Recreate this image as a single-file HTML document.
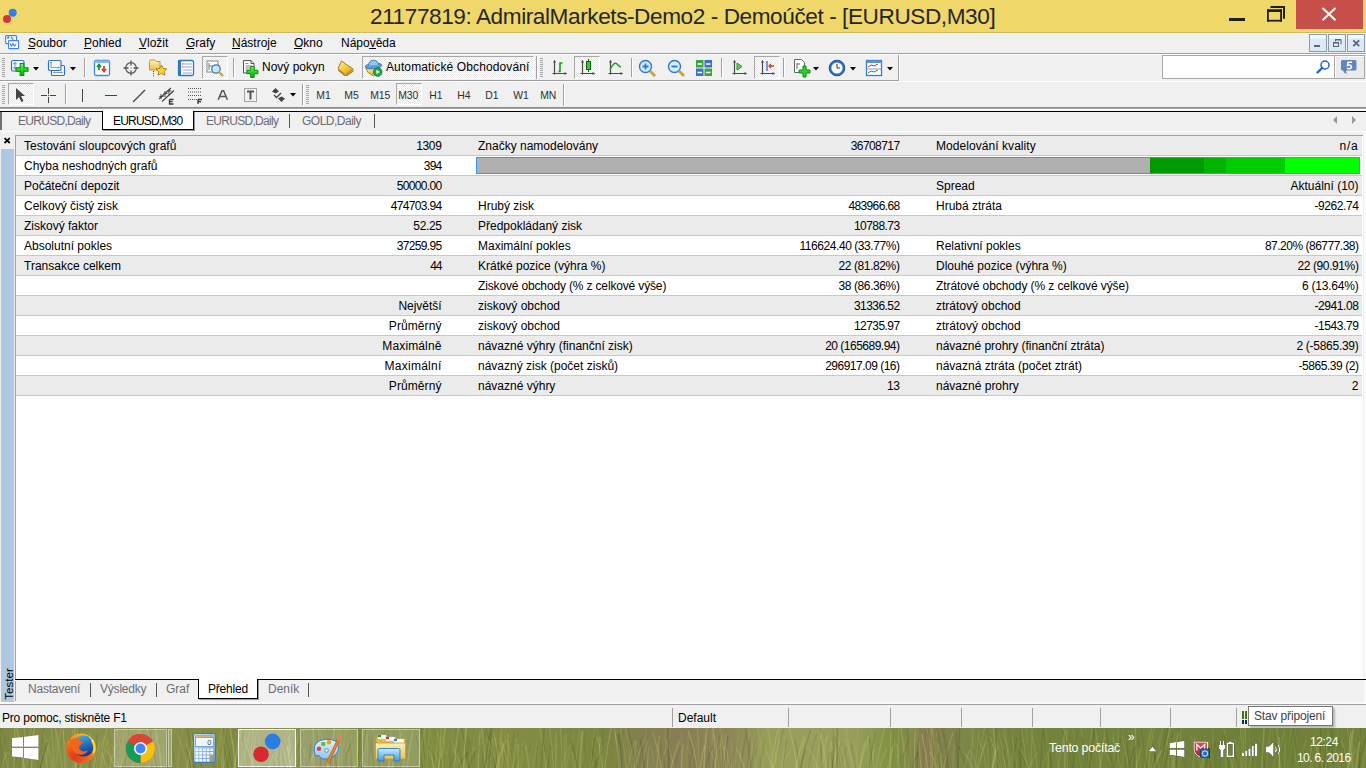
<!DOCTYPE html><html><head><meta charset="utf-8"><style>
html,body{margin:0;padding:0}body{width:1366px;height:768px;position:relative;overflow:hidden;background:#f0f0f0;font-family:"Liberation Sans", sans-serif;font-size:12px}
.a{position:absolute}.t{position:absolute;white-space:pre}
</style></head><body>
<div class="a" style="left:0px;top:0px;width:1366px;height:32px;background:#efd76a"></div>
<div class="a" style="left:0px;top:32px;width:1366px;height:1px;background:#cfb95c"></div>
<svg class="a" style="left:0px;top:0px;" width="24" height="32" viewBox="0 0 24 32"><circle cx="12.7" cy="12.7" r="4" fill="#2f80e8"/><circle cx="7" cy="19" r="4" fill="#d9333a"/></svg>
<div class="t" style="left:370px;top:6.17px;font-size:22.6px;line-height:22.6px;color:#262626;letter-spacing:-0.42px">21177819: AdmiralMarkets-Demo2 - Demoúčet - [EURUSD,M30]</div>
<div class="a" style="left:1229px;top:18px;width:16px;height:3px;background:#1e1e1e"></div>
<svg class="a" style="left:1266px;top:5px;" width="20" height="18" viewBox="0 0 20 18"><rect x="4.5" y="1" width="14.5" height="2" fill="#1e1e1e"/><rect x="17" y="1" width="2" height="12.7" fill="#1e1e1e"/><rect x="1" y="4.3" width="15" height="2.7" fill="#1e1e1e"/><rect x="1" y="4.3" width="1.8" height="12.3" fill="#1e1e1e"/><rect x="14.2" y="4.3" width="1.8" height="12.3" fill="#1e1e1e"/><rect x="1" y="14.8" width="15" height="1.8" fill="#1e1e1e"/></svg>
<div class="a" style="left:1296px;top:0px;width:67px;height:29px;background:#c74f4a"></div>
<svg class="a" style="left:1321px;top:7px;" width="16" height="14" viewBox="0 0 16 14"><path d="M1.5 1 L14.5 13.2 M14.5 1 L1.5 13.2" stroke="#fff" stroke-width="2"/></svg>
<div class="a" style="left:0px;top:33px;width:1366px;height:1px;background:#f6f6f6"></div>
<svg class="a" style="left:4px;top:34px;" width="17" height="17" viewBox="0 0 17 17"><rect x="1.6" y="1.6" width="11" height="8" rx="1" fill="#fff" stroke="#3d82ee" stroke-width="1.1"/><path d="M2.8 4.6 L4.4 3 L5.4 4.6 M7 3 L8.6 4.6 L9.2 6" stroke="#3d82ee" stroke-width="1.1" fill="none"/><rect x="4.6" y="6.6" width="10" height="8" rx="0.5" fill="#fff" stroke="#3d82ee" stroke-width="1.1"/><path d="M6.2 9.5 L7.5 12 L9 9.5 L10.5 12 L12 10.2" stroke="#3d82ee" stroke-width="1.1" fill="none"/></svg>
<div class="t" style="left:28px;top:37.34px;font-size:12px;line-height:12px;color:#000;">Soubor</div>
<div class="t" style="left:84px;top:37.34px;font-size:12px;line-height:12px;color:#000;">Pohled</div>
<div class="t" style="left:139px;top:37.34px;font-size:12px;line-height:12px;color:#000;">Vložit</div>
<div class="t" style="left:186px;top:37.34px;font-size:12px;line-height:12px;color:#000;">Grafy</div>
<div class="t" style="left:232px;top:37.34px;font-size:12px;line-height:12px;color:#000;">Nástroje</div>
<div class="t" style="left:294px;top:37.34px;font-size:12px;line-height:12px;color:#000;">Okno</div>
<div class="t" style="left:341px;top:37.34px;font-size:12px;line-height:12px;color:#000;">Nápověda</div>
<div class="a" style="left:28px;top:48px;width:7px;height:1px;background:#000"></div>
<div class="a" style="left:84px;top:48px;width:7px;height:1px;background:#000"></div>
<div class="a" style="left:139px;top:48px;width:7px;height:1px;background:#000"></div>
<div class="a" style="left:186px;top:48px;width:8px;height:1px;background:#000"></div>
<div class="a" style="left:232px;top:48px;width:8px;height:1px;background:#000"></div>
<div class="a" style="left:294px;top:48px;width:8px;height:1px;background:#000"></div>
<div class="a" style="left:369px;top:48px;width:7px;height:1px;background:#000"></div>
<div class="a" style="left:1309px;top:34px;width:18px;height:18px;background:linear-gradient(#f3f8fd 0,#f3f8fd 3px,#dde9f6 4px);border:1px solid #8a9aac;box-sizing:border-box"></div>
<div class="a" style="left:1328px;top:34px;width:18px;height:18px;background:linear-gradient(#f3f8fd 0,#f3f8fd 3px,#dde9f6 4px);border:1px solid #8a9aac;box-sizing:border-box"></div>
<div class="a" style="left:1347px;top:34px;width:18px;height:18px;background:linear-gradient(#f3f8fd 0,#f3f8fd 3px,#dde9f6 4px);border:1px solid #8a9aac;box-sizing:border-box"></div>
<svg class="a" style="left:1309px;top:34px;" width="18" height="18" viewBox="0 0 18 18"><rect x="5" y="11" width="6" height="2" fill="#56667a"/></svg>
<svg class="a" style="left:1328px;top:34px;" width="18" height="18" viewBox="0 0 18 18"><path d="M7.5 7.5 v-2 h5.5 v4.5 h-0.5" fill="none" stroke="#56667a" stroke-width="1"/><rect x="7" y="5" width="6" height="1.5" fill="#56667a"/><rect x="5.5" y="8.5" width="5" height="4" fill="none" stroke="#56667a" stroke-width="1"/><rect x="5" y="8" width="6" height="1.5" fill="#56667a"/></svg>
<svg class="a" style="left:1347px;top:34px;" width="18" height="18" viewBox="0 0 18 18"><path d="M6.3 6.3 L12.2 12.2 M12.2 6.3 L6.3 12.2" stroke="#56667a" stroke-width="1.8"/></svg>
<div class="a" style="left:0px;top:53px;width:1366px;height:1px;background:#a0a0a0"></div>
<div class="a" style="left:0px;top:54px;width:1366px;height:1px;background:#ffffff"></div>
<div class="a" style="left:2px;top:58px;width:3px;height:1px;background:#a6a6a6"></div>
<div class="a" style="left:2px;top:60px;width:3px;height:1px;background:#a6a6a6"></div>
<div class="a" style="left:2px;top:62px;width:3px;height:1px;background:#a6a6a6"></div>
<div class="a" style="left:2px;top:64px;width:3px;height:1px;background:#a6a6a6"></div>
<div class="a" style="left:2px;top:66px;width:3px;height:1px;background:#a6a6a6"></div>
<div class="a" style="left:2px;top:68px;width:3px;height:1px;background:#a6a6a6"></div>
<div class="a" style="left:2px;top:70px;width:3px;height:1px;background:#a6a6a6"></div>
<div class="a" style="left:2px;top:72px;width:3px;height:1px;background:#a6a6a6"></div>
<div class="a" style="left:2px;top:74px;width:3px;height:1px;background:#a6a6a6"></div>
<div class="a" style="left:2px;top:76px;width:3px;height:1px;background:#a6a6a6"></div>
<svg class="a" style="left:10px;top:59px;" width="20" height="18" viewBox="0 0 20 18"><defs><linearGradient id="gp" x1="0" y1="0" x2="0" y2="1"><stop offset="0" stop-color="#7dff7d"/><stop offset="0.5" stop-color="#22d822"/><stop offset="1" stop-color="#10a810"/></linearGradient></defs><rect x="1.5" y="1.5" width="12.5" height="10.5" rx="1.5" fill="#f4f8fc" stroke="#2f74c0" stroke-width="1.2"/><path d="M5 3.5 V10 M3.3 5.2 L5 3.5 L6.7 5.2 M3.3 8.3 L5 10 L6.7 8.3" stroke="#7f9fc0" fill="none" stroke-width="1.1"/><path d="M10.2 4.5 h3.6 v4.2 h4.2 v3.6 h-4.2 v4.2 h-3.6 v-4.2 h-4.2 v-3.6 h4.2 z" fill="url(#gp)" stroke="#0e8a0e" stroke-width="1.1"/></svg>
<svg class="a" style="left:33px;top:67px;" width="6" height="4" viewBox="0 0 6 4"><path d="M0 0 H6 L3 3.5 Z" fill="#000"/></svg>
<svg class="a" style="left:47px;top:59px;" width="20" height="18" viewBox="0 0 20 18"><rect x="4.5" y="6.5" width="13" height="10" rx="1.2" fill="#fff" stroke="#2f74c0" stroke-width="1.2"/><path d="M6.5 13.5 H15.5 M7.7 12.5 L6.5 13.5 L7.7 14.5 M14.3 12.5 L15.5 13.5 L14.3 14.5" stroke="#7f9fc0" fill="none" stroke-width="1"/><rect x="1.5" y="1.5" width="12.5" height="10" rx="1.2" fill="#f6f9fd" stroke="#2f74c0" stroke-width="1.2"/><path d="M4 3 V8.5 M3 4.2 L4 3 L5 4.2 M4 8.5 H12.5 M11.3 7.5 L12.5 8.5 L11.3 9.5" stroke="#7f9fc0" fill="none" stroke-width="1"/></svg>
<svg class="a" style="left:70px;top:67px;" width="6" height="4" viewBox="0 0 6 4"><path d="M0 0 H6 L3 3.5 Z" fill="#000"/></svg>
<div class="a" style="left:84px;top:58px;width:1px;height:19px;background:#a0a0a0"></div>
<div class="a" style="left:85px;top:58px;width:1px;height:19px;background:#fff"></div>
<svg class="a" style="left:93px;top:59px;" width="18" height="18" viewBox="0 0 18 18"><rect x="1.5" y="1.5" width="15" height="15" rx="1.5" fill="#fff" stroke="#3f86d8" stroke-width="1.3"/><rect x="1.5" y="1.5" width="15" height="2.5" fill="#8bb8ea"/><path d="M6 11 V6 M4 8 L6 5.5 L8 8" stroke="#1a9a1a" stroke-width="1.8" fill="none"/><path d="M11 7 V12 M9 10 L11 12.5 L13 10" stroke="#e0401a" stroke-width="1.8" fill="none"/></svg>
<svg class="a" style="left:122px;top:59px;" width="18" height="18" viewBox="0 0 18 18"><circle cx="9" cy="9" r="5.3" fill="none" stroke="#555" stroke-width="1.2"/><path d="M9 1.5 V6.5 M9 11.5 V16.5 M1.5 9 H6.5 M11.5 9 H16.5" stroke="#555" stroke-width="1.3"/><rect x="8.5" y="8.5" width="1" height="1" fill="#666"/></svg>
<svg class="a" style="left:147px;top:58px;" width="22" height="20" viewBox="0 0 22 20"><defs><linearGradient id="fd" x1="0" y1="0" x2="0" y2="1"><stop offset="0" stop-color="#fff2b0"/><stop offset="1" stop-color="#e8c050"/></linearGradient></defs><path d="M2.5 3.5 q0 -1.5 1.5 -1.5 h4 l1.5 1.5 h3.5 v8.5 h-10.5 z" fill="url(#fd)" stroke="#c49a30"/><path d="M14.5 7 l1.7 3.4 l3.7 .5 l-2.7 2.6 l.7 3.7 l-3.4 -1.8 l-3.4 1.8 l.7 -3.7 l-2.7 -2.6 l3.7 -.5 z" fill="#f7d040" stroke="#a87c10" stroke-width=".9"/><path d="M6.5 13 v6" stroke="#444" stroke-dasharray="1 1.2"/></svg>
<svg class="a" style="left:177px;top:59px;" width="18" height="18" viewBox="0 0 18 18"><rect x="1.5" y="1.5" width="15" height="15" rx="1.5" fill="#fff" stroke="#2f78c4" stroke-width="1.3"/><rect x="1" y="1" width="3" height="16" fill="#2f78c4"/><path d="M6 5 h9 M6 8 h9 M6 11 h9 M6 14 h9" stroke="#8aaee0"/><path d="M5 5 h1 M5 8 h1" stroke="#d33"/></svg>
<div class="a" style="left:202px;top:56px;width:26px;height:23px;background:repeating-conic-gradient(#fdfdfd 0 25%,#e9e9e9 0 50%) 0 0/2px 2px;border-top:1px solid #a8a8a8;border-left:1px solid #a8a8a8;border-right:1px solid #fff;border-bottom:1px solid #fff;box-sizing:border-box"></div>
<svg class="a" style="left:205px;top:59px;" width="20" height="18" viewBox="0 0 20 18"><rect x="2" y="2" width="11" height="11" fill="#fff" stroke="#888"/><path d="M4 4 v7 M4 7 h6" stroke="#777"/><circle cx="11" cy="10" r="4.2" fill="#cfe4f7" stroke="#3a7ac0" stroke-width="1.3"/><path d="M14 13 L18 17" stroke="#c8a23a" stroke-width="2.4"/></svg>
<div class="a" style="left:233px;top:58px;width:1px;height:19px;background:#a0a0a0"></div>
<div class="a" style="left:234px;top:58px;width:1px;height:19px;background:#fff"></div>
<svg class="a" style="left:242px;top:59px;" width="19" height="19" viewBox="0 0 19 19"><defs><linearGradient id="gp2" x1="0" y1="0" x2="0" y2="1"><stop offset="0" stop-color="#7dff7d"/><stop offset="0.5" stop-color="#22d822"/><stop offset="1" stop-color="#10a810"/></linearGradient></defs><path d="M1.5 1.5 h7.5 l3 3 v9.5 h-10.5 z" fill="#fbfbfb" stroke="#555" stroke-width="1"/><path d="M9 1.5 v3 h3" fill="#ddd" stroke="#555" stroke-width="1"/><path d="M3.5 4.5 h3 M3.5 7 h6.5 M3.5 9 h6.5 M3.5 11 h4" stroke="#8a8a8a" stroke-width="1"/><path d="M8.7 7.5 h3.4 v3.8 h3.8 v3.4 h-3.8 v3.8 h-3.4 v-3.8 h-3.8 v-3.4 h3.8 z" fill="url(#gp2)" stroke="#0e8a0e" stroke-width="1"/></svg>
<div class="t" style="left:262px;top:61.44px;font-size:12px;line-height:12px;color:#000;">Nový pokyn</div>
<svg class="a" style="left:337px;top:59px;" width="18" height="17" viewBox="0 0 18 17"><defs><linearGradient id="bk" x1="0" y1="0" x2="1" y2="1"><stop offset="0" stop-color="#fff0a0"/><stop offset=".6" stop-color="#f0c030"/><stop offset="1" stop-color="#c89010"/></linearGradient></defs><path d="M1 10 L8.5 16.5 L16.5 11 L16.5 12.5 L8.5 18 L1 11.5 Z" fill="#a87018"/><path d="M4.4 2 L16.3 10.2 L8.5 15.8 L1 9.6 Z" fill="url(#bk)" stroke="#a87a18" stroke-width="1"/></svg>
<div class="a" style="left:362px;top:56px;width:172px;height:23px;background:repeating-conic-gradient(#fdfdfd 0 25%,#e9e9e9 0 50%) 0 0/2px 2px;border-top:1px solid #a8a8a8;border-left:1px solid #a8a8a8;border-right:1px solid #fff;border-bottom:1px solid #fff;box-sizing:border-box"></div>
<svg class="a" style="left:364px;top:59px;" width="20" height="19" viewBox="0 0 20 19"><defs><linearGradient id="atb" x1="0" y1="0" x2="0" y2="1"><stop offset="0" stop-color="#fff0a0"/><stop offset="1" stop-color="#e0b030"/></linearGradient></defs><path d="M2 9 L16 8.5 L15.5 12 L9.5 17 L3.5 13 Z" fill="url(#atb)" stroke="#b08a20" stroke-width="1"/><ellipse cx="9.5" cy="7" rx="8.3" ry="2.8" transform="rotate(-6 9.5 7)" fill="#5aa0d8" stroke="#3a78b0" stroke-width="0.9"/><path d="M4.5 6.5 Q5 1.2 9.5 1.2 Q14 1.2 14.5 6" fill="#8cc8f0" stroke="#3a78b0" stroke-width="0.9"/><circle cx="13.7" cy="13" r="4.3" fill="#1fa84a" stroke="#0d7a30" stroke-width=".8"/><path d="M12.4 10.8 v4.4 l3.4 -2.2 z" fill="#fff"/></svg>
<div class="t" style="left:386px;top:60.84px;font-size:12px;line-height:12px;color:#000;letter-spacing:0.12px">Automatické Obchodování</div>
<div class="a" style="left:536px;top:56px;width:1px;height:23px;background:#a0a0a0"></div>
<div class="a" style="left:537px;top:56px;width:1px;height:23px;background:#fff"></div>
<div class="a" style="left:540px;top:58px;width:3px;height:1px;background:#a6a6a6"></div>
<div class="a" style="left:540px;top:60px;width:3px;height:1px;background:#a6a6a6"></div>
<div class="a" style="left:540px;top:62px;width:3px;height:1px;background:#a6a6a6"></div>
<div class="a" style="left:540px;top:64px;width:3px;height:1px;background:#a6a6a6"></div>
<div class="a" style="left:540px;top:66px;width:3px;height:1px;background:#a6a6a6"></div>
<div class="a" style="left:540px;top:68px;width:3px;height:1px;background:#a6a6a6"></div>
<div class="a" style="left:540px;top:70px;width:3px;height:1px;background:#a6a6a6"></div>
<div class="a" style="left:540px;top:72px;width:3px;height:1px;background:#a6a6a6"></div>
<div class="a" style="left:540px;top:74px;width:3px;height:1px;background:#a6a6a6"></div>
<div class="a" style="left:540px;top:76px;width:3px;height:1px;background:#a6a6a6"></div>
<svg class="a" style="left:550px;top:58px;" width="18" height="18" viewBox="0 0 18 18"><path d="M4.5 2.5 V16.5 M2.5 15.5 H16.5" stroke="#4a4a4a" stroke-width="1.2" fill="none"/><path d="M3 4.5 L4.5 2 L6 4.5 Z M14.5 14 L17 15.5 L14.5 17 Z" fill="#4a4a4a"/><path d="M8.5 13.5 H10 V5 H12.5" stroke="#1d9a1d" stroke-width="1.6" fill="none"/></svg>
<div class="a" style="left:574px;top:56px;width:26px;height:23px;background:repeating-conic-gradient(#fdfdfd 0 25%,#e9e9e9 0 50%) 0 0/2px 2px;border-top:1px solid #a8a8a8;border-left:1px solid #a8a8a8;border-right:1px solid #fff;border-bottom:1px solid #fff;box-sizing:border-box"></div>
<svg class="a" style="left:578px;top:58px;" width="18" height="18" viewBox="0 0 18 18"><path d="M4.5 2.5 V16.5 M2.5 15.5 H16.5" stroke="#4a4a4a" stroke-width="1.2" fill="none"/><path d="M3 4.5 L4.5 2 L6 4.5 Z M14.5 14 L17 15.5 L14.5 17 Z" fill="#4a4a4a"/><path d="M10.5 1 v13" stroke="#0a6a0a" stroke-width="1"/><rect x="8.5" y="3.5" width="4" height="8" fill="#3cc33c" stroke="#0a6a0a" stroke-width="1"/></svg>
<svg class="a" style="left:606px;top:58px;" width="18" height="18" viewBox="0 0 18 18"><path d="M4.5 2.5 V16.5 M2.5 15.5 H16.5" stroke="#4a4a4a" stroke-width="1.2" fill="none"/><path d="M3 4.5 L4.5 2 L6 4.5 Z M14.5 14 L17 15.5 L14.5 17 Z" fill="#4a4a4a"/><path d="M4 12 Q8 3 11 6 T15 9" stroke="#1d9a1d" stroke-width="1.4" fill="none"/></svg>
<div class="a" style="left:631px;top:58px;width:1px;height:19px;background:#a0a0a0"></div>
<div class="a" style="left:632px;top:58px;width:1px;height:19px;background:#fff"></div>
<svg class="a" style="left:638px;top:59px;" width="20" height="18" viewBox="0 0 20 18"><circle cx="7.5" cy="7.5" r="6" fill="#d6ebfb" stroke="#2b7ad0" stroke-width="1.4"/><path d="M4.5 7.5 h6 M7.5 4.5 v6" stroke="#2b7ad0" stroke-width="1.8"/><path d="M12 12 L17 17" stroke="#c9a23a" stroke-width="2.8"/></svg>
<svg class="a" style="left:667px;top:59px;" width="20" height="18" viewBox="0 0 20 18"><circle cx="7.5" cy="7.5" r="6" fill="#d6ebfb" stroke="#2b7ad0" stroke-width="1.4"/><path d="M4.5 7.5 h6" stroke="#2b7ad0" stroke-width="1.8"/><path d="M12 12 L17 17" stroke="#c9a23a" stroke-width="2.8"/></svg>
<svg class="a" style="left:695px;top:59px;" width="18" height="18" viewBox="0 0 18 18"><rect x="1" y="1" width="7.5" height="7.5" fill="#3aa53a"/><rect x="9.5" y="1" width="7.5" height="7.5" fill="#3a6fd0"/><rect x="1" y="9.5" width="7.5" height="7.5" fill="#3a6fd0"/><rect x="9.5" y="9.5" width="7.5" height="7.5" fill="#3aa53a"/><path d="M2.5 5 h4.5 M11 5 h4.5 M2.5 13.5 h4.5 M11 13.5 h4.5" stroke="#fff" stroke-width="1.5"/></svg>
<div class="a" style="left:721px;top:58px;width:1px;height:19px;background:#a0a0a0"></div>
<div class="a" style="left:722px;top:58px;width:1px;height:19px;background:#fff"></div>
<svg class="a" style="left:730px;top:58px;" width="18" height="18" viewBox="0 0 18 18"><path d="M4.5 2.5 V16.5 M2.5 15.5 H16.5" stroke="#4a4a4a" stroke-width="1.2" fill="none"/><path d="M3 4.5 L4.5 2 L6 4.5 Z M14.5 14 L17 15.5 L14.5 17 Z" fill="#4a4a4a"/><path d="M7 5 v7 l5 -3.5 z" fill="#5cd35c" stroke="#1d9a1d"/></svg>
<div class="a" style="left:754px;top:56px;width:26px;height:23px;background:repeating-conic-gradient(#fdfdfd 0 25%,#e9e9e9 0 50%) 0 0/2px 2px;border-top:1px solid #a8a8a8;border-left:1px solid #a8a8a8;border-right:1px solid #fff;border-bottom:1px solid #fff;box-sizing:border-box"></div>
<svg class="a" style="left:758px;top:58px;" width="18" height="18" viewBox="0 0 18 18"><path d="M4.5 2.5 V16.5 M2.5 15.5 H16.5" stroke="#4a4a4a" stroke-width="1.2" fill="none"/><path d="M3 4.5 L4.5 2 L6 4.5 Z M14.5 14 L17 15.5 L14.5 17 Z" fill="#4a4a4a"/><path d="M9 3 v10" stroke="#2b6ad0" stroke-width="1.3"/><path d="M16 8 h-4 M13 6 l-2 2 l2 2" stroke="#d0402a" stroke-width="1.3" fill="none"/></svg>
<div class="a" style="left:783px;top:58px;width:1px;height:19px;background:#a0a0a0"></div>
<div class="a" style="left:784px;top:58px;width:1px;height:19px;background:#fff"></div>
<svg class="a" style="left:792px;top:58px;" width="20" height="20" viewBox="0 0 20 20"><path d="M2.5 1.5 h7 l3 3 v10 h-10 z" fill="#fff" stroke="#666"/><path d="M5 5 v6 M5 6 h3" stroke="#666"/><path d="M11 8 h3 v4 h4 v3 h-4 v4 h-3 v-4 h-4 v-3 h4 z" fill="#2ed12e" stroke="#118a11"/></svg>
<svg class="a" style="left:813px;top:67px;" width="6" height="4" viewBox="0 0 6 4"><path d="M0 0 H6 L3 3.5 Z" fill="#000"/></svg>
<svg class="a" style="left:828px;top:59px;" width="18" height="18" viewBox="0 0 18 18"><circle cx="9" cy="9" r="7.8" fill="#2a72c8" stroke="#1a4f96"/><circle cx="9" cy="9" r="5.6" fill="#f4f8fc"/><path d="M9 5 v4 h3" stroke="#333" fill="none"/></svg>
<svg class="a" style="left:850px;top:67px;" width="6" height="4" viewBox="0 0 6 4"><path d="M0 0 H6 L3 3.5 Z" fill="#000"/></svg>
<svg class="a" style="left:865px;top:59px;" width="18" height="18" viewBox="0 0 18 18"><rect x="1.5" y="1.5" width="15" height="15" fill="#fff" stroke="#3f7ac8" stroke-width="1.3"/><rect x="1.5" y="1.5" width="15" height="2.5" fill="#5a92d6"/><path d="M1.5 10 h15" stroke="#7aa0d0"/><path d="M3 8 l3 -2 l3 1 l4 -2" stroke="#c03030" fill="none"/><path d="M3 14 l3 -2 l3 1 l4 -2" stroke="#20a020" fill="none"/></svg>
<svg class="a" style="left:887px;top:67px;" width="6" height="4" viewBox="0 0 6 4"><path d="M0 0 H6 L3 3.5 Z" fill="#000"/></svg>
<div class="a" style="left:1162px;top:55px;width:173px;height:24px;background:#fff;border:1px solid #a8a8a8;box-sizing:border-box"></div>
<svg class="a" style="left:1315px;top:59px;" width="16" height="16" viewBox="0 0 16 16"><circle cx="10" cy="6" r="4" fill="none" stroke="#2a62d0" stroke-width="1.5"/><path d="M7.2 8.8 L2.5 13.5" stroke="#2a62d0" stroke-width="2.4" stroke-linecap="round"/></svg>
<div class="a" style="left:1334px;top:55px;width:31px;height:24px;background:#ebebeb;border:1px solid #a8a8a8;box-shadow:inset 1px 1px 0 #fff;box-sizing:border-box"></div>
<svg class="a" style="left:1340px;top:59px;" width="18" height="17" viewBox="0 0 18 17"><path d="M2.5 1 h12.5 q1.5 0 1.5 1.5 v7.5 q0 1.5 -1.5 1.5 h-9 q0 2.5 1.5 3.5 q-3.5 -0.5 -4.5 -3.5 h-0.5 q-1.5 0 -1.5 -1.5 v-7.5 q0 -1.5 1.5 -1.5 z" fill="#6585b8"/><path d="M12 3.2 h-4 l-.4 3.2 q1 -.6 2 -.5 q1.8 .2 1.8 1.8 q0 2 -2.2 2 q-1.2 0 -2 -.6" fill="none" stroke="#fff" stroke-width="1.5"/></svg>
<div class="a" style="left:0px;top:80px;width:899px;height:1px;background:#a0a0a0"></div>
<div class="a" style="left:0px;top:81px;width:1366px;height:1px;background:#ffffff"></div>
<div class="a" style="left:898px;top:55px;width:1px;height:26px;background:#a0a0a0"></div>
<div class="a" style="left:899px;top:55px;width:1px;height:26px;background:#ffffff"></div>
<div class="a" style="left:2px;top:85px;width:3px;height:1px;background:#a6a6a6"></div>
<div class="a" style="left:2px;top:87px;width:3px;height:1px;background:#a6a6a6"></div>
<div class="a" style="left:2px;top:89px;width:3px;height:1px;background:#a6a6a6"></div>
<div class="a" style="left:2px;top:91px;width:3px;height:1px;background:#a6a6a6"></div>
<div class="a" style="left:2px;top:93px;width:3px;height:1px;background:#a6a6a6"></div>
<div class="a" style="left:2px;top:95px;width:3px;height:1px;background:#a6a6a6"></div>
<div class="a" style="left:2px;top:97px;width:3px;height:1px;background:#a6a6a6"></div>
<div class="a" style="left:2px;top:99px;width:3px;height:1px;background:#a6a6a6"></div>
<div class="a" style="left:2px;top:101px;width:3px;height:1px;background:#a6a6a6"></div>
<div class="a" style="left:2px;top:103px;width:3px;height:1px;background:#a6a6a6"></div>
<div class="a" style="left:8px;top:83px;width:26px;height:22px;background:repeating-conic-gradient(#fdfdfd 0 25%,#e9e9e9 0 50%) 0 0/2px 2px;border-top:1px solid #a8a8a8;border-left:1px solid #a8a8a8;border-right:1px solid #fff;border-bottom:1px solid #fff;box-sizing:border-box"></div>
<svg class="a" style="left:12px;top:86px;" width="16" height="18" viewBox="0 0 16 18"><path d="M4 2 V14 L7 11 L9.5 16 L11.5 15 L9 10 L13 10 Z" fill="#444"/></svg>
<svg class="a" style="left:40px;top:87px;" width="18" height="18" viewBox="0 0 18 18"><path d="M8.5 1 V7 M8.5 10 V16 M1 8.5 H7 M10 8.5 H16" stroke="#444" stroke-width="1"/><rect x="8" y="8" width="1" height="1" fill="#444"/></svg>
<div class="a" style="left:65px;top:84px;width:1px;height:20px;background:#a0a0a0"></div>
<div class="a" style="left:66px;top:84px;width:1px;height:20px;background:#fff"></div>
<div class="a" style="left:82px;top:89px;width:1px;height:13px;background:#444"></div>
<div class="a" style="left:105px;top:95px;width:12px;height:1px;background:#444"></div>
<svg class="a" style="left:132px;top:89px;" width="14" height="14" viewBox="0 0 14 14"><path d="M1 13 L13 1" stroke="#444" stroke-width="1.2"/></svg>
<svg class="a" style="left:157px;top:86px;" width="20" height="20" viewBox="0 0 20 20"><path d="M2 13 L14 2 M5 15.5 L17 4.5" stroke="#444" stroke-width="1.2" fill="none"/><path d="M4 8 v5 M8 5 v6 M12 3 v6 M2.5 10.5 h4 M6.5 7.5 h4 M10.5 5 h4" stroke="#444" stroke-width="1" fill="none"/><path d="M12.5 13.5 h4 M12.5 13.5 v4.5 h4 M12.5 15.7 h3" stroke="#333" stroke-width="1.3" fill="none"/></svg>
<svg class="a" style="left:187px;top:86px;" width="18" height="20" viewBox="0 0 18 20"><path d="M1 2.5 h13 M1 6 h13 M1 9.5 h13 M1 13.5 h13" stroke="#555" stroke-width="1" stroke-dasharray="1 1" fill="none"/><path d="M11 13.5 v4.5 M11 13.5 h4 M11 15.7 h3" stroke="#333" stroke-width="1.3" fill="none"/></svg>
<svg class="a" style="left:217px;top:90px;" width="12" height="11" viewBox="0 0 12 11"><path d="M1.2 9.8 L5 0.8 H6.6 L10.4 9.8 M2.8 6.5 H8.8" stroke="#555" stroke-width="1.5" fill="none"/></svg>
<svg class="a" style="left:243px;top:87px;" width="15" height="16" viewBox="0 0 15 16"><rect x="1.5" y="1.5" width="12" height="13" fill="none" stroke="#555" stroke-width="1" stroke-dasharray="1 1"/><path d="M4 4.5 h7 M7.5 4.5 v8" stroke="#555" stroke-width="2" fill="none"/></svg>
<svg class="a" style="left:271px;top:87px;" width="16" height="16" viewBox="0 0 16 16"><path d="M1 4.5 L4.5 1 L8 4.5 L4.5 6.5 Z" fill="#444"/><path d="M7 11.5 L10.5 9.5 L14 11.5 L10.5 15 Z" fill="#444"/><path d="M3 8 L5.5 10.5 L10 6" stroke="#444" stroke-width="1.3" fill="none"/></svg>
<svg class="a" style="left:290px;top:93px;" width="6" height="4" viewBox="0 0 6 4"><path d="M0 0 H6 L3 3.5 Z" fill="#000"/></svg>
<div class="a" style="left:302px;top:84px;width:1px;height:21px;background:#a0a0a0"></div>
<div class="a" style="left:303px;top:84px;width:1px;height:21px;background:#fff"></div>
<div class="a" style="left:306px;top:85px;width:3px;height:1px;background:#a6a6a6"></div>
<div class="a" style="left:306px;top:87px;width:3px;height:1px;background:#a6a6a6"></div>
<div class="a" style="left:306px;top:89px;width:3px;height:1px;background:#a6a6a6"></div>
<div class="a" style="left:306px;top:91px;width:3px;height:1px;background:#a6a6a6"></div>
<div class="a" style="left:306px;top:93px;width:3px;height:1px;background:#a6a6a6"></div>
<div class="a" style="left:306px;top:95px;width:3px;height:1px;background:#a6a6a6"></div>
<div class="a" style="left:306px;top:97px;width:3px;height:1px;background:#a6a6a6"></div>
<div class="a" style="left:306px;top:99px;width:3px;height:1px;background:#a6a6a6"></div>
<div class="a" style="left:306px;top:101px;width:3px;height:1px;background:#a6a6a6"></div>
<div class="a" style="left:306px;top:103px;width:3px;height:1px;background:#a6a6a6"></div>
<div class="a" style="left:396px;top:83px;width:26px;height:22px;background:repeating-conic-gradient(#fdfdfd 0 25%,#e9e9e9 0 50%) 0 0/2px 2px;border-top:1px solid #a8a8a8;border-left:1px solid #a8a8a8;border-right:1px solid #fff;border-bottom:1px solid #fff;box-sizing:border-box"></div>
<div class="t" style="left:303.5px;width:40px;top:90.60px;font-size:10.4px;line-height:10.4px;color:#2e2e2e;text-align:center;">M1</div>
<div class="t" style="left:331.5px;width:40px;top:90.60px;font-size:10.4px;line-height:10.4px;color:#2e2e2e;text-align:center;">M5</div>
<div class="t" style="left:360.25px;width:40px;top:90.60px;font-size:10.4px;line-height:10.4px;color:#2e2e2e;text-align:center;">M15</div>
<div class="t" style="left:388.3px;width:40px;top:90.60px;font-size:10.4px;line-height:10.4px;color:#2e2e2e;text-align:center;">M30</div>
<div class="t" style="left:416.0px;width:40px;top:90.60px;font-size:10.4px;line-height:10.4px;color:#2e2e2e;text-align:center;">H1</div>
<div class="t" style="left:443.8px;width:40px;top:90.60px;font-size:10.4px;line-height:10.4px;color:#2e2e2e;text-align:center;">H4</div>
<div class="t" style="left:472.0px;width:40px;top:90.60px;font-size:10.4px;line-height:10.4px;color:#2e2e2e;text-align:center;">D1</div>
<div class="t" style="left:501.04999999999995px;width:40px;top:90.60px;font-size:10.4px;line-height:10.4px;color:#2e2e2e;text-align:center;">W1</div>
<div class="t" style="left:528.25px;width:40px;top:90.60px;font-size:10.4px;line-height:10.4px;color:#2e2e2e;text-align:center;">MN</div>
<div class="a" style="left:563px;top:84px;width:1px;height:22px;background:#a0a0a0"></div>
<div class="a" style="left:564px;top:84px;width:1px;height:22px;background:#fff"></div>
<div class="a" style="left:0px;top:107px;width:1366px;height:1px;background:#8a8a8a"></div>
<div class="a" style="left:0px;top:108px;width:1366px;height:1px;background:#a8a8a8"></div>
<div class="a" style="left:0px;top:109px;width:1366px;height:2px;background:#fafafa"></div>
<div class="a" style="left:0px;top:111px;width:1366px;height:1px;background:#000"></div>
<div class="a" style="left:0px;top:112px;width:2px;height:18px;background:#707070"></div>
<div class="t" style="left:18px;top:114.84px;font-size:12px;line-height:12px;color:#6c6c74;letter-spacing:-0.7px">EURUSD,Daily</div>
<div class="a" style="left:102px;top:111px;width:92px;height:19px;background:#fff;border:1px solid #000;border-top:none;box-sizing:border-box"></div>
<div class="a" style="left:194px;top:112px;width:1px;height:19px;background:#9a9a9a"></div>
<div class="a" style="left:103px;top:130px;width:92px;height:1px;background:#9a9a9a"></div>
<div class="t" style="left:113px;top:114.84px;font-size:12px;line-height:12px;color:#000;letter-spacing:-0.8px">EURUSD,M30</div>
<div class="t" style="left:206px;top:114.84px;font-size:12px;line-height:12px;color:#6c6c74;letter-spacing:-0.7px">EURUSD,Daily</div>
<div class="a" style="left:289px;top:114px;width:1px;height:14px;background:#555"></div>
<div class="t" style="left:302px;top:114.84px;font-size:12px;line-height:12px;color:#6c6c74;letter-spacing:-0.5px">GOLD,Daily</div>
<div class="a" style="left:374px;top:114px;width:1px;height:14px;background:#555"></div>
<svg class="a" style="left:1331px;top:115px;" width="8" height="10" viewBox="0 0 8 10"><path d="M6 1 L2 5 L6 9 Z" fill="#999"/></svg>
<svg class="a" style="left:1350px;top:115px;" width="8" height="10" viewBox="0 0 8 10"><path d="M2 1 L6 5 L2 9 Z" fill="#999"/></svg>
<div class="a" style="left:0px;top:131px;width:1366px;height:1px;background:#ffffff"></div>
<div class="a" style="left:0px;top:132px;width:1366px;height:570px;background:#f0f0f0"></div>
<div class="a" style="left:1px;top:149px;width:13px;height:553px;background:#aec8e2"></div>
<svg class="a" style="left:3px;top:137px;" width="8" height="7" viewBox="0 0 8 7"><path d="M1.5 1.2 L6.8 6 M6.8 1.2 L1.5 6" stroke="#000" stroke-width="1.7"/></svg>
<div class="t" style="left:-11.5px;top:677px;width:40px;height:14px;font-size:11.6px;line-height:14px;color:#000;transform:rotate(-90deg);text-align:center">Tester</div>
<div class="a" style="left:15px;top:135px;width:1348px;height:545px;background:#fff"></div>
<div class="a" style="left:1363px;top:132px;width:1px;height:570px;background:#f0f0f0"></div>
<div class="a" style="left:1364px;top:132px;width:2px;height:570px;background:#fafafa"></div>
<div class="a" style="left:15px;top:135px;width:1348px;height:1px;background:#a0a0a0"></div>
<div class="a" style="left:15px;top:135px;width:1px;height:545px;background:#a0a0a0"></div>
<div class="a" style="left:16px;top:136px;width:1346px;height:19px;background:#ebebeb"></div>
<div class="a" style="left:16px;top:155px;width:1346px;height:1px;background:#c8c8c8"></div>
<div class="t" style="left:24px;top:139.84px;font-size:12px;line-height:12px;color:#000;letter-spacing:0.038px">Testování sloupcových grafů</div>
<div class="t" style="right:924.5px;top:139.84px;font-size:12px;line-height:12px;color:#000;text-align:right;letter-spacing:-0.333px">1309</div>
<div class="t" style="left:478px;top:139.84px;font-size:12px;line-height:12px;color:#000;letter-spacing:0.000px">Značky namodelovány</div>
<div class="t" style="right:466.5px;top:139.84px;font-size:12px;line-height:12px;color:#000;text-align:right;letter-spacing:-0.571px">36708717</div>
<div class="t" style="left:936px;top:139.84px;font-size:12px;line-height:12px;color:#000;letter-spacing:0.059px">Modelování kvality</div>
<div class="t" style="right:7.5px;top:139.84px;font-size:12px;line-height:12px;color:#000;text-align:right;letter-spacing:0.800px">n/a</div>
<div class="a" style="left:16px;top:156px;width:1346px;height:19px;background:#ffffff"></div>
<div class="a" style="left:16px;top:175px;width:1346px;height:1px;background:#c8c8c8"></div>
<div class="t" style="left:24px;top:159.84px;font-size:12px;line-height:12px;color:#000;">Chyba neshodných grafů</div>
<div class="t" style="right:924.5px;top:159.84px;font-size:12px;line-height:12px;color:#000;text-align:right;letter-spacing:-0.750px">394</div>
<div class="a" style="left:476px;top:157px;width:884px;height:17px;background:#b0b0b0;border:1px solid #3296f8;box-sizing:border-box"></div>
<div class="a" style="left:1150px;top:158px;width:54px;height:15px;background:#009900"></div>
<div class="a" style="left:1204px;top:158px;width:22px;height:15px;background:#00b400"></div>
<div class="a" style="left:1226px;top:158px;width:59px;height:15px;background:#00cc00"></div>
<div class="a" style="left:1285px;top:158px;width:74px;height:15px;background:#00ff00"></div>
<div class="a" style="left:16px;top:176px;width:1346px;height:19px;background:#ebebeb"></div>
<div class="a" style="left:16px;top:195px;width:1346px;height:1px;background:#c8c8c8"></div>
<div class="t" style="left:24px;top:179.84px;font-size:12px;line-height:12px;color:#000;">Počáteční depozit</div>
<div class="t" style="right:924.5px;top:179.84px;font-size:12px;line-height:12px;color:#000;text-align:right;letter-spacing:-0.657px">50000.00</div>
<div class="t" style="left:936px;top:179.84px;font-size:12px;line-height:12px;color:#000;">Spread</div>
<div class="t" style="right:7.5px;top:179.84px;font-size:12px;line-height:12px;color:#000;text-align:right;letter-spacing:0.000px">Aktuální (10)</div>
<div class="a" style="left:16px;top:196px;width:1346px;height:19px;background:#ffffff"></div>
<div class="a" style="left:16px;top:215px;width:1346px;height:1px;background:#c8c8c8"></div>
<div class="t" style="left:24px;top:199.84px;font-size:12px;line-height:12px;color:#000;">Celkový čistý zisk</div>
<div class="t" style="right:924.5px;top:199.84px;font-size:12px;line-height:12px;color:#000;text-align:right;letter-spacing:-0.675px">474703.94</div>
<div class="t" style="left:478px;top:199.84px;font-size:12px;line-height:12px;color:#000;">Hrubý zisk</div>
<div class="t" style="right:466.5px;top:199.84px;font-size:12px;line-height:12px;color:#000;text-align:right;letter-spacing:-0.625px">483966.68</div>
<div class="t" style="left:936px;top:199.84px;font-size:12px;line-height:12px;color:#000;">Hrubá ztráta</div>
<div class="t" style="right:7.5px;top:199.84px;font-size:12px;line-height:12px;color:#000;text-align:right;letter-spacing:-0.429px">-9262.74</div>
<div class="a" style="left:16px;top:216px;width:1346px;height:19px;background:#ebebeb"></div>
<div class="a" style="left:16px;top:235px;width:1346px;height:1px;background:#c8c8c8"></div>
<div class="t" style="left:24px;top:219.84px;font-size:12px;line-height:12px;color:#000;">Ziskový faktor</div>
<div class="t" style="right:924.5px;top:219.84px;font-size:12px;line-height:12px;color:#000;text-align:right;letter-spacing:-0.375px">52.25</div>
<div class="t" style="left:478px;top:219.84px;font-size:12px;line-height:12px;color:#000;">Předpokládaný zisk</div>
<div class="t" style="right:466.5px;top:219.84px;font-size:12px;line-height:12px;color:#000;text-align:right;letter-spacing:-0.571px">10788.73</div>
<div class="a" style="left:16px;top:236px;width:1346px;height:19px;background:#ffffff"></div>
<div class="a" style="left:16px;top:255px;width:1346px;height:1px;background:#c8c8c8"></div>
<div class="t" style="left:24px;top:239.84px;font-size:12px;line-height:12px;color:#000;">Absolutní pokles</div>
<div class="t" style="right:924.5px;top:239.84px;font-size:12px;line-height:12px;color:#000;text-align:right;letter-spacing:-0.657px">37259.95</div>
<div class="t" style="left:478px;top:239.84px;font-size:12px;line-height:12px;color:#000;">Maximální pokles</div>
<div class="t" style="right:466.5px;top:239.84px;font-size:12px;line-height:12px;color:#000;text-align:right;letter-spacing:-0.435px">116624.40 (33.77%)</div>
<div class="t" style="left:936px;top:239.84px;font-size:12px;line-height:12px;color:#000;">Relativní pokles</div>
<div class="t" style="right:7.5px;top:239.84px;font-size:12px;line-height:12px;color:#000;text-align:right;letter-spacing:-0.500px">87.20% (86777.38)</div>
<div class="a" style="left:16px;top:256px;width:1346px;height:19px;background:#ebebeb"></div>
<div class="a" style="left:16px;top:275px;width:1346px;height:1px;background:#c8c8c8"></div>
<div class="t" style="left:24px;top:259.84px;font-size:12px;line-height:12px;color:#000;">Transakce celkem</div>
<div class="t" style="right:924.5px;top:259.84px;font-size:12px;line-height:12px;color:#000;text-align:right;letter-spacing:-1.000px">44</div>
<div class="t" style="left:478px;top:259.84px;font-size:12px;line-height:12px;color:#000;">Krátké pozice (výhra %)</div>
<div class="t" style="right:466.5px;top:259.84px;font-size:12px;line-height:12px;color:#000;text-align:right;letter-spacing:-0.400px">22 (81.82%)</div>
<div class="t" style="left:936px;top:259.84px;font-size:12px;line-height:12px;color:#000;">Dlouhé pozice (výhra %)</div>
<div class="t" style="right:7.5px;top:259.84px;font-size:12px;line-height:12px;color:#000;text-align:right;letter-spacing:-0.400px">22 (90.91%)</div>
<div class="a" style="left:16px;top:276px;width:1346px;height:19px;background:#ffffff"></div>
<div class="a" style="left:16px;top:295px;width:1346px;height:1px;background:#c8c8c8"></div>
<div class="t" style="left:478px;top:279.84px;font-size:12px;line-height:12px;color:#000;letter-spacing:-0.152px">Ziskové obchody (% z celkové výše)</div>
<div class="t" style="right:466.5px;top:279.84px;font-size:12px;line-height:12px;color:#000;text-align:right;letter-spacing:-0.400px">38 (86.36%)</div>
<div class="t" style="left:936px;top:279.84px;font-size:12px;line-height:12px;color:#000;letter-spacing:-0.088px">Ztrátové obchody (% z celkové výše)</div>
<div class="t" style="right:7.5px;top:279.84px;font-size:12px;line-height:12px;color:#000;text-align:right;letter-spacing:-0.222px">6 (13.64%)</div>
<div class="a" style="left:16px;top:296px;width:1346px;height:19px;background:#ebebeb"></div>
<div class="a" style="left:16px;top:315px;width:1346px;height:1px;background:#c8c8c8"></div>
<div class="t" style="right:924.5px;top:299.84px;font-size:12px;line-height:12px;color:#000;text-align:right;letter-spacing:-0.029px">Největší</div>
<div class="t" style="left:478px;top:299.84px;font-size:12px;line-height:12px;color:#000;">ziskový obchod</div>
<div class="t" style="right:466.5px;top:299.84px;font-size:12px;line-height:12px;color:#000;text-align:right;letter-spacing:-0.571px">31336.52</div>
<div class="t" style="left:936px;top:299.84px;font-size:12px;line-height:12px;color:#000;">ztrátový obchod</div>
<div class="t" style="right:7.5px;top:299.84px;font-size:12px;line-height:12px;color:#000;text-align:right;letter-spacing:-0.429px">-2941.08</div>
<div class="a" style="left:16px;top:316px;width:1346px;height:19px;background:#ffffff"></div>
<div class="a" style="left:16px;top:335px;width:1346px;height:1px;background:#c8c8c8"></div>
<div class="t" style="right:924.5px;top:319.84px;font-size:12px;line-height:12px;color:#000;text-align:right;letter-spacing:0.086px">Průměrný</div>
<div class="t" style="left:478px;top:319.84px;font-size:12px;line-height:12px;color:#000;">ziskový obchod</div>
<div class="t" style="right:466.5px;top:319.84px;font-size:12px;line-height:12px;color:#000;text-align:right;letter-spacing:-0.571px">12735.97</div>
<div class="t" style="left:936px;top:319.84px;font-size:12px;line-height:12px;color:#000;">ztrátový obchod</div>
<div class="t" style="right:7.5px;top:319.84px;font-size:12px;line-height:12px;color:#000;text-align:right;letter-spacing:-0.429px">-1543.79</div>
<div class="a" style="left:16px;top:336px;width:1346px;height:19px;background:#ebebeb"></div>
<div class="a" style="left:16px;top:355px;width:1346px;height:1px;background:#c8c8c8"></div>
<div class="t" style="right:924.5px;top:339.84px;font-size:12px;line-height:12px;color:#000;text-align:right;letter-spacing:0.125px">Maximálně</div>
<div class="t" style="left:478px;top:339.84px;font-size:12px;line-height:12px;color:#000;">návazné výhry (finanční zisk)</div>
<div class="t" style="right:466.5px;top:339.84px;font-size:12px;line-height:12px;color:#000;text-align:right;letter-spacing:-0.508px">20 (165689.94)</div>
<div class="t" style="left:936px;top:339.84px;font-size:12px;line-height:12px;color:#000;letter-spacing:-0.032px">návazné prohry (finanční ztráta)</div>
<div class="t" style="right:7.5px;top:339.84px;font-size:12px;line-height:12px;color:#000;text-align:right;letter-spacing:-0.273px">2 (-5865.39)</div>
<div class="a" style="left:16px;top:356px;width:1346px;height:19px;background:#ffffff"></div>
<div class="a" style="left:16px;top:375px;width:1346px;height:1px;background:#c8c8c8"></div>
<div class="t" style="right:924.5px;top:359.84px;font-size:12px;line-height:12px;color:#000;text-align:right;letter-spacing:0.250px">Maximální</div>
<div class="t" style="left:478px;top:359.84px;font-size:12px;line-height:12px;color:#000;">návazný zisk (počet zisků)</div>
<div class="t" style="right:466.5px;top:359.84px;font-size:12px;line-height:12px;color:#000;text-align:right;letter-spacing:-0.508px">296917.09 (16)</div>
<div class="t" style="left:936px;top:359.84px;font-size:12px;line-height:12px;color:#000;">návazná ztráta (počet ztrát)</div>
<div class="t" style="right:7.5px;top:359.84px;font-size:12px;line-height:12px;color:#000;text-align:right;letter-spacing:-0.455px">-5865.39 (2)</div>
<div class="a" style="left:16px;top:376px;width:1346px;height:19px;background:#ebebeb"></div>
<div class="a" style="left:16px;top:395px;width:1346px;height:1px;background:#c8c8c8"></div>
<div class="t" style="right:924.5px;top:379.84px;font-size:12px;line-height:12px;color:#000;text-align:right;letter-spacing:0.086px">Průměrný</div>
<div class="t" style="left:478px;top:379.84px;font-size:12px;line-height:12px;color:#000;">návazné výhry</div>
<div class="t" style="right:466.5px;top:379.84px;font-size:12px;line-height:12px;color:#000;text-align:right;letter-spacing:-0.400px">13</div>
<div class="t" style="left:936px;top:379.84px;font-size:12px;line-height:12px;color:#000;">návazné prohry</div>
<div class="t" style="right:7.5px;top:379.84px;font-size:12px;line-height:12px;color:#000;text-align:right;">2</div>
<div class="a" style="left:15px;top:679px;width:1351px;height:1px;background:#000"></div>
<div class="a" style="left:16px;top:681px;width:1347px;height:20px;background:#f0f0f0"></div>
<div class="a" style="left:15px;top:681px;width:1px;height:20px;background:#a0a0a0"></div>
<div class="t" style="left:28px;top:682.84px;font-size:12px;line-height:12px;color:#6c6c74;letter-spacing:-0.2px">Nastavení</div>
<div class="a" style="left:90px;top:683px;width:1px;height:14px;background:#555"></div>
<div class="t" style="left:100px;top:682.84px;font-size:12px;line-height:12px;color:#6c6c74;letter-spacing:-0.2px">Výsledky</div>
<div class="a" style="left:156px;top:683px;width:1px;height:14px;background:#555"></div>
<div class="t" style="left:166px;top:682.84px;font-size:12px;line-height:12px;color:#6c6c74;">Graf</div>
<div class="a" style="left:198px;top:679px;width:60px;height:20px;background:#fff;border:1px solid #000;border-top:none;box-sizing:border-box"></div>
<div class="a" style="left:258px;top:680px;width:1px;height:20px;background:#9a9a9a"></div>
<div class="a" style="left:199px;top:699px;width:60px;height:1px;background:#9a9a9a"></div>
<div class="t" style="left:208px;top:682.84px;font-size:12px;line-height:12px;color:#000;letter-spacing:-0.2px">Přehled</div>
<div class="t" style="left:268px;top:682.84px;font-size:12px;line-height:12px;color:#6c6c74;">Deník</div>
<div class="a" style="left:308px;top:683px;width:1px;height:14px;background:#555"></div>
<div class="a" style="left:0px;top:702px;width:1366px;height:2px;background:#fafafa"></div>
<div class="a" style="left:0px;top:704px;width:1366px;height:1px;background:#a0a0a0"></div>
<div class="t" style="left:2px;top:712.34px;font-size:12px;line-height:12px;color:#000;letter-spacing:-0.2px">Pro pomoc, stiskněte F1</div>
<div class="a" style="left:672px;top:708px;width:1px;height:19px;background:#a0a0a0"></div>
<div class="a" style="left:788px;top:708px;width:1px;height:19px;background:#a0a0a0"></div>
<div class="a" style="left:890px;top:708px;width:1px;height:19px;background:#a0a0a0"></div>
<div class="a" style="left:961px;top:708px;width:1px;height:19px;background:#a0a0a0"></div>
<div class="a" style="left:1032px;top:708px;width:1px;height:19px;background:#a0a0a0"></div>
<div class="a" style="left:1100px;top:708px;width:1px;height:19px;background:#a0a0a0"></div>
<div class="a" style="left:1170px;top:708px;width:1px;height:19px;background:#a0a0a0"></div>
<div class="a" style="left:1236px;top:708px;width:1px;height:19px;background:#a0a0a0"></div>
<div class="t" style="left:678px;top:712.34px;font-size:12px;line-height:12px;color:#000;">Default</div>
<div class="a" style="left:1242px;top:711px;width:2px;height:8px;background:#4d6b0e"></div>
<div class="a" style="left:1245px;top:711px;width:2px;height:8px;background:#4d6b0e"></div>
<div class="a" style="left:1242px;top:720px;width:2px;height:4px;background:#0e2d4a"></div>
<div class="a" style="left:1245px;top:720px;width:2px;height:4px;background:#0e2d4a"></div>
<div class="a" style="left:1248px;top:706px;width:85px;height:20px;background:#fff;border:1px solid #767676;box-sizing:border-box;box-shadow:2px 2px 2px rgba(0,0,0,0.25)"></div>
<div class="t" style="left:1254px;top:710.34px;font-size:12px;line-height:12px;color:#404048;letter-spacing:-0.15px">Stav připojení</div>
<div class="a" style="left:0;top:728px;width:1366px;height:40px;background:linear-gradient(90deg,#7e8743 0.00%,#838b47 2.93%,#8a904c 7.32%,#888e4a 13.18%,#818943 16.84%,#878e52 21.96%,#818a45 26.35%,#7f8a42 30.75%,#848c44 38.07%,#7b8540 43.92%,#838050 46.85%,#8a7e56 50.51%,#8d8658 53.44%,#979d5c 56.37%,#9a9f5e 62.23%,#7f9044 65.52%,#867e52 67.72%,#7c8648 70.64%,#74843d 76.13%,#73833d 84.19%,#6e7f39 91.51%,#73823d 100.00%)"></div>
<svg class="a" style="left:0px;top:728px;" width="1366" height="40" viewBox="0 0 1366 40"><path d="M618.0 41 Q618.0 23.6 618.1 6.3" stroke="rgba(55,65,20,0.21)" stroke-width="1.2" fill="none"/><path d="M252.2 41 Q249.8 29.4 244.1 17.8" stroke="rgba(55,65,20,0.17)" stroke-width="0.9" fill="none"/><path d="M123.9 41 Q126.7 16.2 133.5 -8.5" stroke="rgba(150,175,60,0.25)" stroke-width="1.6" fill="none"/><path d="M893.3 41 Q893.4 15.8 893.8 -9.5" stroke="rgba(55,65,20,0.10)" stroke-width="0.7" fill="none"/><path d="M259.8 41 Q259.5 23.6 258.6 6.2" stroke="rgba(215,215,130,0.11)" stroke-width="1.4" fill="none"/><path d="M709.1 41 Q708.9 27.1 708.3 13.2" stroke="rgba(55,65,20,0.15)" stroke-width="0.9" fill="none"/><path d="M1362.8 41 Q1361.7 27.9 1359.1 14.8" stroke="rgba(150,175,60,0.28)" stroke-width="0.8" fill="none"/><path d="M394.8 41 Q396.9 22.5 401.8 4.0" stroke="rgba(215,215,130,0.24)" stroke-width="1.0" fill="none"/><path d="M1308.7 41 Q1311.1 19.2 1316.9 -2.7" stroke="rgba(150,175,60,0.15)" stroke-width="1.1" fill="none"/><path d="M1339.2 41 Q1340.8 26.5 1344.7 12.0" stroke="rgba(215,215,130,0.11)" stroke-width="0.9" fill="none"/><path d="M119.0 41 Q116.7 28.8 111.4 16.5" stroke="rgba(215,215,130,0.27)" stroke-width="0.8" fill="none"/><path d="M138.0 41 Q138.4 18.6 139.2 -3.8" stroke="rgba(215,215,130,0.24)" stroke-width="1.0" fill="none"/><path d="M260.5 41 Q258.2 26.8 252.8 12.5" stroke="rgba(55,65,20,0.10)" stroke-width="1.0" fill="none"/><path d="M290.8 41 Q289.6 29.6 286.9 18.1" stroke="rgba(215,215,130,0.27)" stroke-width="1.5" fill="none"/><path d="M287.8 41 Q285.4 26.7 279.8 12.5" stroke="rgba(215,215,130,0.25)" stroke-width="1.6" fill="none"/><path d="M291.3 41 Q290.1 21.3 287.2 1.5" stroke="rgba(215,215,130,0.24)" stroke-width="0.7" fill="none"/><path d="M123.1 41 Q122.3 26.0 120.5 11.0" stroke="rgba(55,65,20,0.11)" stroke-width="1.1" fill="none"/><path d="M1310.2 41 Q1308.3 30.7 1303.8 20.3" stroke="rgba(55,65,20,0.16)" stroke-width="0.8" fill="none"/><path d="M1240.9 41 Q1242.3 18.8 1245.7 -3.4" stroke="rgba(150,175,60,0.19)" stroke-width="1.5" fill="none"/><path d="M268.5 41 Q268.1 26.1 267.0 11.1" stroke="rgba(150,175,60,0.28)" stroke-width="0.7" fill="none"/><path d="M52.9 41 Q51.4 27.8 48.0 14.7" stroke="rgba(150,175,60,0.19)" stroke-width="1.4" fill="none"/><path d="M814.8 41 Q812.2 28.1 806.1 15.2" stroke="rgba(215,215,130,0.13)" stroke-width="0.8" fill="none"/><path d="M764.1 41 Q766.6 20.4 772.4 -0.2" stroke="rgba(150,175,60,0.24)" stroke-width="0.8" fill="none"/><path d="M22.6 41 Q20.7 16.6 16.2 -7.9" stroke="rgba(215,215,130,0.18)" stroke-width="1.0" fill="none"/><path d="M781.6 41 Q784.5 31.1 791.2 21.2" stroke="rgba(215,215,130,0.17)" stroke-width="1.3" fill="none"/><path d="M944.2 41 Q941.3 16.1 934.6 -8.8" stroke="rgba(55,65,20,0.10)" stroke-width="1.5" fill="none"/><path d="M957.5 41 Q957.4 26.6 957.2 12.3" stroke="rgba(150,175,60,0.15)" stroke-width="1.3" fill="none"/><path d="M435.6 41 Q437.0 25.1 440.4 9.1" stroke="rgba(150,175,60,0.16)" stroke-width="1.5" fill="none"/><path d="M1006.9 41 Q1006.0 31.5 1003.9 22.0" stroke="rgba(55,65,20,0.19)" stroke-width="1.3" fill="none"/><path d="M1230.5 41 Q1232.7 29.3 1237.8 17.7" stroke="rgba(150,175,60,0.21)" stroke-width="1.2" fill="none"/><path d="M853.7 41 Q851.2 26.2 845.3 11.3" stroke="rgba(215,215,130,0.20)" stroke-width="1.2" fill="none"/><path d="M1356.9 41 Q1358.3 22.3 1361.6 3.6" stroke="rgba(150,175,60,0.26)" stroke-width="1.2" fill="none"/><path d="M601.8 41 Q598.9 28.6 592.3 16.3" stroke="rgba(150,175,60,0.16)" stroke-width="1.2" fill="none"/><path d="M657.0 41 Q657.7 24.2 659.3 7.4" stroke="rgba(215,215,130,0.23)" stroke-width="1.5" fill="none"/><path d="M349.5 41 Q347.7 27.4 343.5 13.7" stroke="rgba(215,215,130,0.15)" stroke-width="0.8" fill="none"/><path d="M1237.2 41 Q1236.2 31.1 1233.8 21.2" stroke="rgba(55,65,20,0.14)" stroke-width="1.3" fill="none"/><path d="M271.2 41 Q273.4 31.5 278.8 22.0" stroke="rgba(215,215,130,0.25)" stroke-width="1.0" fill="none"/><path d="M796.5 41 Q798.5 24.2 803.3 7.4" stroke="rgba(215,215,130,0.12)" stroke-width="1.4" fill="none"/><path d="M971.5 41 Q971.2 18.5 970.5 -4.1" stroke="rgba(150,175,60,0.19)" stroke-width="0.9" fill="none"/><path d="M292.4 41 Q291.3 24.1 288.7 7.3" stroke="rgba(215,215,130,0.21)" stroke-width="1.4" fill="none"/><path d="M1341.5 41 Q1343.7 16.1 1348.9 -8.9" stroke="rgba(55,65,20,0.09)" stroke-width="0.6" fill="none"/><path d="M968.0 41 Q965.1 29.4 958.4 17.7" stroke="rgba(55,65,20,0.12)" stroke-width="0.7" fill="none"/><path d="M621.3 41 Q619.1 19.7 614.1 -1.7" stroke="rgba(215,215,130,0.25)" stroke-width="0.6" fill="none"/><path d="M859.5 41 Q861.3 27.0 865.6 12.9" stroke="rgba(215,215,130,0.21)" stroke-width="1.6" fill="none"/><path d="M935.0 41 Q932.1 18.6 925.2 -3.7" stroke="rgba(215,215,130,0.19)" stroke-width="1.1" fill="none"/><path d="M975.6 41 Q976.7 21.6 979.5 2.1" stroke="rgba(215,215,130,0.15)" stroke-width="1.1" fill="none"/><path d="M839.3 41 Q841.8 29.4 847.5 17.7" stroke="rgba(55,65,20,0.14)" stroke-width="0.7" fill="none"/><path d="M1273.9 41 Q1274.7 23.4 1276.4 5.9" stroke="rgba(55,65,20,0.10)" stroke-width="1.5" fill="none"/><path d="M514.7 41 Q517.4 29.4 523.6 17.9" stroke="rgba(55,65,20,0.20)" stroke-width="1.1" fill="none"/><path d="M889.7 41 Q890.6 29.8 892.5 18.6" stroke="rgba(215,215,130,0.23)" stroke-width="1.3" fill="none"/><path d="M291.4 41 Q291.6 32.6 292.1 24.2" stroke="rgba(150,175,60,0.30)" stroke-width="1.4" fill="none"/><path d="M437.7 41 Q435.2 21.6 429.3 2.2" stroke="rgba(150,175,60,0.28)" stroke-width="1.0" fill="none"/><path d="M751.7 41 Q753.6 16.0 757.9 -9.0" stroke="rgba(55,65,20,0.15)" stroke-width="0.7" fill="none"/><path d="M1092.6 41 Q1090.5 29.3 1085.4 17.6" stroke="rgba(215,215,130,0.16)" stroke-width="0.7" fill="none"/><path d="M705.6 41 Q708.2 27.6 714.5 14.1" stroke="rgba(55,65,20,0.20)" stroke-width="1.1" fill="none"/><path d="M1296.5 41 Q1295.3 24.7 1292.3 8.4" stroke="rgba(215,215,130,0.14)" stroke-width="1.3" fill="none"/><path d="M872.7 41 Q871.6 25.3 868.9 9.6" stroke="rgba(55,65,20,0.20)" stroke-width="1.0" fill="none"/><path d="M1154.6 41 Q1157.4 30.4 1164.0 19.8" stroke="rgba(150,175,60,0.18)" stroke-width="1.1" fill="none"/><path d="M782.7 41 Q783.3 24.3 784.8 7.6" stroke="rgba(215,215,130,0.20)" stroke-width="0.6" fill="none"/><path d="M1324.2 41 Q1324.6 29.5 1325.5 18.0" stroke="rgba(55,65,20,0.14)" stroke-width="1.1" fill="none"/><path d="M943.9 41 Q946.6 22.7 953.0 4.5" stroke="rgba(215,215,130,0.20)" stroke-width="1.5" fill="none"/><path d="M367.7 41 Q369.6 23.1 374.1 5.2" stroke="rgba(55,65,20,0.10)" stroke-width="1.5" fill="none"/><path d="M650.9 41 Q653.5 26.3 659.4 11.6" stroke="rgba(215,215,130,0.13)" stroke-width="0.7" fill="none"/><path d="M1064.5 41 Q1065.6 19.5 1068.2 -2.0" stroke="rgba(215,215,130,0.13)" stroke-width="0.9" fill="none"/><path d="M485.4 41 Q483.1 28.3 477.9 15.6" stroke="rgba(55,65,20,0.09)" stroke-width="1.1" fill="none"/><path d="M342.3 41 Q341.5 23.1 339.8 5.3" stroke="rgba(215,215,130,0.20)" stroke-width="1.0" fill="none"/><path d="M723.1 41 Q723.9 26.5 725.9 12.1" stroke="rgba(215,215,130,0.14)" stroke-width="1.1" fill="none"/><path d="M1162.8 41 Q1164.3 19.6 1167.6 -1.9" stroke="rgba(55,65,20,0.20)" stroke-width="1.4" fill="none"/><path d="M1233.1 41 Q1231.4 31.6 1227.4 22.3" stroke="rgba(215,215,130,0.16)" stroke-width="1.6" fill="none"/><path d="M1212.4 41 Q1210.9 28.2 1207.6 15.4" stroke="rgba(215,215,130,0.14)" stroke-width="0.7" fill="none"/><path d="M1136.7 41 Q1136.2 17.7 1134.8 -5.6" stroke="rgba(215,215,130,0.24)" stroke-width="1.3" fill="none"/><path d="M24.3 41 Q27.1 31.4 33.6 21.9" stroke="rgba(215,215,130,0.22)" stroke-width="0.7" fill="none"/><path d="M690.8 41 Q688.9 27.5 684.5 14.0" stroke="rgba(55,65,20,0.15)" stroke-width="0.7" fill="none"/><path d="M145.0 41 Q145.4 24.5 146.4 8.0" stroke="rgba(215,215,130,0.20)" stroke-width="0.7" fill="none"/><path d="M252.1 41 Q254.6 32.8 260.6 24.7" stroke="rgba(215,215,130,0.25)" stroke-width="0.7" fill="none"/><path d="M84.6 41 Q83.6 28.9 81.2 16.8" stroke="rgba(150,175,60,0.22)" stroke-width="1.1" fill="none"/><path d="M703.9 41 Q705.1 15.7 707.9 -9.5" stroke="rgba(215,215,130,0.21)" stroke-width="1.4" fill="none"/><path d="M247.6 41 Q245.8 22.6 241.5 4.2" stroke="rgba(55,65,20,0.18)" stroke-width="0.8" fill="none"/><path d="M700.2 41 Q701.4 29.5 704.3 18.1" stroke="rgba(215,215,130,0.26)" stroke-width="1.5" fill="none"/><path d="M859.7 41 Q862.6 24.3 869.4 7.7" stroke="rgba(215,215,130,0.21)" stroke-width="1.4" fill="none"/><path d="M352.8 41 Q354.7 29.1 359.1 17.2" stroke="rgba(150,175,60,0.26)" stroke-width="1.0" fill="none"/><path d="M1224.7 41 Q1226.3 28.9 1230.0 16.9" stroke="rgba(150,175,60,0.25)" stroke-width="1.0" fill="none"/><path d="M987.1 41 Q984.2 23.7 977.3 6.4" stroke="rgba(215,215,130,0.16)" stroke-width="1.0" fill="none"/><path d="M872.5 41 Q873.5 32.0 875.8 23.1" stroke="rgba(55,65,20,0.11)" stroke-width="0.9" fill="none"/><path d="M901.2 41 Q904.2 22.3 911.2 3.6" stroke="rgba(55,65,20,0.15)" stroke-width="1.2" fill="none"/><path d="M957.9 41 Q958.6 15.9 960.2 -9.2" stroke="rgba(55,65,20,0.22)" stroke-width="1.3" fill="none"/><path d="M350.6 41 Q349.8 18.9 348.1 -3.2" stroke="rgba(215,215,130,0.11)" stroke-width="0.7" fill="none"/><path d="M342.7 41 Q345.5 24.4 352.1 7.8" stroke="rgba(150,175,60,0.23)" stroke-width="1.2" fill="none"/><path d="M1359.3 41 Q1359.9 16.8 1361.3 -7.3" stroke="rgba(55,65,20,0.19)" stroke-width="1.4" fill="none"/><path d="M61.6 41 Q59.6 23.8 55.0 6.5" stroke="rgba(150,175,60,0.17)" stroke-width="1.1" fill="none"/><path d="M834.9 41 Q835.0 22.9 835.4 4.7" stroke="rgba(215,215,130,0.27)" stroke-width="1.2" fill="none"/><path d="M499.4 41 Q498.1 25.3 495.0 9.6" stroke="rgba(215,215,130,0.22)" stroke-width="1.3" fill="none"/><path d="M404.4 41 Q402.3 16.2 397.5 -8.5" stroke="rgba(215,215,130,0.14)" stroke-width="1.4" fill="none"/><path d="M532.7 41 Q535.6 16.4 542.5 -8.2" stroke="rgba(150,175,60,0.26)" stroke-width="1.5" fill="none"/><path d="M100.4 41 Q103.2 23.9 109.9 6.7" stroke="rgba(150,175,60,0.21)" stroke-width="0.8" fill="none"/><path d="M714.9 41 Q717.8 23.7 724.5 6.4" stroke="rgba(150,175,60,0.26)" stroke-width="1.4" fill="none"/><path d="M824.5 41 Q822.8 23.5 818.6 5.9" stroke="rgba(215,215,130,0.21)" stroke-width="0.7" fill="none"/><path d="M721.4 41 Q721.1 27.2 720.5 13.4" stroke="rgba(215,215,130,0.18)" stroke-width="0.9" fill="none"/><path d="M795.3 41 Q798.3 24.8 805.3 8.6" stroke="rgba(215,215,130,0.24)" stroke-width="1.6" fill="none"/><path d="M1003.0 41 Q1004.7 31.1 1008.7 21.2" stroke="rgba(215,215,130,0.12)" stroke-width="1.2" fill="none"/><path d="M490.6 41 Q491.2 25.4 492.5 9.8" stroke="rgba(215,215,130,0.22)" stroke-width="1.2" fill="none"/><path d="M1029.1 41 Q1031.6 32.6 1037.4 24.3" stroke="rgba(215,215,130,0.14)" stroke-width="1.5" fill="none"/><path d="M54.0 41 Q54.7 22.9 56.4 4.9" stroke="rgba(215,215,130,0.15)" stroke-width="0.7" fill="none"/><path d="M739.9 41 Q740.2 27.3 740.9 13.7" stroke="rgba(215,215,130,0.12)" stroke-width="1.2" fill="none"/><path d="M509.8 41 Q511.2 21.5 514.7 2.0" stroke="rgba(55,65,20,0.11)" stroke-width="1.4" fill="none"/><path d="M101.6 41 Q103.2 26.4 106.9 11.8" stroke="rgba(215,215,130,0.25)" stroke-width="0.8" fill="none"/><path d="M579.7 41 Q580.6 22.0 582.7 2.9" stroke="rgba(215,215,130,0.25)" stroke-width="1.6" fill="none"/><path d="M444.5 41 Q444.0 31.6 443.0 22.2" stroke="rgba(55,65,20,0.18)" stroke-width="1.0" fill="none"/><path d="M132.5 41 Q132.9 17.0 133.8 -7.1" stroke="rgba(150,175,60,0.16)" stroke-width="1.1" fill="none"/><path d="M936.2 41 Q934.4 16.8 930.4 -7.3" stroke="rgba(215,215,130,0.24)" stroke-width="1.3" fill="none"/><path d="M111.6 41 Q110.3 27.6 107.3 14.3" stroke="rgba(215,215,130,0.23)" stroke-width="0.7" fill="none"/><path d="M488.8 41 Q490.0 17.6 492.9 -5.9" stroke="rgba(55,65,20,0.13)" stroke-width="1.2" fill="none"/><path d="M1254.7 41 Q1256.6 23.2 1260.8 5.3" stroke="rgba(150,175,60,0.29)" stroke-width="0.9" fill="none"/><path d="M433.9 41 Q432.4 31.2 428.8 21.3" stroke="rgba(215,215,130,0.27)" stroke-width="1.0" fill="none"/><path d="M499.4 41 Q497.5 22.3 493.3 3.6" stroke="rgba(215,215,130,0.17)" stroke-width="1.2" fill="none"/><path d="M1088.8 41 Q1086.9 25.3 1082.3 9.7" stroke="rgba(55,65,20,0.20)" stroke-width="1.4" fill="none"/><path d="M1203.3 41 Q1203.6 24.5 1204.2 8.0" stroke="rgba(215,215,130,0.10)" stroke-width="1.2" fill="none"/><path d="M1320.1 41 Q1320.4 16.6 1321.1 -7.8" stroke="rgba(55,65,20,0.19)" stroke-width="1.4" fill="none"/><path d="M114.8 41 Q112.3 31.2 106.5 21.5" stroke="rgba(215,215,130,0.23)" stroke-width="1.2" fill="none"/><path d="M196.5 41 Q194.9 19.8 190.9 -1.4" stroke="rgba(55,65,20,0.17)" stroke-width="1.4" fill="none"/><path d="M712.4 41 Q715.3 21.4 721.8 1.8" stroke="rgba(55,65,20,0.14)" stroke-width="1.3" fill="none"/><path d="M674.3 41 Q676.8 27.9 682.6 14.8" stroke="rgba(55,65,20,0.18)" stroke-width="1.0" fill="none"/><path d="M1128.6 41 Q1130.6 29.6 1135.3 18.2" stroke="rgba(55,65,20,0.20)" stroke-width="1.5" fill="none"/><path d="M1308.3 41 Q1310.2 27.9 1314.4 14.9" stroke="rgba(55,65,20,0.15)" stroke-width="1.0" fill="none"/><path d="M574.3 41 Q573.6 32.8 571.9 24.7" stroke="rgba(215,215,130,0.23)" stroke-width="0.8" fill="none"/><path d="M279.2 41 Q276.5 32.5 270.3 23.9" stroke="rgba(215,215,130,0.15)" stroke-width="0.9" fill="none"/><path d="M156.8 41 Q154.2 18.6 148.1 -3.7" stroke="rgba(55,65,20,0.19)" stroke-width="1.1" fill="none"/><path d="M797.8 41 Q795.9 17.4 791.5 -6.2" stroke="rgba(150,175,60,0.16)" stroke-width="0.8" fill="none"/><path d="M321.6 41 Q319.7 19.4 315.3 -2.2" stroke="rgba(55,65,20,0.16)" stroke-width="0.9" fill="none"/><path d="M235.7 41 Q237.6 25.1 242.0 9.2" stroke="rgba(55,65,20,0.12)" stroke-width="1.1" fill="none"/><path d="M355.8 41 Q356.1 21.5 356.7 2.0" stroke="rgba(150,175,60,0.29)" stroke-width="1.6" fill="none"/><path d="M659.3 41 Q661.1 32.1 665.3 23.2" stroke="rgba(215,215,130,0.11)" stroke-width="1.0" fill="none"/><path d="M720.7 41 Q721.6 32.8 723.8 24.7" stroke="rgba(55,65,20,0.12)" stroke-width="0.8" fill="none"/><path d="M14.9 41 Q16.1 29.4 19.1 17.9" stroke="rgba(55,65,20,0.13)" stroke-width="1.2" fill="none"/><path d="M214.9 41 Q217.1 20.0 222.2 -0.9" stroke="rgba(215,215,130,0.16)" stroke-width="1.1" fill="none"/><path d="M870.1 41 Q868.0 24.9 863.1 8.7" stroke="rgba(150,175,60,0.19)" stroke-width="1.4" fill="none"/><path d="M1.9 41 Q-0.6 29.9 -6.5 18.8" stroke="rgba(150,175,60,0.28)" stroke-width="0.9" fill="none"/><path d="M978.8 41 Q981.5 23.7 987.9 6.4" stroke="rgba(215,215,130,0.19)" stroke-width="1.2" fill="none"/><path d="M1171.1 41 Q1173.6 22.8 1179.5 4.6" stroke="rgba(215,215,130,0.24)" stroke-width="0.7" fill="none"/><path d="M1128.8 41 Q1126.7 24.7 1121.9 8.4" stroke="rgba(215,215,130,0.20)" stroke-width="1.4" fill="none"/><path d="M425.4 41 Q425.2 20.8 424.7 0.7" stroke="rgba(215,215,130,0.11)" stroke-width="1.3" fill="none"/><path d="M491.4 41 Q491.1 22.4 490.6 3.8" stroke="rgba(55,65,20,0.09)" stroke-width="1.6" fill="none"/><path d="M1133.4 41 Q1134.7 22.1 1137.6 3.2" stroke="rgba(55,65,20,0.08)" stroke-width="0.8" fill="none"/><path d="M770.6 41 Q772.4 32.9 776.6 24.7" stroke="rgba(55,65,20,0.08)" stroke-width="0.8" fill="none"/><path d="M841.5 41 Q840.3 24.9 837.5 8.9" stroke="rgba(215,215,130,0.17)" stroke-width="0.9" fill="none"/><path d="M535.7 41 Q537.1 19.0 540.4 -3.0" stroke="rgba(55,65,20,0.12)" stroke-width="0.9" fill="none"/><path d="M1290.9 41 Q1292.9 21.3 1297.5 1.6" stroke="rgba(55,65,20,0.18)" stroke-width="0.7" fill="none"/><path d="M192.4 41 Q190.4 27.9 186.0 14.8" stroke="rgba(215,215,130,0.22)" stroke-width="1.0" fill="none"/><path d="M1143.2 41 Q1141.2 19.5 1136.4 -2.1" stroke="rgba(55,65,20,0.09)" stroke-width="0.7" fill="none"/><path d="M555.7 41 Q555.8 23.0 556.0 4.9" stroke="rgba(215,215,130,0.27)" stroke-width="1.2" fill="none"/><path d="M1047.5 41 Q1047.0 21.3 1045.8 1.6" stroke="rgba(150,175,60,0.21)" stroke-width="0.6" fill="none"/><path d="M547.4 41 Q548.3 29.3 550.6 17.6" stroke="rgba(55,65,20,0.22)" stroke-width="1.2" fill="none"/><path d="M25.3 41 Q23.0 26.9 17.5 12.8" stroke="rgba(215,215,130,0.16)" stroke-width="1.0" fill="none"/><path d="M695.8 41 Q693.7 26.2 689.0 11.4" stroke="rgba(55,65,20,0.20)" stroke-width="1.4" fill="none"/><path d="M1233.5 41 Q1231.3 24.3 1226.3 7.5" stroke="rgba(55,65,20,0.13)" stroke-width="1.3" fill="none"/><path d="M1347.9 41 Q1346.1 30.1 1341.9 19.2" stroke="rgba(55,65,20,0.18)" stroke-width="1.5" fill="none"/><path d="M856.6 41 Q857.1 19.8 858.2 -1.4" stroke="rgba(215,215,130,0.11)" stroke-width="1.3" fill="none"/><path d="M449.7 41 Q447.4 23.6 442.1 6.2" stroke="rgba(150,175,60,0.20)" stroke-width="1.6" fill="none"/><path d="M185.2 41 Q185.6 25.3 186.4 9.6" stroke="rgba(150,175,60,0.23)" stroke-width="0.9" fill="none"/><path d="M1242.1 41 Q1239.9 26.0 1234.6 11.1" stroke="rgba(150,175,60,0.27)" stroke-width="1.4" fill="none"/><path d="M394.2 41 Q396.2 25.5 400.8 10.1" stroke="rgba(150,175,60,0.19)" stroke-width="0.8" fill="none"/><path d="M748.4 41 Q751.3 18.7 758.1 -3.7" stroke="rgba(215,215,130,0.11)" stroke-width="1.5" fill="none"/><path d="M899.3 41 Q898.6 28.4 897.0 15.8" stroke="rgba(215,215,130,0.22)" stroke-width="1.2" fill="none"/><path d="M1098.0 41 Q1095.9 23.7 1090.9 6.4" stroke="rgba(215,215,130,0.14)" stroke-width="1.0" fill="none"/><path d="M778.0 41 Q778.4 20.1 779.3 -0.8" stroke="rgba(215,215,130,0.19)" stroke-width="0.9" fill="none"/><path d="M876.6 41 Q879.3 18.0 885.8 -4.9" stroke="rgba(215,215,130,0.22)" stroke-width="1.2" fill="none"/><path d="M641.9 41 Q643.4 27.6 647.1 14.1" stroke="rgba(215,215,130,0.21)" stroke-width="1.4" fill="none"/><path d="M663.6 41 Q663.0 30.5 661.8 19.9" stroke="rgba(150,175,60,0.28)" stroke-width="1.0" fill="none"/><path d="M773.1 41 Q772.7 24.7 771.8 8.4" stroke="rgba(150,175,60,0.23)" stroke-width="1.5" fill="none"/><path d="M438.1 41 Q439.5 31.3 442.7 21.5" stroke="rgba(215,215,130,0.23)" stroke-width="1.2" fill="none"/><path d="M1027.1 41 Q1024.8 16.7 1019.6 -7.6" stroke="rgba(215,215,130,0.21)" stroke-width="1.0" fill="none"/><path d="M686.6 41 Q686.8 27.7 687.1 14.3" stroke="rgba(215,215,130,0.11)" stroke-width="0.8" fill="none"/><path d="M418.4 41 Q420.9 16.7 426.6 -7.6" stroke="rgba(215,215,130,0.14)" stroke-width="1.6" fill="none"/><path d="M909.4 41 Q907.7 29.6 903.8 18.2" stroke="rgba(150,175,60,0.21)" stroke-width="1.3" fill="none"/><path d="M774.3 41 Q772.0 29.4 766.7 17.7" stroke="rgba(150,175,60,0.16)" stroke-width="1.1" fill="none"/><path d="M1299.0 41 Q1298.0 20.7 1295.5 0.5" stroke="rgba(215,215,130,0.14)" stroke-width="0.7" fill="none"/><path d="M1222.7 41 Q1223.3 21.7 1224.5 2.5" stroke="rgba(150,175,60,0.21)" stroke-width="0.6" fill="none"/><path d="M42.5 41 Q45.1 24.2 51.2 7.4" stroke="rgba(150,175,60,0.20)" stroke-width="1.6" fill="none"/><path d="M645.6 41 Q648.0 31.6 653.6 22.3" stroke="rgba(215,215,130,0.15)" stroke-width="0.8" fill="none"/><path d="M1144.6 41 Q1146.9 18.5 1152.2 -4.0" stroke="rgba(215,215,130,0.19)" stroke-width="1.6" fill="none"/><path d="M275.9 41 Q273.2 30.9 266.9 20.8" stroke="rgba(55,65,20,0.11)" stroke-width="0.7" fill="none"/><path d="M991.4 41 Q992.7 30.7 995.7 20.4" stroke="rgba(215,215,130,0.26)" stroke-width="0.7" fill="none"/><path d="M950.7 41 Q949.0 16.9 945.1 -7.2" stroke="rgba(150,175,60,0.22)" stroke-width="0.9" fill="none"/><path d="M970.6 41 Q971.6 19.6 973.9 -1.8" stroke="rgba(215,215,130,0.13)" stroke-width="1.4" fill="none"/><path d="M508.9 41 Q507.2 25.8 503.4 10.6" stroke="rgba(55,65,20,0.20)" stroke-width="0.9" fill="none"/><path d="M1265.9 41 Q1263.5 26.7 1257.7 12.4" stroke="rgba(55,65,20,0.12)" stroke-width="1.6" fill="none"/><path d="M601.5 41 Q602.1 16.3 603.5 -8.4" stroke="rgba(55,65,20,0.15)" stroke-width="0.9" fill="none"/><path d="M342.7 41 Q344.3 20.5 347.8 -0.0" stroke="rgba(150,175,60,0.16)" stroke-width="0.8" fill="none"/><path d="M381.3 41 Q384.2 31.2 391.0 21.4" stroke="rgba(55,65,20,0.11)" stroke-width="0.6" fill="none"/><path d="M630.6 41 Q630.6 31.8 630.6 22.5" stroke="rgba(55,65,20,0.13)" stroke-width="0.8" fill="none"/><path d="M759.5 41 Q761.2 27.0 765.2 13.0" stroke="rgba(55,65,20,0.13)" stroke-width="1.1" fill="none"/><path d="M690.7 41 Q693.4 24.6 699.7 8.2" stroke="rgba(150,175,60,0.25)" stroke-width="0.8" fill="none"/><path d="M1065.0 41 Q1064.7 19.6 1063.8 -1.8" stroke="rgba(215,215,130,0.21)" stroke-width="1.4" fill="none"/><path d="M1074.4 41 Q1072.8 24.1 1068.9 7.1" stroke="rgba(55,65,20,0.11)" stroke-width="1.2" fill="none"/><path d="M681.6 41 Q682.0 28.0 683.0 15.0" stroke="rgba(215,215,130,0.21)" stroke-width="1.5" fill="none"/><path d="M245.9 41 Q245.5 24.2 244.6 7.4" stroke="rgba(215,215,130,0.10)" stroke-width="1.0" fill="none"/><path d="M359.2 41 Q359.6 31.4 360.6 21.8" stroke="rgba(55,65,20,0.09)" stroke-width="1.1" fill="none"/><path d="M1081.3 41 Q1078.6 20.9 1072.2 0.9" stroke="rgba(215,215,130,0.13)" stroke-width="0.9" fill="none"/><path d="M848.6 41 Q846.1 25.8 840.3 10.6" stroke="rgba(55,65,20,0.12)" stroke-width="1.4" fill="none"/><path d="M234.4 41 Q236.4 27.6 241.0 14.2" stroke="rgba(215,215,130,0.13)" stroke-width="1.4" fill="none"/><path d="M83.5 41 Q86.3 19.3 92.9 -2.4" stroke="rgba(215,215,130,0.17)" stroke-width="0.6" fill="none"/><path d="M668.7 41 Q668.4 18.0 667.8 -4.9" stroke="rgba(55,65,20,0.22)" stroke-width="1.3" fill="none"/><path d="M53.6 41 Q52.9 18.0 51.4 -5.0" stroke="rgba(215,215,130,0.26)" stroke-width="0.9" fill="none"/><path d="M579.8 41 Q581.4 32.9 585.0 24.9" stroke="rgba(215,215,130,0.11)" stroke-width="1.3" fill="none"/><path d="M314.0 41 Q313.8 19.7 313.2 -1.5" stroke="rgba(215,215,130,0.20)" stroke-width="1.5" fill="none"/><path d="M497.2 41 Q494.5 26.2 488.0 11.4" stroke="rgba(215,215,130,0.28)" stroke-width="1.0" fill="none"/><path d="M887.6 41 Q889.8 27.7 894.9 14.3" stroke="rgba(215,215,130,0.16)" stroke-width="1.2" fill="none"/><path d="M1210.8 41 Q1210.1 30.3 1208.4 19.5" stroke="rgba(55,65,20,0.14)" stroke-width="1.4" fill="none"/><path d="M294.2 41 Q292.2 25.1 287.5 9.2" stroke="rgba(215,215,130,0.13)" stroke-width="0.8" fill="none"/><path d="M292.9 41 Q295.9 23.3 302.8 5.6" stroke="rgba(55,65,20,0.12)" stroke-width="1.3" fill="none"/><path d="M1178.5 41 Q1179.6 16.8 1182.3 -7.5" stroke="rgba(215,215,130,0.17)" stroke-width="1.0" fill="none"/><path d="M375.0 41 Q374.4 20.1 372.9 -0.8" stroke="rgba(215,215,130,0.13)" stroke-width="1.5" fill="none"/><path d="M977.0 41 Q979.6 18.2 985.7 -4.6" stroke="rgba(215,215,130,0.16)" stroke-width="1.0" fill="none"/><path d="M1045.9 41 Q1044.9 15.9 1042.4 -9.3" stroke="rgba(55,65,20,0.21)" stroke-width="1.0" fill="none"/><path d="M113.6 41 Q113.7 29.0 114.0 17.0" stroke="rgba(150,175,60,0.20)" stroke-width="0.7" fill="none"/><path d="M538.2 41 Q538.7 18.1 540.1 -4.7" stroke="rgba(215,215,130,0.11)" stroke-width="0.6" fill="none"/><path d="M426.6 41 Q427.8 17.9 430.7 -5.2" stroke="rgba(215,215,130,0.20)" stroke-width="0.9" fill="none"/><path d="M991.0 41 Q989.7 19.1 986.6 -2.8" stroke="rgba(55,65,20,0.10)" stroke-width="1.3" fill="none"/><path d="M553.7 41 Q552.4 19.5 549.5 -2.1" stroke="rgba(215,215,130,0.26)" stroke-width="0.9" fill="none"/><path d="M294.7 41 Q295.1 26.5 296.0 12.1" stroke="rgba(215,215,130,0.10)" stroke-width="1.4" fill="none"/><path d="M1332.7 41 Q1331.0 31.6 1327.0 22.2" stroke="rgba(215,215,130,0.22)" stroke-width="1.3" fill="none"/><path d="M910.6 41 Q911.4 19.6 913.2 -1.8" stroke="rgba(150,175,60,0.28)" stroke-width="0.7" fill="none"/><path d="M584.2 41 Q583.2 22.2 580.8 3.4" stroke="rgba(215,215,130,0.11)" stroke-width="1.1" fill="none"/><path d="M382.2 41 Q380.2 23.8 375.6 6.6" stroke="rgba(215,215,130,0.17)" stroke-width="1.3" fill="none"/><path d="M327.6 41 Q325.5 22.9 320.6 4.8" stroke="rgba(215,215,130,0.16)" stroke-width="1.2" fill="none"/><path d="M958.1 41 Q957.4 15.9 955.9 -9.2" stroke="rgba(55,65,20,0.18)" stroke-width="1.0" fill="none"/><path d="M86.0 41 Q86.5 24.2 87.7 7.3" stroke="rgba(215,215,130,0.11)" stroke-width="1.1" fill="none"/><path d="M444.7 41 Q447.0 21.6 452.5 2.1" stroke="rgba(215,215,130,0.10)" stroke-width="1.2" fill="none"/><path d="M357.8 41 Q358.4 23.7 360.1 6.4" stroke="rgba(55,65,20,0.11)" stroke-width="1.6" fill="none"/><path d="M495.3 41 Q496.1 29.0 497.9 17.0" stroke="rgba(55,65,20,0.21)" stroke-width="1.2" fill="none"/><path d="M561.4 41 Q563.6 30.0 569.0 19.0" stroke="rgba(215,215,130,0.15)" stroke-width="1.0" fill="none"/><path d="M1242.5 41 Q1241.4 24.4 1238.7 7.7" stroke="rgba(215,215,130,0.12)" stroke-width="1.0" fill="none"/><path d="M1334.6 41 Q1335.6 19.5 1338.2 -2.0" stroke="rgba(215,215,130,0.13)" stroke-width="0.8" fill="none"/><path d="M1.3 41 Q1.2 19.7 1.1 -1.6" stroke="rgba(55,65,20,0.14)" stroke-width="1.3" fill="none"/><path d="M748.7 41 Q751.6 30.0 758.1 19.1" stroke="rgba(55,65,20,0.16)" stroke-width="0.9" fill="none"/><path d="M473.6 41 Q474.7 28.0 477.5 15.1" stroke="rgba(150,175,60,0.20)" stroke-width="1.3" fill="none"/><path d="M1316.7 41 Q1316.6 26.4 1316.5 11.8" stroke="rgba(150,175,60,0.17)" stroke-width="1.2" fill="none"/><path d="M504.8 41 Q503.2 24.8 499.5 8.7" stroke="rgba(215,215,130,0.23)" stroke-width="0.8" fill="none"/><path d="M443.9 41 Q441.3 17.7 435.2 -5.6" stroke="rgba(215,215,130,0.19)" stroke-width="0.7" fill="none"/><path d="M139.6 41 Q141.3 23.4 145.1 5.8" stroke="rgba(55,65,20,0.10)" stroke-width="1.1" fill="none"/><path d="M222.1 41 Q220.6 16.4 217.1 -8.1" stroke="rgba(150,175,60,0.28)" stroke-width="1.1" fill="none"/><path d="M1088.0 41 Q1089.3 19.9 1092.3 -1.2" stroke="rgba(215,215,130,0.23)" stroke-width="0.9" fill="none"/><path d="M456.0 41 Q456.4 30.0 457.4 19.0" stroke="rgba(55,65,20,0.20)" stroke-width="1.0" fill="none"/><path d="M965.7 41 Q963.4 29.5 958.2 18.0" stroke="rgba(55,65,20,0.20)" stroke-width="1.0" fill="none"/><path d="M914.3 41 Q914.9 15.7 916.1 -9.5" stroke="rgba(215,215,130,0.13)" stroke-width="1.5" fill="none"/><path d="M1325.6 41 Q1326.4 22.8 1328.2 4.7" stroke="rgba(215,215,130,0.22)" stroke-width="1.0" fill="none"/><path d="M1275.0 41 Q1272.7 28.0 1267.4 15.0" stroke="rgba(150,175,60,0.16)" stroke-width="0.6" fill="none"/><path d="M390.7 41 Q389.7 17.6 387.3 -5.8" stroke="rgba(55,65,20,0.22)" stroke-width="0.6" fill="none"/><path d="M741.1 41 Q742.9 20.9 747.2 0.8" stroke="rgba(55,65,20,0.13)" stroke-width="1.4" fill="none"/><path d="M387.6 41 Q390.5 28.9 397.2 16.8" stroke="rgba(215,215,130,0.21)" stroke-width="1.0" fill="none"/><path d="M948.1 41 Q946.1 18.1 941.6 -4.9" stroke="rgba(55,65,20,0.19)" stroke-width="0.7" fill="none"/><path d="M1275.2 41 Q1274.2 17.6 1271.7 -5.8" stroke="rgba(215,215,130,0.19)" stroke-width="0.6" fill="none"/><path d="M773.0 41 Q771.4 20.3 767.6 -0.4" stroke="rgba(215,215,130,0.21)" stroke-width="1.1" fill="none"/><path d="M499.7 41 Q502.1 16.6 507.6 -7.7" stroke="rgba(215,215,130,0.11)" stroke-width="0.9" fill="none"/><path d="M107.1 41 Q105.3 33.0 101.2 24.9" stroke="rgba(215,215,130,0.19)" stroke-width="1.5" fill="none"/><path d="M661.5 41 Q658.8 22.4 652.6 3.9" stroke="rgba(215,215,130,0.25)" stroke-width="1.2" fill="none"/><path d="M897.3 41 Q899.5 31.9 904.6 22.9" stroke="rgba(55,65,20,0.12)" stroke-width="1.6" fill="none"/><path d="M605.4 41 Q602.6 18.6 595.9 -3.8" stroke="rgba(150,175,60,0.26)" stroke-width="0.8" fill="none"/><path d="M162.2 41 Q161.1 28.7 158.4 16.4" stroke="rgba(215,215,130,0.16)" stroke-width="1.1" fill="none"/><path d="M14.3 41 Q14.5 15.7 14.9 -9.6" stroke="rgba(215,215,130,0.27)" stroke-width="1.4" fill="none"/><path d="M1082.3 41 Q1084.2 29.6 1088.8 18.1" stroke="rgba(55,65,20,0.14)" stroke-width="1.4" fill="none"/><path d="M1346.8 41 Q1348.0 22.5 1350.9 4.1" stroke="rgba(215,215,130,0.27)" stroke-width="0.9" fill="none"/><path d="M1242.6 41 Q1241.9 19.5 1240.3 -2.0" stroke="rgba(215,215,130,0.20)" stroke-width="1.0" fill="none"/><path d="M897.4 41 Q896.5 26.7 894.5 12.3" stroke="rgba(150,175,60,0.20)" stroke-width="0.9" fill="none"/><path d="M1236.4 41 Q1237.9 21.4 1241.3 1.7" stroke="rgba(215,215,130,0.12)" stroke-width="0.8" fill="none"/><path d="M1015.2 41 Q1012.8 18.6 1007.3 -3.8" stroke="rgba(55,65,20,0.18)" stroke-width="0.7" fill="none"/><path d="M478.6 41 Q478.0 24.3 476.6 7.6" stroke="rgba(215,215,130,0.10)" stroke-width="0.9" fill="none"/><path d="M733.7 41 Q732.7 30.9 730.2 20.8" stroke="rgba(150,175,60,0.18)" stroke-width="1.4" fill="none"/><path d="M148.0 41 Q146.3 32.3 142.4 23.7" stroke="rgba(150,175,60,0.21)" stroke-width="1.0" fill="none"/><path d="M964.5 41 Q967.1 27.4 973.4 13.7" stroke="rgba(215,215,130,0.15)" stroke-width="0.9" fill="none"/><path d="M250.6 41 Q251.4 18.1 253.3 -4.8" stroke="rgba(215,215,130,0.28)" stroke-width="1.0" fill="none"/><path d="M879.5 41 Q881.7 31.0 886.7 21.1" stroke="rgba(215,215,130,0.21)" stroke-width="1.2" fill="none"/><path d="M689.6 41 Q690.8 30.2 693.4 19.3" stroke="rgba(55,65,20,0.10)" stroke-width="1.1" fill="none"/><path d="M909.0 41 Q909.6 19.5 911.0 -1.9" stroke="rgba(215,215,130,0.17)" stroke-width="1.2" fill="none"/><path d="M703.8 41 Q704.4 23.3 705.7 5.6" stroke="rgba(215,215,130,0.21)" stroke-width="1.2" fill="none"/><path d="M1272.6 41 Q1274.0 32.9 1277.3 24.8" stroke="rgba(215,215,130,0.18)" stroke-width="0.9" fill="none"/><path d="M1006.4 41 Q1004.2 30.7 998.9 20.4" stroke="rgba(150,175,60,0.21)" stroke-width="1.6" fill="none"/><path d="M670.8 41 Q673.4 26.9 679.6 12.7" stroke="rgba(215,215,130,0.25)" stroke-width="1.4" fill="none"/><path d="M1089.6 41 Q1091.8 16.6 1097.0 -7.7" stroke="rgba(55,65,20,0.22)" stroke-width="1.3" fill="none"/><path d="M342.5 41 Q344.7 24.9 349.8 8.8" stroke="rgba(150,175,60,0.22)" stroke-width="0.8" fill="none"/><path d="M382.0 41 Q383.7 25.2 387.7 9.4" stroke="rgba(55,65,20,0.09)" stroke-width="1.1" fill="none"/><path d="M330.3 41 Q330.6 29.0 331.3 17.0" stroke="rgba(55,65,20,0.20)" stroke-width="1.5" fill="none"/><path d="M1088.4 41 Q1085.6 17.3 1079.1 -6.5" stroke="rgba(215,215,130,0.17)" stroke-width="0.9" fill="none"/><path d="M1181.4 41 Q1180.7 18.7 1179.2 -3.6" stroke="rgba(150,175,60,0.17)" stroke-width="1.4" fill="none"/><path d="M842.9 41 Q841.1 32.8 837.0 24.6" stroke="rgba(150,175,60,0.16)" stroke-width="1.2" fill="none"/><path d="M1197.4 41 Q1197.0 27.2 1196.0 13.4" stroke="rgba(55,65,20,0.11)" stroke-width="0.6" fill="none"/><path d="M463.9 41 Q464.5 20.4 465.9 -0.3" stroke="rgba(215,215,130,0.21)" stroke-width="1.3" fill="none"/><path d="M246.8 41 Q244.6 23.7 239.4 6.3" stroke="rgba(215,215,130,0.22)" stroke-width="0.7" fill="none"/><path d="M1285.4 41 Q1288.4 18.9 1295.3 -3.1" stroke="rgba(55,65,20,0.13)" stroke-width="1.3" fill="none"/><path d="M1005.7 41 Q1003.6 22.6 998.7 4.3" stroke="rgba(215,215,130,0.16)" stroke-width="1.2" fill="none"/><path d="M580.2 41 Q580.2 23.5 580.3 6.0" stroke="rgba(150,175,60,0.21)" stroke-width="1.5" fill="none"/><path d="M473.1 41 Q471.8 25.6 468.8 10.3" stroke="rgba(55,65,20,0.11)" stroke-width="1.5" fill="none"/><path d="M391.3 41 Q393.9 23.5 400.0 5.9" stroke="rgba(150,175,60,0.25)" stroke-width="1.0" fill="none"/><path d="M1015.3 41 Q1014.8 16.6 1013.7 -7.8" stroke="rgba(55,65,20,0.14)" stroke-width="0.9" fill="none"/><path d="M602.3 41 Q603.3 27.7 605.7 14.3" stroke="rgba(150,175,60,0.19)" stroke-width="0.8" fill="none"/><path d="M562.1 41 Q561.7 19.9 560.6 -1.2" stroke="rgba(215,215,130,0.26)" stroke-width="0.9" fill="none"/><path d="M1120.8 41 Q1118.4 25.1 1112.8 9.1" stroke="rgba(150,175,60,0.24)" stroke-width="1.5" fill="none"/><path d="M120.7 41 Q121.7 28.2 124.1 15.3" stroke="rgba(215,215,130,0.17)" stroke-width="0.9" fill="none"/><path d="M1226.5 41 Q1226.4 26.6 1225.9 12.2" stroke="rgba(150,175,60,0.15)" stroke-width="1.0" fill="none"/><path d="M635.0 41 Q637.8 26.1 644.4 11.2" stroke="rgba(215,215,130,0.22)" stroke-width="1.6" fill="none"/><path d="M1355.9 41 Q1357.1 26.9 1359.9 12.7" stroke="rgba(215,215,130,0.25)" stroke-width="1.6" fill="none"/><path d="M90.9 41 Q89.2 27.0 85.3 13.0" stroke="rgba(55,65,20,0.14)" stroke-width="1.6" fill="none"/><path d="M286.1 41 Q287.5 22.4 290.9 3.8" stroke="rgba(215,215,130,0.13)" stroke-width="0.7" fill="none"/><path d="M227.9 41 Q226.4 28.5 223.0 16.0" stroke="rgba(55,65,20,0.17)" stroke-width="1.4" fill="none"/><path d="M998.4 41 Q995.5 23.7 988.7 6.4" stroke="rgba(55,65,20,0.10)" stroke-width="1.5" fill="none"/><path d="M1290.2 41 Q1290.5 21.6 1291.0 2.3" stroke="rgba(150,175,60,0.15)" stroke-width="1.1" fill="none"/><path d="M151.9 41 Q149.7 24.4 144.4 7.8" stroke="rgba(55,65,20,0.12)" stroke-width="1.2" fill="none"/><path d="M177.2 41 Q178.9 20.6 182.7 0.3" stroke="rgba(215,215,130,0.19)" stroke-width="0.8" fill="none"/><path d="M565.4 41 Q565.8 23.4 566.6 5.8" stroke="rgba(215,215,130,0.14)" stroke-width="1.1" fill="none"/><path d="M1162.1 41 Q1164.9 18.2 1171.5 -4.6" stroke="rgba(215,215,130,0.25)" stroke-width="1.1" fill="none"/><path d="M555.2 41 Q554.7 32.4 553.5 23.7" stroke="rgba(55,65,20,0.20)" stroke-width="0.6" fill="none"/><path d="M210.0 41 Q208.0 28.0 203.1 14.9" stroke="rgba(150,175,60,0.26)" stroke-width="1.1" fill="none"/><path d="M39.0 41 Q39.8 32.4 41.8 23.8" stroke="rgba(215,215,130,0.15)" stroke-width="1.4" fill="none"/><path d="M62.9 41 Q60.6 20.1 55.2 -0.9" stroke="rgba(215,215,130,0.11)" stroke-width="1.5" fill="none"/><path d="M449.1 41 Q451.8 31.0 458.1 21.0" stroke="rgba(55,65,20,0.17)" stroke-width="1.2" fill="none"/><path d="M684.3 41 Q685.7 20.7 689.1 0.5" stroke="rgba(150,175,60,0.21)" stroke-width="0.9" fill="none"/><path d="M502.5 41 Q502.1 21.8 501.1 2.5" stroke="rgba(215,215,130,0.19)" stroke-width="1.1" fill="none"/><path d="M67.7 41 Q68.0 24.7 68.7 8.5" stroke="rgba(150,175,60,0.16)" stroke-width="1.0" fill="none"/><path d="M304.2 41 Q304.1 21.0 303.8 1.0" stroke="rgba(215,215,130,0.17)" stroke-width="0.8" fill="none"/><path d="M1023.8 41 Q1026.6 22.6 1033.1 4.2" stroke="rgba(55,65,20,0.08)" stroke-width="0.6" fill="none"/><path d="M810.5 41 Q809.7 26.0 807.9 10.9" stroke="rgba(150,175,60,0.20)" stroke-width="0.9" fill="none"/><path d="M832.2 41 Q832.3 24.2 832.5 7.4" stroke="rgba(55,65,20,0.12)" stroke-width="1.4" fill="none"/><path d="M72.5 41 Q74.2 20.2 78.4 -0.5" stroke="rgba(215,215,130,0.15)" stroke-width="1.0" fill="none"/><path d="M1174.8 41 Q1172.3 27.4 1166.5 13.8" stroke="rgba(215,215,130,0.15)" stroke-width="1.6" fill="none"/><path d="M1135.9 41 Q1137.6 29.8 1141.6 18.7" stroke="rgba(215,215,130,0.16)" stroke-width="1.2" fill="none"/><path d="M77.5 41 Q77.8 26.4 78.5 11.9" stroke="rgba(55,65,20,0.09)" stroke-width="1.5" fill="none"/><path d="M872.4 41 Q872.9 28.7 874.0 16.3" stroke="rgba(215,215,130,0.27)" stroke-width="0.6" fill="none"/><path d="M1006.6 41 Q1009.1 32.7 1015.0 24.4" stroke="rgba(215,215,130,0.22)" stroke-width="0.7" fill="none"/><path d="M1067.4 41 Q1067.1 22.1 1066.3 3.2" stroke="rgba(215,215,130,0.24)" stroke-width="1.0" fill="none"/><path d="M161.2 41 Q158.9 16.8 153.5 -7.5" stroke="rgba(215,215,130,0.23)" stroke-width="1.4" fill="none"/><path d="M910.1 41 Q909.0 17.6 906.3 -5.9" stroke="rgba(55,65,20,0.10)" stroke-width="1.6" fill="none"/><path d="M765.2 41 Q765.5 22.8 766.0 4.5" stroke="rgba(150,175,60,0.18)" stroke-width="1.4" fill="none"/><path d="M168.5 41 Q168.1 16.0 167.1 -8.9" stroke="rgba(150,175,60,0.22)" stroke-width="1.0" fill="none"/><path d="M921.2 41 Q920.5 27.6 918.9 14.1" stroke="rgba(150,175,60,0.22)" stroke-width="1.4" fill="none"/><path d="M143.7 41 Q141.9 25.8 137.8 10.5" stroke="rgba(55,65,20,0.10)" stroke-width="0.9" fill="none"/><path d="M223.8 41 Q223.2 24.6 221.6 8.2" stroke="rgba(215,215,130,0.21)" stroke-width="1.2" fill="none"/><path d="M1150.6 41 Q1153.5 23.9 1160.2 6.8" stroke="rgba(215,215,130,0.21)" stroke-width="0.9" fill="none"/><path d="M952.7 41 Q953.1 28.3 954.2 15.6" stroke="rgba(215,215,130,0.15)" stroke-width="0.9" fill="none"/><path d="M87.7 41 Q87.3 28.0 86.3 15.1" stroke="rgba(150,175,60,0.21)" stroke-width="1.2" fill="none"/><path d="M764.3 41 Q764.2 23.5 764.1 6.0" stroke="rgba(150,175,60,0.29)" stroke-width="0.8" fill="none"/><path d="M1028.8 41 Q1026.0 30.3 1019.5 19.7" stroke="rgba(215,215,130,0.16)" stroke-width="1.3" fill="none"/><path d="M776.0 41 Q778.7 18.2 785.0 -4.7" stroke="rgba(55,65,20,0.13)" stroke-width="1.4" fill="none"/><path d="M1100.7 41 Q1098.9 19.3 1094.6 -2.4" stroke="rgba(215,215,130,0.24)" stroke-width="1.1" fill="none"/><path d="M833.0 41 Q835.4 25.7 841.0 10.4" stroke="rgba(215,215,130,0.24)" stroke-width="1.5" fill="none"/><path d="M941.6 41 Q940.3 28.1 937.4 15.1" stroke="rgba(215,215,130,0.27)" stroke-width="1.5" fill="none"/><path d="M992.9 41 Q993.1 15.9 993.7 -9.3" stroke="rgba(215,215,130,0.14)" stroke-width="0.9" fill="none"/><path d="M400.3 41 Q398.9 24.0 395.7 7.0" stroke="rgba(215,215,130,0.12)" stroke-width="0.9" fill="none"/><path d="M379.2 41 Q381.3 18.3 386.4 -4.4" stroke="rgba(55,65,20,0.20)" stroke-width="1.5" fill="none"/><path d="M832.4 41 Q833.4 24.9 835.6 8.7" stroke="rgba(55,65,20,0.18)" stroke-width="1.5" fill="none"/><path d="M1058.9 41 Q1058.1 31.9 1056.2 22.8" stroke="rgba(215,215,130,0.11)" stroke-width="1.4" fill="none"/><path d="M318.9 41 Q321.5 28.3 327.7 15.5" stroke="rgba(55,65,20,0.13)" stroke-width="1.1" fill="none"/><path d="M773.2 41 Q770.8 32.1 765.4 23.2" stroke="rgba(215,215,130,0.14)" stroke-width="1.5" fill="none"/><path d="M897.7 41 Q898.1 17.3 899.0 -6.4" stroke="rgba(215,215,130,0.26)" stroke-width="0.7" fill="none"/><path d="M1350.7 41 Q1351.7 16.6 1354.1 -7.8" stroke="rgba(215,215,130,0.26)" stroke-width="0.7" fill="none"/><path d="M40.5 41 Q42.7 27.5 47.6 14.0" stroke="rgba(55,65,20,0.22)" stroke-width="1.4" fill="none"/><path d="M711.9 41 Q712.1 18.7 712.5 -3.5" stroke="rgba(215,215,130,0.19)" stroke-width="1.0" fill="none"/><path d="M681.6 41 Q681.5 22.8 681.3 4.6" stroke="rgba(215,215,130,0.23)" stroke-width="0.7" fill="none"/><path d="M665.2 41 Q663.0 25.3 657.9 9.7" stroke="rgba(55,65,20,0.22)" stroke-width="0.9" fill="none"/><path d="M458.5 41 Q461.2 32.6 467.5 24.2" stroke="rgba(55,65,20,0.21)" stroke-width="1.5" fill="none"/><path d="M1172.9 41 Q1173.4 24.1 1174.7 7.1" stroke="rgba(150,175,60,0.15)" stroke-width="1.3" fill="none"/><path d="M837.0 41 Q837.1 17.0 837.4 -7.0" stroke="rgba(55,65,20,0.21)" stroke-width="1.6" fill="none"/><path d="M43.5 41 Q40.6 32.3 34.0 23.5" stroke="rgba(215,215,130,0.26)" stroke-width="0.6" fill="none"/><path d="M1133.4 41 Q1135.0 25.7 1138.6 10.3" stroke="rgba(55,65,20,0.15)" stroke-width="1.4" fill="none"/><path d="M0.9 41 Q2.9 32.6 7.6 24.1" stroke="rgba(215,215,130,0.24)" stroke-width="1.0" fill="none"/><path d="M458.4 41 Q456.9 29.0 453.6 17.0" stroke="rgba(215,215,130,0.10)" stroke-width="1.2" fill="none"/><path d="M718.7 41 Q717.1 23.5 713.4 5.9" stroke="rgba(215,215,130,0.22)" stroke-width="1.5" fill="none"/><path d="M240.0 41 Q241.7 23.9 245.7 6.8" stroke="rgba(215,215,130,0.15)" stroke-width="0.9" fill="none"/><path d="M325.5 41 Q324.0 24.6 320.5 8.3" stroke="rgba(55,65,20,0.12)" stroke-width="1.5" fill="none"/><path d="M252.1 41 Q253.4 21.3 256.6 1.5" stroke="rgba(215,215,130,0.15)" stroke-width="1.3" fill="none"/><path d="M1079.6 41 Q1078.0 28.9 1074.5 16.7" stroke="rgba(55,65,20,0.09)" stroke-width="0.8" fill="none"/><path d="M566.0 41 Q568.5 21.7 574.2 2.5" stroke="rgba(150,175,60,0.21)" stroke-width="1.6" fill="none"/><path d="M528.9 41 Q527.9 29.2 525.6 17.4" stroke="rgba(215,215,130,0.24)" stroke-width="1.4" fill="none"/><path d="M518.4 41 Q518.2 28.5 517.9 16.0" stroke="rgba(215,215,130,0.21)" stroke-width="1.4" fill="none"/><path d="M18.9 41 Q21.4 16.6 27.2 -7.7" stroke="rgba(55,65,20,0.13)" stroke-width="0.7" fill="none"/><path d="M280.8 41 Q279.9 31.8 277.7 22.6" stroke="rgba(150,175,60,0.29)" stroke-width="1.5" fill="none"/><path d="M193.6 41 Q191.5 18.9 186.4 -3.3" stroke="rgba(55,65,20,0.21)" stroke-width="1.3" fill="none"/><path d="M1205.5 41 Q1204.8 23.4 1203.0 5.9" stroke="rgba(55,65,20,0.21)" stroke-width="0.7" fill="none"/><path d="M372.9 41 Q372.0 18.7 369.9 -3.5" stroke="rgba(150,175,60,0.16)" stroke-width="0.6" fill="none"/><path d="M419.3 41 Q419.5 24.7 420.1 8.4" stroke="rgba(215,215,130,0.12)" stroke-width="1.2" fill="none"/><path d="M1041.3 41 Q1039.6 16.9 1035.7 -7.1" stroke="rgba(55,65,20,0.21)" stroke-width="0.7" fill="none"/><path d="M422.7 41 Q420.6 24.3 415.9 7.6" stroke="rgba(55,65,20,0.21)" stroke-width="0.9" fill="none"/><path d="M776.5 41 Q776.2 32.5 775.7 24.0" stroke="rgba(215,215,130,0.24)" stroke-width="1.2" fill="none"/><path d="M1155.6 41 Q1158.5 32.0 1165.2 23.0" stroke="rgba(55,65,20,0.11)" stroke-width="0.6" fill="none"/><path d="M1041.9 41 Q1039.9 18.3 1035.3 -4.3" stroke="rgba(215,215,130,0.11)" stroke-width="1.3" fill="none"/><path d="M289.0 41 Q289.0 29.5 289.0 18.0" stroke="rgba(215,215,130,0.14)" stroke-width="1.3" fill="none"/><path d="M635.3 41 Q632.6 20.8 626.1 0.7" stroke="rgba(215,215,130,0.10)" stroke-width="0.9" fill="none"/><path d="M845.2 41 Q844.1 26.4 841.6 11.8" stroke="rgba(215,215,130,0.19)" stroke-width="1.0" fill="none"/><path d="M1207.4 41 Q1207.2 25.0 1206.6 8.9" stroke="rgba(55,65,20,0.14)" stroke-width="0.9" fill="none"/><path d="M1248.1 41 Q1250.4 30.4 1255.8 19.9" stroke="rgba(215,215,130,0.27)" stroke-width="0.8" fill="none"/><path d="M695.1 41 Q696.4 18.5 699.6 -4.0" stroke="rgba(150,175,60,0.19)" stroke-width="0.8" fill="none"/><path d="M797.2 41 Q794.8 20.5 789.2 -0.1" stroke="rgba(215,215,130,0.27)" stroke-width="1.3" fill="none"/><path d="M474.1 41 Q474.2 31.6 474.4 22.3" stroke="rgba(55,65,20,0.15)" stroke-width="1.0" fill="none"/><path d="M2.2 41 Q3.0 25.5 4.9 10.1" stroke="rgba(55,65,20,0.12)" stroke-width="1.1" fill="none"/><path d="M122.9 41 Q125.7 26.7 132.3 12.4" stroke="rgba(55,65,20,0.15)" stroke-width="0.9" fill="none"/><path d="M604.8 41 Q606.8 19.6 611.4 -1.8" stroke="rgba(215,215,130,0.24)" stroke-width="1.4" fill="none"/><path d="M347.8 41 Q348.2 23.0 349.0 4.9" stroke="rgba(150,175,60,0.23)" stroke-width="1.5" fill="none"/><path d="M669.2 41 Q669.2 30.2 669.2 19.4" stroke="rgba(55,65,20,0.12)" stroke-width="0.9" fill="none"/><path d="M268.4 41 Q271.3 29.6 278.0 18.1" stroke="rgba(215,215,130,0.25)" stroke-width="1.5" fill="none"/><path d="M935.9 41 Q937.7 29.7 941.9 18.3" stroke="rgba(55,65,20,0.18)" stroke-width="0.8" fill="none"/><path d="M1112.9 41 Q1110.1 31.6 1103.4 22.2" stroke="rgba(215,215,130,0.14)" stroke-width="1.1" fill="none"/><path d="M468.7 41 Q471.3 31.4 477.4 21.9" stroke="rgba(55,65,20,0.17)" stroke-width="1.2" fill="none"/><path d="M88.1 41 Q90.3 32.7 95.5 24.4" stroke="rgba(55,65,20,0.10)" stroke-width="0.9" fill="none"/><path d="M254.0 41 Q254.7 32.7 256.4 24.5" stroke="rgba(55,65,20,0.19)" stroke-width="0.7" fill="none"/><path d="M992.7 41 Q994.4 29.0 998.4 16.9" stroke="rgba(215,215,130,0.26)" stroke-width="1.5" fill="none"/><path d="M777.5 41 Q776.8 24.1 775.1 7.2" stroke="rgba(150,175,60,0.25)" stroke-width="1.0" fill="none"/><path d="M31.3 41 Q32.2 19.5 34.3 -2.0" stroke="rgba(215,215,130,0.24)" stroke-width="1.4" fill="none"/><path d="M948.6 41 Q946.7 20.3 942.4 -0.4" stroke="rgba(55,65,20,0.12)" stroke-width="1.2" fill="none"/><path d="M937.5 41 Q939.9 31.7 945.7 22.4" stroke="rgba(150,175,60,0.20)" stroke-width="0.9" fill="none"/><path d="M1300.5 41 Q1299.5 29.0 1297.2 17.1" stroke="rgba(55,65,20,0.21)" stroke-width="0.9" fill="none"/><path d="M713.8 41 Q714.0 30.6 714.5 20.2" stroke="rgba(55,65,20,0.08)" stroke-width="1.1" fill="none"/><path d="M1017.1 41 Q1015.6 25.7 1011.9 10.3" stroke="rgba(215,215,130,0.14)" stroke-width="0.9" fill="none"/><path d="M95.6 41 Q98.3 24.7 104.6 8.4" stroke="rgba(215,215,130,0.16)" stroke-width="1.2" fill="none"/><path d="M566.1 41 Q568.8 23.8 575.3 6.6" stroke="rgba(215,215,130,0.14)" stroke-width="0.7" fill="none"/><path d="M591.5 41 Q592.3 25.2 594.3 9.4" stroke="rgba(55,65,20,0.19)" stroke-width="1.5" fill="none"/><path d="M1232.9 41 Q1233.1 33.0 1233.4 24.9" stroke="rgba(215,215,130,0.20)" stroke-width="0.8" fill="none"/><path d="M1046.5 41 Q1045.1 25.1 1041.9 9.3" stroke="rgba(215,215,130,0.13)" stroke-width="1.3" fill="none"/><path d="M992.8 41 Q994.0 26.8 996.9 12.7" stroke="rgba(215,215,130,0.24)" stroke-width="1.1" fill="none"/><path d="M590.8 41 Q593.1 32.2 598.5 23.4" stroke="rgba(215,215,130,0.19)" stroke-width="0.7" fill="none"/><path d="M97.0 41 Q94.8 23.2 89.6 5.3" stroke="rgba(215,215,130,0.23)" stroke-width="1.0" fill="none"/><path d="M783.0 41 Q784.0 26.9 786.6 12.7" stroke="rgba(55,65,20,0.14)" stroke-width="1.2" fill="none"/><path d="M63.4 41 Q63.2 16.5 62.9 -8.1" stroke="rgba(55,65,20,0.10)" stroke-width="0.6" fill="none"/><path d="M99.5 41 Q102.3 17.3 108.6 -6.3" stroke="rgba(215,215,130,0.18)" stroke-width="1.5" fill="none"/><path d="M664.8 41 Q662.5 32.7 657.2 24.4" stroke="rgba(55,65,20,0.12)" stroke-width="0.9" fill="none"/><path d="M301.8 41 Q301.2 22.7 299.8 4.4" stroke="rgba(150,175,60,0.23)" stroke-width="1.5" fill="none"/><path d="M351.6 41 Q350.8 23.3 349.0 5.7" stroke="rgba(55,65,20,0.18)" stroke-width="1.0" fill="none"/><path d="M618.8 41 Q617.7 22.7 614.9 4.4" stroke="rgba(215,215,130,0.21)" stroke-width="1.4" fill="none"/><path d="M621.7 41 Q621.0 23.5 619.2 5.9" stroke="rgba(55,65,20,0.20)" stroke-width="1.5" fill="none"/><path d="M1333.7 41 Q1335.2 27.2 1338.6 13.5" stroke="rgba(55,65,20,0.14)" stroke-width="0.9" fill="none"/><path d="M989.0 41 Q988.6 27.2 987.7 13.4" stroke="rgba(150,175,60,0.25)" stroke-width="1.3" fill="none"/><path d="M308.7 41 Q307.8 32.6 305.5 24.3" stroke="rgba(55,65,20,0.16)" stroke-width="1.3" fill="none"/><path d="M22.9 41 Q23.5 20.0 25.1 -0.9" stroke="rgba(215,215,130,0.24)" stroke-width="0.8" fill="none"/><path d="M544.1 41 Q541.5 31.5 535.3 21.9" stroke="rgba(150,175,60,0.18)" stroke-width="1.2" fill="none"/><path d="M1121.9 41 Q1123.1 25.8 1126.1 10.7" stroke="rgba(150,175,60,0.21)" stroke-width="1.4" fill="none"/><path d="M1019.9 41 Q1020.3 27.8 1021.1 14.7" stroke="rgba(55,65,20,0.12)" stroke-width="1.1" fill="none"/><path d="M1348.3 41 Q1349.7 21.2 1352.9 1.4" stroke="rgba(215,215,130,0.24)" stroke-width="1.6" fill="none"/><path d="M374.9 41 Q372.9 24.2 368.2 7.3" stroke="rgba(55,65,20,0.15)" stroke-width="1.2" fill="none"/><path d="M1220.5 41 Q1220.0 29.6 1218.9 18.2" stroke="rgba(55,65,20,0.12)" stroke-width="0.7" fill="none"/><path d="M827.6 41 Q828.0 32.8 829.0 24.7" stroke="rgba(55,65,20,0.15)" stroke-width="1.6" fill="none"/><path d="M481.7 41 Q482.8 20.8 485.5 0.5" stroke="rgba(55,65,20,0.09)" stroke-width="1.3" fill="none"/><path d="M1131.6 41 Q1131.9 21.8 1132.4 2.5" stroke="rgba(215,215,130,0.15)" stroke-width="0.6" fill="none"/><path d="M511.6 41 Q513.8 20.9 519.1 0.9" stroke="rgba(55,65,20,0.10)" stroke-width="1.5" fill="none"/><path d="M341.1 41 Q342.9 17.0 347.0 -7.0" stroke="rgba(215,215,130,0.12)" stroke-width="1.3" fill="none"/><path d="M361.2 41 Q363.1 16.0 367.5 -9.0" stroke="rgba(55,65,20,0.18)" stroke-width="1.5" fill="none"/><path d="M288.6 41 Q290.9 21.4 296.2 1.8" stroke="rgba(55,65,20,0.18)" stroke-width="0.8" fill="none"/><path d="M647.4 41 Q647.8 29.7 648.8 18.4" stroke="rgba(215,215,130,0.18)" stroke-width="1.2" fill="none"/><path d="M1348.3 41 Q1346.2 26.3 1341.3 11.7" stroke="rgba(215,215,130,0.14)" stroke-width="1.6" fill="none"/><path d="M466.1 41 Q468.6 30.0 474.4 19.0" stroke="rgba(215,215,130,0.18)" stroke-width="1.3" fill="none"/><path d="M234.1 41 Q236.4 19.3 241.8 -2.4" stroke="rgba(215,215,130,0.23)" stroke-width="1.5" fill="none"/><path d="M309.4 41 Q306.7 28.1 300.3 15.1" stroke="rgba(215,215,130,0.14)" stroke-width="1.3" fill="none"/><path d="M85.6 41 Q83.1 25.7 77.5 10.4" stroke="rgba(150,175,60,0.23)" stroke-width="0.6" fill="none"/><path d="M482.3 41 Q479.7 30.6 473.6 20.2" stroke="rgba(150,175,60,0.24)" stroke-width="0.7" fill="none"/><path d="M28.6 41 Q29.6 20.3 31.9 -0.5" stroke="rgba(55,65,20,0.10)" stroke-width="1.3" fill="none"/><path d="M440.4 41 Q439.5 25.3 437.5 9.6" stroke="rgba(55,65,20,0.12)" stroke-width="1.0" fill="none"/><path d="M340.0 41 Q338.8 15.8 336.2 -9.4" stroke="rgba(215,215,130,0.15)" stroke-width="1.2" fill="none"/><path d="M367.0 41 Q367.1 23.7 367.2 6.4" stroke="rgba(215,215,130,0.25)" stroke-width="0.9" fill="none"/><path d="M1211.8 41 Q1212.9 27.0 1215.6 13.1" stroke="rgba(55,65,20,0.17)" stroke-width="1.1" fill="none"/><path d="M564.4 41 Q564.6 23.7 565.0 6.4" stroke="rgba(215,215,130,0.19)" stroke-width="1.1" fill="none"/><path d="M1077.2 41 Q1076.0 15.9 1073.2 -9.2" stroke="rgba(150,175,60,0.18)" stroke-width="0.6" fill="none"/><path d="M1087.8 41 Q1090.1 18.8 1095.2 -3.3" stroke="rgba(55,65,20,0.12)" stroke-width="1.4" fill="none"/><path d="M933.9 41 Q933.3 23.5 931.8 5.9" stroke="rgba(55,65,20,0.18)" stroke-width="1.2" fill="none"/><path d="M1202.7 41 Q1200.1 30.1 1194.2 19.2" stroke="rgba(150,175,60,0.29)" stroke-width="0.8" fill="none"/><path d="M1326.4 41 Q1328.6 20.9 1333.6 0.8" stroke="rgba(55,65,20,0.15)" stroke-width="1.1" fill="none"/><path d="M1352.8 41 Q1350.7 15.7 1345.8 -9.5" stroke="rgba(215,215,130,0.28)" stroke-width="1.0" fill="none"/><path d="M873.6 41 Q873.2 31.9 872.3 22.9" stroke="rgba(215,215,130,0.20)" stroke-width="1.4" fill="none"/><path d="M808.5 41 Q810.9 23.6 816.5 6.2" stroke="rgba(55,65,20,0.10)" stroke-width="1.3" fill="none"/><path d="M296.1 41 Q296.6 21.4 297.7 1.8" stroke="rgba(215,215,130,0.20)" stroke-width="1.2" fill="none"/><path d="M24.4 41 Q21.8 19.3 15.8 -2.5" stroke="rgba(215,215,130,0.22)" stroke-width="1.4" fill="none"/><path d="M456.1 41 Q456.9 17.3 458.8 -6.5" stroke="rgba(150,175,60,0.23)" stroke-width="0.9" fill="none"/><path d="M1112.5 41 Q1109.7 16.5 1103.2 -8.0" stroke="rgba(55,65,20,0.19)" stroke-width="1.4" fill="none"/><path d="M191.9 41 Q191.8 18.4 191.4 -4.3" stroke="rgba(215,215,130,0.11)" stroke-width="1.6" fill="none"/><path d="M438.9 41 Q439.7 18.7 441.6 -3.5" stroke="rgba(215,215,130,0.25)" stroke-width="1.2" fill="none"/><path d="M1277.7 41 Q1279.6 22.2 1284.1 3.4" stroke="rgba(215,215,130,0.20)" stroke-width="0.9" fill="none"/><path d="M976.7 41 Q975.1 32.4 971.5 23.9" stroke="rgba(215,215,130,0.19)" stroke-width="0.9" fill="none"/><path d="M1253.3 41 Q1251.7 18.8 1248.1 -3.5" stroke="rgba(55,65,20,0.09)" stroke-width="0.9" fill="none"/><path d="M1153.7 41 Q1154.5 27.2 1156.3 13.4" stroke="rgba(55,65,20,0.22)" stroke-width="1.0" fill="none"/><path d="M980.0 41 Q979.3 24.1 977.6 7.2" stroke="rgba(55,65,20,0.09)" stroke-width="1.1" fill="none"/><path d="M66.6 41 Q65.6 22.0 63.2 3.0" stroke="rgba(215,215,130,0.28)" stroke-width="0.7" fill="none"/><path d="M809.4 41 Q809.3 24.3 809.3 7.5" stroke="rgba(150,175,60,0.18)" stroke-width="1.4" fill="none"/><path d="M771.9 41 Q769.4 28.2 763.5 15.4" stroke="rgba(215,215,130,0.13)" stroke-width="1.5" fill="none"/><path d="M45.7 41 Q46.4 30.3 48.1 19.5" stroke="rgba(215,215,130,0.18)" stroke-width="1.3" fill="none"/><path d="M1039.6 41 Q1037.4 29.9 1032.5 18.9" stroke="rgba(55,65,20,0.09)" stroke-width="0.8" fill="none"/><path d="M51.3 41 Q48.8 22.2 43.0 3.3" stroke="rgba(215,215,130,0.26)" stroke-width="0.6" fill="none"/><path d="M1156.2 41 Q1153.8 16.2 1148.4 -8.7" stroke="rgba(55,65,20,0.21)" stroke-width="0.9" fill="none"/><path d="M260.9 41 Q258.9 26.7 254.3 12.4" stroke="rgba(215,215,130,0.14)" stroke-width="0.8" fill="none"/><path d="M731.5 41 Q731.6 25.4 731.7 9.9" stroke="rgba(215,215,130,0.13)" stroke-width="1.0" fill="none"/><path d="M647.9 41 Q646.9 18.9 644.6 -3.2" stroke="rgba(215,215,130,0.21)" stroke-width="0.6" fill="none"/><path d="M1212.6 41 Q1215.3 25.0 1221.4 9.0" stroke="rgba(55,65,20,0.13)" stroke-width="0.7" fill="none"/><path d="M523.8 41 Q526.2 27.9 531.9 14.7" stroke="rgba(55,65,20,0.13)" stroke-width="0.6" fill="none"/><path d="M388.6 41 Q389.8 29.2 392.6 17.5" stroke="rgba(215,215,130,0.24)" stroke-width="1.5" fill="none"/><path d="M253.7 41 Q251.4 28.9 245.9 16.8" stroke="rgba(215,215,130,0.25)" stroke-width="1.6" fill="none"/><path d="M1011.5 41 Q1014.3 26.1 1020.7 11.2" stroke="rgba(150,175,60,0.20)" stroke-width="1.5" fill="none"/><path d="M788.3 41 Q789.2 30.2 791.4 19.4" stroke="rgba(150,175,60,0.30)" stroke-width="1.6" fill="none"/><path d="M196.3 41 Q198.0 17.8 202.0 -5.4" stroke="rgba(215,215,130,0.20)" stroke-width="0.7" fill="none"/><path d="M858.9 41 Q857.0 26.1 852.7 11.2" stroke="rgba(215,215,130,0.16)" stroke-width="1.0" fill="none"/><path d="M1171.0 41 Q1172.1 21.9 1174.8 2.8" stroke="rgba(150,175,60,0.19)" stroke-width="0.8" fill="none"/><path d="M1159.9 41 Q1156.9 21.4 1149.9 1.9" stroke="rgba(215,215,130,0.20)" stroke-width="0.6" fill="none"/><path d="M2.7 41 Q3.5 32.8 5.4 24.7" stroke="rgba(215,215,130,0.15)" stroke-width="0.7" fill="none"/><path d="M978.1 41 Q980.2 28.1 985.2 15.3" stroke="rgba(215,215,130,0.19)" stroke-width="1.5" fill="none"/><path d="M575.0 41 Q576.5 21.0 579.8 0.9" stroke="rgba(215,215,130,0.17)" stroke-width="1.1" fill="none"/><path d="M936.4 41 Q934.6 32.4 930.5 23.8" stroke="rgba(215,215,130,0.24)" stroke-width="1.2" fill="none"/><path d="M221.4 41 Q222.8 18.7 226.0 -3.6" stroke="rgba(215,215,130,0.17)" stroke-width="1.2" fill="none"/><path d="M921.4 41 Q918.6 17.2 912.1 -6.6" stroke="rgba(150,175,60,0.16)" stroke-width="1.1" fill="none"/><path d="M1126.2 41 Q1125.5 30.5 1123.7 20.0" stroke="rgba(55,65,20,0.16)" stroke-width="0.7" fill="none"/><path d="M876.4 41 Q874.4 16.0 869.7 -9.0" stroke="rgba(215,215,130,0.14)" stroke-width="0.7" fill="none"/><path d="M726.1 41 Q725.2 29.9 723.0 18.8" stroke="rgba(215,215,130,0.21)" stroke-width="0.7" fill="none"/><path d="M916.9 41 Q917.4 25.2 918.5 9.4" stroke="rgba(55,65,20,0.20)" stroke-width="1.5" fill="none"/><path d="M925.1 41 Q925.9 29.1 927.7 17.1" stroke="rgba(150,175,60,0.19)" stroke-width="1.1" fill="none"/><path d="M14.7 41 Q14.8 26.0 14.9 11.1" stroke="rgba(55,65,20,0.12)" stroke-width="1.1" fill="none"/><path d="M80.3 41 Q83.2 27.4 90.1 13.9" stroke="rgba(215,215,130,0.21)" stroke-width="1.4" fill="none"/><path d="M396.2 41 Q395.6 29.6 394.1 18.1" stroke="rgba(55,65,20,0.15)" stroke-width="1.5" fill="none"/><path d="M661.1 41 Q664.1 21.8 671.1 2.5" stroke="rgba(215,215,130,0.19)" stroke-width="0.6" fill="none"/><path d="M545.9 41 Q543.8 18.1 538.9 -4.7" stroke="rgba(215,215,130,0.22)" stroke-width="1.0" fill="none"/><path d="M822.4 41 Q821.6 20.7 819.8 0.3" stroke="rgba(55,65,20,0.14)" stroke-width="1.5" fill="none"/><path d="M291.3 41 Q289.1 24.0 283.9 6.9" stroke="rgba(215,215,130,0.26)" stroke-width="0.7" fill="none"/><path d="M1216.3 41 Q1214.6 27.3 1210.6 13.6" stroke="rgba(55,65,20,0.09)" stroke-width="1.0" fill="none"/><path d="M826.5 41 Q824.4 21.4 819.4 1.7" stroke="rgba(215,215,130,0.27)" stroke-width="1.4" fill="none"/><path d="M149.1 41 Q151.5 23.7 157.1 6.5" stroke="rgba(215,215,130,0.22)" stroke-width="1.4" fill="none"/><path d="M282.1 41 Q280.9 23.7 278.1 6.5" stroke="rgba(215,215,130,0.21)" stroke-width="1.5" fill="none"/><path d="M284.8 41 Q287.5 31.7 293.7 22.3" stroke="rgba(55,65,20,0.09)" stroke-width="1.2" fill="none"/><path d="M437.6 41 Q434.9 29.4 428.4 17.8" stroke="rgba(55,65,20,0.21)" stroke-width="1.1" fill="none"/><path d="M191.1 41 Q189.6 30.6 186.1 20.3" stroke="rgba(55,65,20,0.21)" stroke-width="1.2" fill="none"/><path d="M433.6 41 Q432.6 28.8 430.4 16.6" stroke="rgba(215,215,130,0.23)" stroke-width="1.0" fill="none"/><path d="M951.4 41 Q949.0 17.6 943.3 -5.9" stroke="rgba(55,65,20,0.14)" stroke-width="0.8" fill="none"/><path d="M1128.8 41 Q1128.0 21.9 1126.2 2.8" stroke="rgba(55,65,20,0.17)" stroke-width="0.8" fill="none"/><path d="M1331.3 41 Q1331.9 27.8 1333.3 14.6" stroke="rgba(55,65,20,0.10)" stroke-width="1.2" fill="none"/><path d="M1051.7 41 Q1051.1 32.5 1049.8 23.9" stroke="rgba(55,65,20,0.20)" stroke-width="1.2" fill="none"/><path d="M511.4 41 Q510.5 26.8 508.4 12.7" stroke="rgba(215,215,130,0.17)" stroke-width="1.0" fill="none"/><path d="M1156.7 41 Q1156.0 30.3 1154.4 19.5" stroke="rgba(55,65,20,0.17)" stroke-width="1.2" fill="none"/><path d="M343.2 41 Q345.7 29.5 351.6 17.9" stroke="rgba(215,215,130,0.12)" stroke-width="0.9" fill="none"/><path d="M516.8 41 Q519.1 26.7 524.6 12.3" stroke="rgba(215,215,130,0.13)" stroke-width="0.7" fill="none"/><path d="M347.8 41 Q346.9 30.9 344.9 20.7" stroke="rgba(55,65,20,0.11)" stroke-width="1.1" fill="none"/><path d="M275.5 41 Q276.8 20.4 280.0 -0.3" stroke="rgba(215,215,130,0.18)" stroke-width="0.6" fill="none"/><path d="M872.6 41 Q870.3 18.9 865.0 -3.3" stroke="rgba(150,175,60,0.20)" stroke-width="0.7" fill="none"/><path d="M1082.1 41 Q1082.7 23.4 1084.1 5.9" stroke="rgba(55,65,20,0.08)" stroke-width="0.9" fill="none"/><path d="M47.6 41 Q46.7 32.5 44.8 24.0" stroke="rgba(215,215,130,0.16)" stroke-width="1.5" fill="none"/><path d="M1185.8 41 Q1183.3 29.6 1177.6 18.3" stroke="rgba(55,65,20,0.10)" stroke-width="1.2" fill="none"/><path d="M132.9 41 Q135.8 18.2 142.7 -4.5" stroke="rgba(215,215,130,0.17)" stroke-width="1.2" fill="none"/><path d="M1225.5 41 Q1225.3 26.8 1225.0 12.6" stroke="rgba(150,175,60,0.26)" stroke-width="1.4" fill="none"/><path d="M914.4 41 Q914.4 22.7 914.7 4.5" stroke="rgba(215,215,130,0.20)" stroke-width="1.3" fill="none"/><path d="M941.2 41 Q938.8 29.9 933.1 18.9" stroke="rgba(55,65,20,0.19)" stroke-width="0.7" fill="none"/><path d="M64.4 41 Q64.1 20.9 63.2 0.8" stroke="rgba(215,215,130,0.27)" stroke-width="1.1" fill="none"/><path d="M771.0 41 Q773.1 21.3 777.9 1.6" stroke="rgba(215,215,130,0.24)" stroke-width="1.4" fill="none"/><path d="M1.6 41 Q-1.0 31.0 -7.1 20.9" stroke="rgba(55,65,20,0.09)" stroke-width="0.9" fill="none"/><path d="M1050.1 41 Q1050.2 22.7 1050.5 4.5" stroke="rgba(55,65,20,0.17)" stroke-width="0.8" fill="none"/><path d="M631.6 41 Q629.4 17.4 624.4 -6.3" stroke="rgba(215,215,130,0.22)" stroke-width="0.8" fill="none"/><path d="M727.9 41 Q730.0 32.8 734.7 24.6" stroke="rgba(55,65,20,0.08)" stroke-width="1.0" fill="none"/><path d="M217.0 41 Q218.5 18.6 222.1 -3.8" stroke="rgba(150,175,60,0.30)" stroke-width="1.4" fill="none"/><path d="M1280.2 41 Q1278.6 18.4 1274.9 -4.2" stroke="rgba(215,215,130,0.12)" stroke-width="1.5" fill="none"/><path d="M1243.0 41 Q1241.4 21.7 1237.8 2.3" stroke="rgba(55,65,20,0.10)" stroke-width="1.2" fill="none"/><path d="M983.5 41 Q983.3 23.5 982.9 6.0" stroke="rgba(55,65,20,0.14)" stroke-width="1.0" fill="none"/><path d="M621.7 41 Q622.1 21.2 623.0 1.4" stroke="rgba(55,65,20,0.18)" stroke-width="0.7" fill="none"/><path d="M61.8 41 Q59.2 16.1 53.4 -8.9" stroke="rgba(215,215,130,0.16)" stroke-width="1.0" fill="none"/><path d="M1287.2 41 Q1286.4 21.0 1284.5 1.1" stroke="rgba(150,175,60,0.15)" stroke-width="0.9" fill="none"/><path d="M187.3 41 Q185.3 22.2 180.8 3.4" stroke="rgba(55,65,20,0.20)" stroke-width="0.7" fill="none"/><path d="M20.7 41 Q22.5 28.2 26.5 15.3" stroke="rgba(55,65,20,0.11)" stroke-width="0.7" fill="none"/><path d="M258.1 41 Q256.9 28.4 254.1 15.8" stroke="rgba(215,215,130,0.24)" stroke-width="1.1" fill="none"/><path d="M485.1 41 Q486.9 20.1 491.3 -0.8" stroke="rgba(55,65,20,0.19)" stroke-width="1.5" fill="none"/><path d="M821.0 41 Q823.9 18.5 830.8 -4.0" stroke="rgba(150,175,60,0.29)" stroke-width="0.8" fill="none"/><path d="M1099.2 41 Q1101.2 23.2 1105.9 5.5" stroke="rgba(215,215,130,0.15)" stroke-width="1.3" fill="none"/><path d="M278.4 41 Q275.7 24.4 269.5 7.8" stroke="rgba(150,175,60,0.28)" stroke-width="0.9" fill="none"/><path d="M399.5 41 Q401.4 25.9 405.9 10.8" stroke="rgba(215,215,130,0.27)" stroke-width="0.7" fill="none"/><path d="M335.3 41 Q332.7 19.5 326.6 -2.0" stroke="rgba(55,65,20,0.13)" stroke-width="0.7" fill="none"/><path d="M563.3 41 Q562.0 25.4 559.1 9.8" stroke="rgba(55,65,20,0.14)" stroke-width="0.6" fill="none"/><path d="M921.2 41 Q919.8 22.1 916.6 3.2" stroke="rgba(215,215,130,0.19)" stroke-width="0.7" fill="none"/><path d="M405.1 41 Q405.0 16.0 404.7 -9.0" stroke="rgba(215,215,130,0.12)" stroke-width="0.6" fill="none"/><path d="M1200.6 41 Q1197.8 24.7 1191.1 8.4" stroke="rgba(215,215,130,0.18)" stroke-width="0.7" fill="none"/><path d="M1072.8 41 Q1074.3 21.5 1077.8 2.0" stroke="rgba(55,65,20,0.15)" stroke-width="1.1" fill="none"/><path d="M1082.3 41 Q1083.4 28.2 1085.8 15.4" stroke="rgba(150,175,60,0.28)" stroke-width="1.1" fill="none"/><path d="M728.6 41 Q730.8 29.8 735.8 18.7" stroke="rgba(55,65,20,0.15)" stroke-width="0.7" fill="none"/><path d="M1027.3 41 Q1024.6 31.4 1018.3 21.8" stroke="rgba(55,65,20,0.16)" stroke-width="1.1" fill="none"/><path d="M512.8 41 Q510.6 25.4 505.6 9.7" stroke="rgba(150,175,60,0.17)" stroke-width="1.4" fill="none"/><path d="M668.1 41 Q665.1 31.0 658.2 20.9" stroke="rgba(55,65,20,0.12)" stroke-width="0.8" fill="none"/><path d="M1001.8 41 Q999.3 20.3 993.4 -0.4" stroke="rgba(150,175,60,0.27)" stroke-width="1.3" fill="none"/><path d="M999.2 41 Q996.4 24.7 989.8 8.5" stroke="rgba(215,215,130,0.27)" stroke-width="1.1" fill="none"/><path d="M461.9 41 Q459.7 31.9 454.4 22.7" stroke="rgba(215,215,130,0.26)" stroke-width="1.0" fill="none"/><path d="M373.5 41 Q372.9 21.3 371.7 1.7" stroke="rgba(55,65,20,0.10)" stroke-width="1.1" fill="none"/><path d="M594.5 41 Q596.9 31.8 602.6 22.6" stroke="rgba(55,65,20,0.21)" stroke-width="1.4" fill="none"/><path d="M311.9 41 Q312.6 26.8 314.1 12.5" stroke="rgba(215,215,130,0.18)" stroke-width="0.9" fill="none"/><path d="M1354.8 41 Q1353.0 17.1 1349.0 -6.8" stroke="rgba(215,215,130,0.10)" stroke-width="1.3" fill="none"/><path d="M1148.5 41 Q1150.2 19.7 1154.2 -1.5" stroke="rgba(215,215,130,0.14)" stroke-width="1.5" fill="none"/><path d="M359.7 41 Q361.0 32.5 364.0 24.0" stroke="rgba(215,215,130,0.27)" stroke-width="1.1" fill="none"/><path d="M1020.1 41 Q1020.3 20.2 1020.6 -0.5" stroke="rgba(55,65,20,0.15)" stroke-width="1.3" fill="none"/><path d="M443.0 41 Q441.3 32.5 437.2 24.0" stroke="rgba(55,65,20,0.10)" stroke-width="0.8" fill="none"/><path d="M1311.8 41 Q1313.9 30.2 1318.7 19.4" stroke="rgba(150,175,60,0.29)" stroke-width="1.4" fill="none"/><path d="M774.1 41 Q776.1 30.1 780.8 19.3" stroke="rgba(215,215,130,0.23)" stroke-width="0.6" fill="none"/><path d="M83.7 41 Q86.7 31.1 93.6 21.3" stroke="rgba(55,65,20,0.15)" stroke-width="1.0" fill="none"/><path d="M922.7 41 Q923.6 21.9 925.5 2.9" stroke="rgba(55,65,20,0.18)" stroke-width="0.7" fill="none"/><path d="M1229.5 41 Q1227.7 23.6 1223.6 6.2" stroke="rgba(55,65,20,0.19)" stroke-width="1.1" fill="none"/><path d="M929.7 41 Q929.1 15.6 927.6 -9.9" stroke="rgba(55,65,20,0.10)" stroke-width="0.8" fill="none"/><path d="M309.7 41 Q312.2 27.7 318.0 14.3" stroke="rgba(215,215,130,0.17)" stroke-width="1.3" fill="none"/><path d="M28.3 41 Q29.0 28.3 30.6 15.6" stroke="rgba(150,175,60,0.24)" stroke-width="1.0" fill="none"/><path d="M463.4 41 Q464.5 16.4 467.0 -8.1" stroke="rgba(215,215,130,0.22)" stroke-width="1.5" fill="none"/><path d="M912.3 41 Q914.2 32.3 918.6 23.6" stroke="rgba(55,65,20,0.19)" stroke-width="1.6" fill="none"/><path d="M627.8 41 Q630.0 26.7 635.1 12.3" stroke="rgba(215,215,130,0.21)" stroke-width="1.2" fill="none"/><path d="M496.3 41 Q499.2 26.4 506.0 11.9" stroke="rgba(215,215,130,0.25)" stroke-width="1.2" fill="none"/><path d="M1164.8 41 Q1167.2 23.6 1172.8 6.2" stroke="rgba(55,65,20,0.22)" stroke-width="1.0" fill="none"/><path d="M15.3 41 Q14.7 32.9 13.2 24.7" stroke="rgba(215,215,130,0.16)" stroke-width="0.9" fill="none"/><path d="M943.5 41 Q941.3 22.4 936.0 3.8" stroke="rgba(215,215,130,0.15)" stroke-width="1.2" fill="none"/><path d="M577.8 41 Q575.9 32.6 571.7 24.2" stroke="rgba(150,175,60,0.20)" stroke-width="1.1" fill="none"/><path d="M309.1 41 Q307.8 31.2 304.9 21.3" stroke="rgba(215,215,130,0.15)" stroke-width="1.1" fill="none"/><path d="M715.8 41 Q714.9 16.6 712.8 -7.7" stroke="rgba(215,215,130,0.20)" stroke-width="0.9" fill="none"/><path d="M1113.9 41 Q1116.1 25.9 1121.2 10.8" stroke="rgba(55,65,20,0.18)" stroke-width="1.3" fill="none"/><path d="M75.5 41 Q78.4 30.2 85.3 19.4" stroke="rgba(215,215,130,0.23)" stroke-width="1.4" fill="none"/><path d="M215.6 41 Q213.4 26.1 208.3 11.2" stroke="rgba(55,65,20,0.17)" stroke-width="1.6" fill="none"/><path d="M697.2 41 Q694.6 22.2 688.6 3.5" stroke="rgba(215,215,130,0.28)" stroke-width="1.3" fill="none"/><path d="M354.7 41 Q353.7 26.1 351.1 11.2" stroke="rgba(215,215,130,0.15)" stroke-width="1.3" fill="none"/><path d="M1236.7 41 Q1235.2 31.6 1231.7 22.3" stroke="rgba(150,175,60,0.28)" stroke-width="1.4" fill="none"/><path d="M122.6 41 Q125.3 17.2 131.6 -6.5" stroke="rgba(55,65,20,0.09)" stroke-width="0.7" fill="none"/><path d="M979.7 41 Q977.1 29.4 970.9 17.8" stroke="rgba(55,65,20,0.08)" stroke-width="1.5" fill="none"/><path d="M1118.1 41 Q1119.3 16.0 1122.1 -9.0" stroke="rgba(55,65,20,0.14)" stroke-width="0.6" fill="none"/><path d="M718.6 41 Q720.0 17.5 723.0 -5.9" stroke="rgba(150,175,60,0.25)" stroke-width="1.3" fill="none"/><path d="M449.8 41 Q449.9 22.7 450.3 4.5" stroke="rgba(55,65,20,0.16)" stroke-width="0.9" fill="none"/><path d="M392.3 41 Q391.5 29.0 389.6 17.0" stroke="rgba(150,175,60,0.20)" stroke-width="0.8" fill="none"/><path d="M1.9 41 Q2.4 32.7 3.7 24.4" stroke="rgba(150,175,60,0.26)" stroke-width="0.7" fill="none"/><path d="M223.1 41 Q225.8 26.4 232.2 11.8" stroke="rgba(215,215,130,0.21)" stroke-width="0.9" fill="none"/><path d="M318.7 41 Q318.6 16.0 318.5 -9.0" stroke="rgba(215,215,130,0.13)" stroke-width="1.0" fill="none"/><path d="M502.7 41 Q502.9 30.0 503.4 18.9" stroke="rgba(150,175,60,0.20)" stroke-width="0.7" fill="none"/><path d="M40.4 41 Q41.6 16.4 44.5 -8.2" stroke="rgba(55,65,20,0.20)" stroke-width="0.8" fill="none"/><path d="M938.6 41 Q936.6 19.8 931.8 -1.4" stroke="rgba(150,175,60,0.26)" stroke-width="1.6" fill="none"/><path d="M1250.8 41 Q1250.0 16.4 1248.2 -8.2" stroke="rgba(150,175,60,0.23)" stroke-width="1.5" fill="none"/><path d="M91.5 41 Q90.6 30.9 88.6 20.8" stroke="rgba(215,215,130,0.11)" stroke-width="0.7" fill="none"/><path d="M486.5 41 Q487.4 26.3 489.7 11.6" stroke="rgba(215,215,130,0.18)" stroke-width="0.7" fill="none"/><path d="M730.0 41 Q728.6 29.6 725.2 18.3" stroke="rgba(215,215,130,0.18)" stroke-width="1.4" fill="none"/><path d="M333.4 41 Q333.7 15.6 334.5 -9.9" stroke="rgba(215,215,130,0.24)" stroke-width="1.1" fill="none"/><path d="M976.4 41 Q974.6 19.4 970.4 -2.2" stroke="rgba(150,175,60,0.25)" stroke-width="1.1" fill="none"/><path d="M384.4 41 Q383.9 27.6 382.7 14.3" stroke="rgba(55,65,20,0.09)" stroke-width="0.6" fill="none"/><path d="M164.8 41 Q164.1 30.9 162.6 20.8" stroke="rgba(150,175,60,0.28)" stroke-width="1.6" fill="none"/><path d="M232.3 41 Q229.3 19.2 222.4 -2.7" stroke="rgba(55,65,20,0.21)" stroke-width="0.7" fill="none"/><path d="M114.1 41 Q111.8 23.8 106.4 6.7" stroke="rgba(150,175,60,0.24)" stroke-width="1.2" fill="none"/><path d="M187.0 41 Q188.8 26.8 193.0 12.5" stroke="rgba(215,215,130,0.21)" stroke-width="1.4" fill="none"/><path d="M187.4 41 Q184.6 24.1 178.0 7.2" stroke="rgba(215,215,130,0.13)" stroke-width="1.5" fill="none"/><path d="M931.2 41 Q933.2 31.5 937.9 21.9" stroke="rgba(150,175,60,0.22)" stroke-width="1.4" fill="none"/><path d="M1100.9 41 Q1102.5 16.5 1106.2 -8.0" stroke="rgba(215,215,130,0.16)" stroke-width="1.1" fill="none"/><path d="M1347.4 41 Q1350.2 30.7 1356.8 20.3" stroke="rgba(215,215,130,0.18)" stroke-width="1.4" fill="none"/><path d="M1205.5 41 Q1202.9 26.3 1196.8 11.6" stroke="rgba(150,175,60,0.19)" stroke-width="1.3" fill="none"/><path d="M1301.1 41 Q1298.5 25.5 1292.4 9.9" stroke="rgba(55,65,20,0.10)" stroke-width="1.1" fill="none"/><path d="M109.4 41 Q111.6 28.4 116.5 15.9" stroke="rgba(215,215,130,0.25)" stroke-width="1.1" fill="none"/><path d="M602.5 41 Q602.0 25.5 600.7 9.9" stroke="rgba(215,215,130,0.24)" stroke-width="0.7" fill="none"/><path d="M626.4 41 Q625.9 16.9 624.9 -7.2" stroke="rgba(215,215,130,0.12)" stroke-width="0.7" fill="none"/><path d="M1130.1 41 Q1128.1 25.2 1123.3 9.4" stroke="rgba(55,65,20,0.20)" stroke-width="0.9" fill="none"/><path d="M1146.9 41 Q1144.1 26.6 1137.8 12.1" stroke="rgba(55,65,20,0.17)" stroke-width="0.8" fill="none"/><path d="M589.4 41 Q588.0 25.8 584.6 10.7" stroke="rgba(150,175,60,0.29)" stroke-width="0.6" fill="none"/><path d="M763.3 41 Q761.6 19.1 757.4 -2.8" stroke="rgba(215,215,130,0.27)" stroke-width="0.6" fill="none"/><path d="M39.2 41 Q36.3 18.2 29.5 -4.6" stroke="rgba(150,175,60,0.28)" stroke-width="1.2" fill="none"/><path d="M336.7 41 Q335.4 28.6 332.3 16.1" stroke="rgba(55,65,20,0.21)" stroke-width="1.2" fill="none"/><path d="M395.5 41 Q396.6 30.7 399.1 20.4" stroke="rgba(55,65,20,0.12)" stroke-width="1.5" fill="none"/><path d="M472.2 41 Q473.1 20.0 475.2 -1.0" stroke="rgba(150,175,60,0.24)" stroke-width="0.9" fill="none"/><path d="M154.8 41 Q152.4 19.7 146.8 -1.5" stroke="rgba(215,215,130,0.21)" stroke-width="1.4" fill="none"/><path d="M193.9 41 Q196.5 21.9 202.6 2.7" stroke="rgba(55,65,20,0.12)" stroke-width="1.4" fill="none"/><path d="M1140.1 41 Q1140.8 31.9 1142.5 22.7" stroke="rgba(150,175,60,0.24)" stroke-width="1.2" fill="none"/><path d="M442.4 41 Q443.2 19.8 445.2 -1.4" stroke="rgba(215,215,130,0.20)" stroke-width="1.5" fill="none"/><path d="M984.0 41 Q983.6 21.9 982.7 2.8" stroke="rgba(215,215,130,0.10)" stroke-width="1.4" fill="none"/><path d="M747.2 41 Q748.3 25.2 750.8 9.4" stroke="rgba(55,65,20,0.16)" stroke-width="1.2" fill="none"/><path d="M755.0 41 Q757.3 23.2 762.7 5.4" stroke="rgba(215,215,130,0.12)" stroke-width="1.5" fill="none"/><path d="M400.5 41 Q398.6 23.4 394.1 5.9" stroke="rgba(55,65,20,0.15)" stroke-width="1.4" fill="none"/><path d="M116.5 41 Q114.7 19.1 110.4 -2.9" stroke="rgba(215,215,130,0.15)" stroke-width="0.7" fill="none"/><path d="M715.1 41 Q715.9 26.0 717.6 11.0" stroke="rgba(215,215,130,0.22)" stroke-width="1.1" fill="none"/><path d="M836.6 41 Q834.9 27.5 830.9 14.1" stroke="rgba(215,215,130,0.18)" stroke-width="1.3" fill="none"/><path d="M799.7 41 Q801.3 25.1 805.1 9.2" stroke="rgba(150,175,60,0.24)" stroke-width="0.9" fill="none"/><path d="M508.9 41 Q507.0 28.1 502.6 15.2" stroke="rgba(215,215,130,0.23)" stroke-width="1.6" fill="none"/><path d="M1341.5 41 Q1340.8 26.4 1339.2 11.7" stroke="rgba(55,65,20,0.22)" stroke-width="0.7" fill="none"/><path d="M23.7 41 Q25.4 26.3 29.4 11.6" stroke="rgba(55,65,20,0.18)" stroke-width="1.0" fill="none"/><path d="M1013.6 41 Q1014.6 25.1 1017.0 9.2" stroke="rgba(55,65,20,0.17)" stroke-width="1.2" fill="none"/><path d="M123.7 41 Q126.5 23.0 133.1 5.0" stroke="rgba(55,65,20,0.18)" stroke-width="1.1" fill="none"/><path d="M227.2 41 Q229.6 18.4 235.0 -4.2" stroke="rgba(55,65,20,0.13)" stroke-width="0.8" fill="none"/><path d="M973.0 41 Q970.5 32.9 964.7 24.9" stroke="rgba(215,215,130,0.19)" stroke-width="1.5" fill="none"/><path d="M8.1 41 Q9.0 23.3 10.9 5.7" stroke="rgba(150,175,60,0.29)" stroke-width="1.1" fill="none"/><path d="M223.7 41 Q221.4 30.7 216.0 20.4" stroke="rgba(215,215,130,0.18)" stroke-width="1.1" fill="none"/><path d="M644.0 41 Q642.9 26.0 640.5 11.0" stroke="rgba(55,65,20,0.19)" stroke-width="1.6" fill="none"/><path d="M818.1 41 Q815.4 30.7 809.0 20.4" stroke="rgba(215,215,130,0.20)" stroke-width="1.2" fill="none"/><path d="M666.0 41 Q665.6 19.6 664.8 -1.9" stroke="rgba(215,215,130,0.13)" stroke-width="1.0" fill="none"/><path d="M821.5 41 Q823.3 23.8 827.4 6.6" stroke="rgba(215,215,130,0.21)" stroke-width="1.4" fill="none"/><path d="M324.0 41 Q322.5 21.4 319.1 1.7" stroke="rgba(150,175,60,0.23)" stroke-width="1.3" fill="none"/><path d="M596.6 41 Q595.2 30.6 591.9 20.1" stroke="rgba(55,65,20,0.12)" stroke-width="1.5" fill="none"/><path d="M598.9 41 Q599.2 24.7 599.9 8.3" stroke="rgba(215,215,130,0.20)" stroke-width="1.2" fill="none"/><path d="M1297.7 41 Q1294.8 32.8 1288.0 24.6" stroke="rgba(55,65,20,0.09)" stroke-width="0.7" fill="none"/><path d="M1118.0 41 Q1118.0 18.6 1117.9 -3.8" stroke="rgba(215,215,130,0.11)" stroke-width="1.4" fill="none"/><path d="M27.1 41 Q26.0 16.4 23.4 -8.1" stroke="rgba(215,215,130,0.10)" stroke-width="1.1" fill="none"/><path d="M1323.2 41 Q1325.7 25.8 1331.4 10.7" stroke="rgba(55,65,20,0.20)" stroke-width="1.3" fill="none"/><path d="M327.8 41 Q330.3 17.4 336.3 -6.2" stroke="rgba(215,215,130,0.19)" stroke-width="1.1" fill="none"/><path d="M273.5 41 Q274.0 20.3 275.3 -0.4" stroke="rgba(55,65,20,0.19)" stroke-width="0.7" fill="none"/><path d="M329.7 41 Q328.1 27.5 324.3 14.1" stroke="rgba(215,215,130,0.19)" stroke-width="1.3" fill="none"/><path d="M800.5 41 Q803.5 21.3 810.5 1.7" stroke="rgba(55,65,20,0.22)" stroke-width="1.1" fill="none"/><path d="M696.2 41 Q693.8 26.8 688.2 12.6" stroke="rgba(215,215,130,0.12)" stroke-width="0.6" fill="none"/><path d="M115.0 41 Q116.6 20.1 120.3 -0.8" stroke="rgba(55,65,20,0.11)" stroke-width="1.0" fill="none"/><path d="M201.1 41 Q200.8 26.4 200.0 11.8" stroke="rgba(55,65,20,0.22)" stroke-width="1.1" fill="none"/><path d="M959.9 41 Q961.6 19.8 965.5 -1.3" stroke="rgba(150,175,60,0.27)" stroke-width="0.7" fill="none"/><path d="M175.3 41 Q174.0 25.3 170.9 9.6" stroke="rgba(55,65,20,0.11)" stroke-width="1.5" fill="none"/><path d="M591.9 41 Q593.5 23.4 597.2 5.8" stroke="rgba(150,175,60,0.29)" stroke-width="1.1" fill="none"/><path d="M545.5 41 Q546.7 31.6 549.3 22.3" stroke="rgba(215,215,130,0.22)" stroke-width="0.9" fill="none"/><path d="M717.3 41 Q714.4 29.0 707.5 17.0" stroke="rgba(215,215,130,0.17)" stroke-width="1.1" fill="none"/><path d="M699.2 41 Q698.6 19.9 697.3 -1.1" stroke="rgba(215,215,130,0.23)" stroke-width="0.8" fill="none"/><path d="M816.1 41 Q817.8 22.9 821.7 4.9" stroke="rgba(215,215,130,0.22)" stroke-width="1.2" fill="none"/><path d="M143.4 41 Q146.1 20.7 152.4 0.4" stroke="rgba(55,65,20,0.12)" stroke-width="1.1" fill="none"/><path d="M1009.3 41 Q1007.6 17.6 1003.7 -5.9" stroke="rgba(215,215,130,0.21)" stroke-width="0.7" fill="none"/><path d="M33.9 41 Q31.0 21.9 24.1 2.9" stroke="rgba(150,175,60,0.29)" stroke-width="1.3" fill="none"/><path d="M905.4 41 Q903.8 16.7 900.1 -7.6" stroke="rgba(215,215,130,0.24)" stroke-width="1.4" fill="none"/><path d="M1048.0 41 Q1048.6 29.5 1050.1 18.0" stroke="rgba(215,215,130,0.19)" stroke-width="1.1" fill="none"/><path d="M252.6 41 Q253.2 24.7 254.5 8.4" stroke="rgba(215,215,130,0.13)" stroke-width="1.1" fill="none"/><path d="M868.9 41 Q870.9 22.7 875.7 4.4" stroke="rgba(55,65,20,0.17)" stroke-width="1.1" fill="none"/><path d="M1202.6 41 Q1203.7 29.0 1206.4 17.0" stroke="rgba(150,175,60,0.27)" stroke-width="1.2" fill="none"/><path d="M338.2 41 Q338.9 19.8 340.5 -1.3" stroke="rgba(215,215,130,0.22)" stroke-width="1.1" fill="none"/><path d="M829.4 41 Q830.6 20.8 833.4 0.6" stroke="rgba(215,215,130,0.14)" stroke-width="1.5" fill="none"/><path d="M435.5 41 Q436.3 23.0 438.1 5.0" stroke="rgba(215,215,130,0.18)" stroke-width="1.4" fill="none"/><path d="M1048.7 41 Q1048.4 32.5 1047.7 24.0" stroke="rgba(150,175,60,0.26)" stroke-width="1.0" fill="none"/><path d="M889.9 41 Q890.2 22.8 891.0 4.6" stroke="rgba(215,215,130,0.25)" stroke-width="1.1" fill="none"/><path d="M497.4 41 Q500.1 23.8 506.5 6.7" stroke="rgba(215,215,130,0.15)" stroke-width="0.7" fill="none"/><path d="M1233.3 41 Q1230.4 20.4 1223.7 -0.2" stroke="rgba(150,175,60,0.27)" stroke-width="1.5" fill="none"/><path d="M93.4 41 Q95.4 27.3 99.9 13.6" stroke="rgba(215,215,130,0.27)" stroke-width="1.4" fill="none"/><path d="M243.4 41 Q243.4 22.1 243.3 3.3" stroke="rgba(55,65,20,0.09)" stroke-width="1.4" fill="none"/><path d="M395.1 41 Q392.4 20.0 386.3 -1.0" stroke="rgba(55,65,20,0.10)" stroke-width="1.2" fill="none"/><path d="M800.8 41 Q802.1 31.9 805.2 22.8" stroke="rgba(55,65,20,0.14)" stroke-width="1.2" fill="none"/><path d="M1193.2 41 Q1193.8 25.2 1195.2 9.3" stroke="rgba(215,215,130,0.15)" stroke-width="1.6" fill="none"/><path d="M927.7 41 Q926.0 23.7 921.8 6.4" stroke="rgba(215,215,130,0.27)" stroke-width="1.4" fill="none"/><path d="M858.1 41 Q857.9 20.0 857.5 -1.1" stroke="rgba(150,175,60,0.23)" stroke-width="1.1" fill="none"/><path d="M480.8 41 Q478.5 19.9 473.1 -1.1" stroke="rgba(55,65,20,0.10)" stroke-width="0.6" fill="none"/><path d="M717.6 41 Q718.2 31.3 719.7 21.6" stroke="rgba(55,65,20,0.14)" stroke-width="1.3" fill="none"/><path d="M390.9 41 Q389.4 30.3 385.8 19.6" stroke="rgba(150,175,60,0.20)" stroke-width="1.6" fill="none"/><path d="M933.0 41 Q932.3 18.2 930.7 -4.6" stroke="rgba(215,215,130,0.23)" stroke-width="1.0" fill="none"/><path d="M457.2 41 Q454.8 22.5 449.1 4.0" stroke="rgba(215,215,130,0.13)" stroke-width="1.4" fill="none"/><path d="M483.3 41 Q485.6 32.6 490.9 24.1" stroke="rgba(55,65,20,0.14)" stroke-width="1.3" fill="none"/><path d="M1148.7 41 Q1149.3 22.7 1150.6 4.5" stroke="rgba(150,175,60,0.29)" stroke-width="0.7" fill="none"/><path d="M497.7 41 Q499.3 15.6 502.8 -9.7" stroke="rgba(215,215,130,0.21)" stroke-width="0.7" fill="none"/><path d="M577.6 41 Q575.4 26.6 570.5 12.1" stroke="rgba(55,65,20,0.20)" stroke-width="1.3" fill="none"/><path d="M321.2 41 Q320.9 32.2 320.1 23.5" stroke="rgba(55,65,20,0.14)" stroke-width="0.9" fill="none"/><path d="M423.6 41 Q423.8 19.7 424.3 -1.5" stroke="rgba(150,175,60,0.20)" stroke-width="1.3" fill="none"/><path d="M1284.8 41 Q1284.8 28.2 1284.7 15.3" stroke="rgba(215,215,130,0.16)" stroke-width="1.3" fill="none"/><path d="M921.4 41 Q920.2 18.6 917.4 -3.8" stroke="rgba(215,215,130,0.11)" stroke-width="0.8" fill="none"/><path d="M391.9 41 Q393.4 24.7 397.0 8.4" stroke="rgba(215,215,130,0.10)" stroke-width="0.8" fill="none"/><path d="M128.7 41 Q128.6 18.0 128.5 -5.1" stroke="rgba(55,65,20,0.09)" stroke-width="0.9" fill="none"/><path d="M1072.3 41 Q1069.4 22.0 1062.8 3.1" stroke="rgba(55,65,20,0.15)" stroke-width="1.4" fill="none"/><path d="M532.0 41 Q532.3 23.1 532.8 5.1" stroke="rgba(150,175,60,0.17)" stroke-width="0.8" fill="none"/><path d="M101.4 41 Q101.7 33.0 102.3 25.0" stroke="rgba(150,175,60,0.29)" stroke-width="1.3" fill="none"/><path d="M821.4 41 Q821.1 26.7 820.3 12.5" stroke="rgba(55,65,20,0.10)" stroke-width="1.3" fill="none"/><path d="M57.4 41 Q57.2 28.9 57.0 16.7" stroke="rgba(215,215,130,0.12)" stroke-width="0.9" fill="none"/><path d="M1067.5 41 Q1064.5 22.4 1057.5 3.7" stroke="rgba(55,65,20,0.12)" stroke-width="0.7" fill="none"/><path d="M50.2 41 Q52.9 25.0 59.0 9.0" stroke="rgba(150,175,60,0.28)" stroke-width="1.1" fill="none"/><path d="M931.0 41 Q930.5 26.2 929.2 11.4" stroke="rgba(215,215,130,0.18)" stroke-width="1.3" fill="none"/><path d="M469.0 41 Q468.5 24.1 467.5 7.1" stroke="rgba(55,65,20,0.11)" stroke-width="1.1" fill="none"/><path d="M75.2 41 Q75.1 18.4 74.7 -4.2" stroke="rgba(215,215,130,0.23)" stroke-width="1.6" fill="none"/><path d="M832.9 41 Q832.2 32.4 830.6 23.9" stroke="rgba(55,65,20,0.19)" stroke-width="1.0" fill="none"/><path d="M1031.1 41 Q1031.4 20.3 1032.2 -0.5" stroke="rgba(215,215,130,0.18)" stroke-width="1.3" fill="none"/><path d="M1176.3 41 Q1177.2 16.9 1179.5 -7.2" stroke="rgba(55,65,20,0.18)" stroke-width="1.5" fill="none"/><path d="M840.6 41 Q838.7 22.7 834.2 4.4" stroke="rgba(55,65,20,0.15)" stroke-width="0.8" fill="none"/><path d="M1085.5 41 Q1087.5 26.3 1092.1 11.5" stroke="rgba(55,65,20,0.09)" stroke-width="1.3" fill="none"/><path d="M246.2 41 Q246.0 24.4 245.4 7.8" stroke="rgba(150,175,60,0.18)" stroke-width="0.8" fill="none"/><path d="M364.5 41 Q365.4 16.2 367.5 -8.6" stroke="rgba(215,215,130,0.13)" stroke-width="1.3" fill="none"/><path d="M343.7 41 Q346.3 23.5 352.3 6.0" stroke="rgba(150,175,60,0.21)" stroke-width="1.2" fill="none"/><path d="M636.3 41 Q633.7 20.9 627.7 0.8" stroke="rgba(55,65,20,0.18)" stroke-width="1.3" fill="none"/><path d="M1021.7 41 Q1019.8 28.5 1015.2 16.1" stroke="rgba(55,65,20,0.10)" stroke-width="1.4" fill="none"/><path d="M849.4 41 Q850.8 21.9 854.1 2.8" stroke="rgba(55,65,20,0.09)" stroke-width="0.7" fill="none"/><path d="M52.7 41 Q51.1 26.5 47.3 12.0" stroke="rgba(215,215,130,0.25)" stroke-width="0.7" fill="none"/><path d="M1143.2 41 Q1144.7 19.1 1148.2 -2.8" stroke="rgba(150,175,60,0.26)" stroke-width="0.6" fill="none"/><path d="M235.5 41 Q233.4 16.1 228.7 -8.8" stroke="rgba(215,215,130,0.27)" stroke-width="1.3" fill="none"/><path d="M1041.3 41 Q1044.1 30.4 1050.7 19.9" stroke="rgba(215,215,130,0.11)" stroke-width="1.5" fill="none"/><path d="M773.2 41 Q775.2 26.9 779.9 12.7" stroke="rgba(215,215,130,0.23)" stroke-width="1.4" fill="none"/><path d="M686.8 41 Q687.6 23.3 689.5 5.6" stroke="rgba(150,175,60,0.22)" stroke-width="1.4" fill="none"/><path d="M802.7 41 Q804.9 31.2 810.2 21.4" stroke="rgba(150,175,60,0.19)" stroke-width="0.9" fill="none"/><path d="M39.1 41 Q39.4 32.3 40.2 23.6" stroke="rgba(55,65,20,0.17)" stroke-width="1.3" fill="none"/><path d="M1037.4 41 Q1035.7 23.2 1031.8 5.3" stroke="rgba(215,215,130,0.22)" stroke-width="0.9" fill="none"/><path d="M495.4 41 Q492.8 21.1 486.5 1.2" stroke="rgba(55,65,20,0.16)" stroke-width="1.4" fill="none"/><path d="M1029.7 41 Q1028.4 16.6 1025.4 -7.8" stroke="rgba(150,175,60,0.27)" stroke-width="1.1" fill="none"/><path d="M405.7 41 Q405.4 15.8 404.7 -9.5" stroke="rgba(150,175,60,0.18)" stroke-width="0.7" fill="none"/><path d="M39.0 41 Q36.5 25.0 30.5 9.0" stroke="rgba(55,65,20,0.16)" stroke-width="1.2" fill="none"/><path d="M714.3 41 Q714.2 18.2 713.9 -4.5" stroke="rgba(215,215,130,0.14)" stroke-width="1.0" fill="none"/><path d="M799.7 41 Q798.3 26.1 794.9 11.3" stroke="rgba(55,65,20,0.12)" stroke-width="1.3" fill="none"/><path d="M278.8 41 Q278.9 29.5 279.4 18.0" stroke="rgba(55,65,20,0.18)" stroke-width="1.5" fill="none"/><path d="M1347.1 41 Q1347.9 20.2 1349.6 -0.7" stroke="rgba(55,65,20,0.13)" stroke-width="0.7" fill="none"/><path d="M241.7 41 Q244.2 22.3 250.1 3.6" stroke="rgba(215,215,130,0.22)" stroke-width="1.4" fill="none"/><path d="M726.2 41 Q723.8 16.4 718.4 -8.2" stroke="rgba(215,215,130,0.16)" stroke-width="1.5" fill="none"/><path d="M407.2 41 Q408.8 22.2 412.7 3.3" stroke="rgba(215,215,130,0.28)" stroke-width="1.1" fill="none"/><path d="M1322.9 41 Q1320.0 26.8 1313.4 12.7" stroke="rgba(215,215,130,0.19)" stroke-width="1.5" fill="none"/><path d="M462.2 41 Q459.7 16.9 453.9 -7.3" stroke="rgba(55,65,20,0.09)" stroke-width="1.4" fill="none"/><path d="M1286.9 41 Q1288.6 17.1 1292.5 -6.8" stroke="rgba(150,175,60,0.23)" stroke-width="1.1" fill="none"/><path d="M1068.8 41 Q1066.7 18.5 1061.7 -4.0" stroke="rgba(55,65,20,0.16)" stroke-width="0.7" fill="none"/><path d="M590.4 41 Q591.9 16.4 595.6 -8.3" stroke="rgba(215,215,130,0.27)" stroke-width="0.7" fill="none"/><path d="M141.0 41 Q141.5 25.9 142.7 10.8" stroke="rgba(150,175,60,0.18)" stroke-width="1.0" fill="none"/><path d="M478.1 41 Q478.7 22.0 480.1 3.0" stroke="rgba(215,215,130,0.23)" stroke-width="1.4" fill="none"/><path d="M103.7 41 Q104.4 31.8 106.1 22.6" stroke="rgba(215,215,130,0.16)" stroke-width="0.8" fill="none"/><path d="M626.3 41 Q624.1 16.7 619.0 -7.6" stroke="rgba(215,215,130,0.19)" stroke-width="1.1" fill="none"/><path d="M734.9 41 Q736.1 21.0 739.0 0.9" stroke="rgba(215,215,130,0.21)" stroke-width="0.7" fill="none"/><path d="M1149.3 41 Q1150.1 20.6 1151.9 0.2" stroke="rgba(215,215,130,0.13)" stroke-width="0.7" fill="none"/><path d="M1246.2 41 Q1245.9 16.8 1245.3 -7.5" stroke="rgba(215,215,130,0.17)" stroke-width="1.6" fill="none"/><path d="M255.2 41 Q253.0 26.7 248.0 12.4" stroke="rgba(215,215,130,0.20)" stroke-width="0.8" fill="none"/><path d="M825.3 41 Q827.5 27.7 832.6 14.3" stroke="rgba(215,215,130,0.10)" stroke-width="1.4" fill="none"/><path d="M1168.1 41 Q1168.8 26.0 1170.5 11.0" stroke="rgba(215,215,130,0.16)" stroke-width="1.2" fill="none"/><path d="M755.5 41 Q752.8 17.0 746.7 -7.0" stroke="rgba(215,215,130,0.14)" stroke-width="1.2" fill="none"/><path d="M117.9 41 Q120.7 18.1 127.2 -4.9" stroke="rgba(150,175,60,0.29)" stroke-width="1.2" fill="none"/><path d="M7.8 41 Q5.2 20.9 -0.9 0.8" stroke="rgba(215,215,130,0.16)" stroke-width="0.8" fill="none"/><path d="M23.6 41 Q26.2 19.6 32.1 -1.9" stroke="rgba(215,215,130,0.19)" stroke-width="1.5" fill="none"/><path d="M682.4 41 Q684.1 28.7 688.0 16.3" stroke="rgba(150,175,60,0.20)" stroke-width="1.0" fill="none"/><path d="M1011.2 41 Q1008.9 22.8 1003.5 4.7" stroke="rgba(215,215,130,0.13)" stroke-width="1.3" fill="none"/><path d="M343.9 41 Q346.3 26.0 352.1 10.9" stroke="rgba(55,65,20,0.19)" stroke-width="1.3" fill="none"/><path d="M946.1 41 Q946.6 31.6 948.0 22.2" stroke="rgba(55,65,20,0.18)" stroke-width="1.3" fill="none"/><path d="M751.2 41 Q749.4 20.8 745.0 0.5" stroke="rgba(55,65,20,0.21)" stroke-width="1.1" fill="none"/><path d="M425.7 41 Q424.0 15.5 419.9 -9.9" stroke="rgba(55,65,20,0.17)" stroke-width="1.2" fill="none"/><path d="M541.2 41 Q542.4 17.4 545.0 -6.1" stroke="rgba(55,65,20,0.15)" stroke-width="1.6" fill="none"/><path d="M125.4 41 Q125.5 26.2 125.6 11.4" stroke="rgba(55,65,20,0.17)" stroke-width="1.1" fill="none"/><path d="M1351.4 41 Q1352.4 29.7 1354.8 18.5" stroke="rgba(150,175,60,0.22)" stroke-width="1.4" fill="none"/><path d="M1363.2 41 Q1365.1 19.6 1369.6 -1.9" stroke="rgba(215,215,130,0.14)" stroke-width="1.5" fill="none"/><path d="M309.2 41 Q309.7 28.1 310.9 15.3" stroke="rgba(55,65,20,0.20)" stroke-width="1.5" fill="none"/><path d="M1261.8 41 Q1262.5 20.6 1264.1 0.2" stroke="rgba(215,215,130,0.27)" stroke-width="1.4" fill="none"/><path d="M401.3 41 Q404.2 29.3 410.9 17.7" stroke="rgba(215,215,130,0.26)" stroke-width="0.7" fill="none"/><path d="M855.6 41 Q854.3 28.2 851.2 15.4" stroke="rgba(55,65,20,0.21)" stroke-width="0.7" fill="none"/><path d="M236.5 41 Q234.4 21.1 229.5 1.3" stroke="rgba(215,215,130,0.20)" stroke-width="0.7" fill="none"/><path d="M936.4 41 Q939.3 24.5 946.0 8.0" stroke="rgba(150,175,60,0.17)" stroke-width="1.0" fill="none"/><path d="M730.3 41 Q732.0 30.8 735.8 20.6" stroke="rgba(150,175,60,0.15)" stroke-width="1.3" fill="none"/><path d="M468.6 41 Q466.0 16.6 460.2 -7.9" stroke="rgba(55,65,20,0.21)" stroke-width="1.2" fill="none"/><path d="M1301.1 41 Q1302.9 23.6 1306.9 6.1" stroke="rgba(215,215,130,0.13)" stroke-width="1.2" fill="none"/><path d="M901.3 41 Q902.6 25.7 905.8 10.5" stroke="rgba(215,215,130,0.14)" stroke-width="0.7" fill="none"/><path d="M123.8 41 Q121.8 21.3 117.2 1.7" stroke="rgba(215,215,130,0.17)" stroke-width="0.7" fill="none"/><path d="M881.6 41 Q879.3 31.6 874.1 22.2" stroke="rgba(150,175,60,0.25)" stroke-width="1.2" fill="none"/><path d="M498.4 41 Q500.9 26.2 506.7 11.5" stroke="rgba(150,175,60,0.24)" stroke-width="1.6" fill="none"/><path d="M187.5 41 Q185.9 25.3 182.0 9.6" stroke="rgba(215,215,130,0.12)" stroke-width="1.3" fill="none"/><path d="M485.6 41 Q484.2 17.7 481.0 -5.6" stroke="rgba(215,215,130,0.26)" stroke-width="1.1" fill="none"/><path d="M78.0 41 Q78.7 17.6 80.4 -5.9" stroke="rgba(55,65,20,0.18)" stroke-width="0.7" fill="none"/><path d="M724.6 41 Q724.8 23.4 725.4 5.8" stroke="rgba(215,215,130,0.15)" stroke-width="1.3" fill="none"/><path d="M1266.2 41 Q1267.7 19.2 1271.0 -2.7" stroke="rgba(215,215,130,0.16)" stroke-width="1.0" fill="none"/><path d="M289.4 41 Q289.0 30.1 288.2 19.3" stroke="rgba(215,215,130,0.18)" stroke-width="1.4" fill="none"/><path d="M644.0 41 Q645.4 22.7 648.5 4.3" stroke="rgba(55,65,20,0.12)" stroke-width="0.7" fill="none"/><path d="M620.3 41 Q618.5 21.4 614.2 1.8" stroke="rgba(215,215,130,0.15)" stroke-width="1.2" fill="none"/><path d="M55.3 41 Q57.3 18.7 62.0 -3.7" stroke="rgba(215,215,130,0.15)" stroke-width="1.3" fill="none"/><path d="M1212.7 41 Q1212.7 21.0 1212.8 1.0" stroke="rgba(215,215,130,0.13)" stroke-width="1.4" fill="none"/><path d="M1140.0 41 Q1139.0 16.0 1136.7 -9.0" stroke="rgba(150,175,60,0.15)" stroke-width="1.0" fill="none"/><path d="M8.6 41 Q6.9 30.8 2.8 20.6" stroke="rgba(215,215,130,0.12)" stroke-width="0.9" fill="none"/><path d="M238.9 41 Q237.2 23.2 233.3 5.4" stroke="rgba(150,175,60,0.17)" stroke-width="0.8" fill="none"/><path d="M1358.6 41 Q1361.4 21.7 1368.1 2.4" stroke="rgba(55,65,20,0.18)" stroke-width="1.6" fill="none"/><path d="M868.2 41 Q868.1 25.0 867.9 9.1" stroke="rgba(215,215,130,0.11)" stroke-width="1.5" fill="none"/><path d="M1363.7 41 Q1364.4 32.7 1366.0 24.5" stroke="rgba(150,175,60,0.19)" stroke-width="0.6" fill="none"/><path d="M284.0 41 Q284.9 28.5 287.2 15.9" stroke="rgba(150,175,60,0.27)" stroke-width="0.6" fill="none"/><path d="M1279.6 41 Q1279.6 24.9 1279.4 8.9" stroke="rgba(215,215,130,0.24)" stroke-width="1.1" fill="none"/><path d="M1254.8 41 Q1252.8 30.4 1248.3 19.8" stroke="rgba(150,175,60,0.21)" stroke-width="0.9" fill="none"/><path d="M438.3 41 Q441.1 15.5 447.6 -9.9" stroke="rgba(215,215,130,0.17)" stroke-width="1.4" fill="none"/><path d="M654.7 41 Q653.4 29.0 650.5 17.0" stroke="rgba(215,215,130,0.15)" stroke-width="0.7" fill="none"/><path d="M583.5 41 Q583.9 22.1 584.7 3.2" stroke="rgba(55,65,20,0.10)" stroke-width="1.3" fill="none"/><path d="M556.1 41 Q553.6 28.6 547.7 16.3" stroke="rgba(150,175,60,0.19)" stroke-width="1.5" fill="none"/><path d="M744.4 41 Q742.1 31.0 737.0 20.9" stroke="rgba(215,215,130,0.25)" stroke-width="1.5" fill="none"/><path d="M1309.9 41 Q1310.3 28.1 1311.2 15.2" stroke="rgba(215,215,130,0.24)" stroke-width="1.0" fill="none"/><path d="M427.5 41 Q424.9 32.0 418.9 23.1" stroke="rgba(150,175,60,0.27)" stroke-width="1.2" fill="none"/><path d="M963.9 41 Q965.6 31.1 969.6 21.3" stroke="rgba(215,215,130,0.10)" stroke-width="1.3" fill="none"/><path d="M454.4 41 Q455.7 17.1 458.9 -6.7" stroke="rgba(215,215,130,0.25)" stroke-width="1.3" fill="none"/><path d="M632.3 41 Q630.5 31.0 626.2 20.9" stroke="rgba(150,175,60,0.24)" stroke-width="1.0" fill="none"/><path d="M399.2 41 Q401.7 32.8 407.4 24.7" stroke="rgba(55,65,20,0.19)" stroke-width="1.5" fill="none"/><path d="M1332.6 41 Q1332.1 17.1 1330.8 -6.8" stroke="rgba(55,65,20,0.18)" stroke-width="1.1" fill="none"/><path d="M143.8 41 Q141.3 19.8 135.4 -1.5" stroke="rgba(150,175,60,0.21)" stroke-width="1.1" fill="none"/><path d="M459.9 41 Q457.8 23.0 453.0 5.0" stroke="rgba(150,175,60,0.25)" stroke-width="0.6" fill="none"/><path d="M940.0 41 Q939.5 24.4 938.2 7.7" stroke="rgba(55,65,20,0.15)" stroke-width="1.5" fill="none"/><path d="M75.8 41 Q74.8 21.0 72.4 1.0" stroke="rgba(215,215,130,0.24)" stroke-width="1.0" fill="none"/><path d="M404.3 41 Q405.6 25.2 408.6 9.4" stroke="rgba(55,65,20,0.09)" stroke-width="0.9" fill="none"/><path d="M996.4 41 Q995.3 17.3 992.7 -6.4" stroke="rgba(215,215,130,0.21)" stroke-width="1.2" fill="none"/><path d="M835.2 41 Q837.4 24.9 842.5 8.9" stroke="rgba(55,65,20,0.09)" stroke-width="0.9" fill="none"/><path d="M284.5 41 Q281.9 17.3 276.0 -6.4" stroke="rgba(55,65,20,0.11)" stroke-width="1.2" fill="none"/><path d="M1204.7 41 Q1206.8 30.8 1211.6 20.6" stroke="rgba(55,65,20,0.16)" stroke-width="0.9" fill="none"/><path d="M520.5 41 Q521.3 26.7 523.1 12.4" stroke="rgba(150,175,60,0.29)" stroke-width="0.9" fill="none"/><path d="M123.9 41 Q124.8 26.6 127.0 12.1" stroke="rgba(215,215,130,0.14)" stroke-width="1.2" fill="none"/><path d="M1244.6 41 Q1243.8 17.2 1242.0 -6.5" stroke="rgba(215,215,130,0.14)" stroke-width="1.5" fill="none"/><path d="M638.9 41 Q640.7 21.7 644.9 2.4" stroke="rgba(55,65,20,0.11)" stroke-width="0.9" fill="none"/><path d="M997.6 41 Q996.8 16.0 994.8 -9.0" stroke="rgba(55,65,20,0.17)" stroke-width="1.6" fill="none"/><path d="M512.7 41 Q513.9 25.8 516.7 10.6" stroke="rgba(215,215,130,0.28)" stroke-width="1.1" fill="none"/><path d="M851.5 41 Q849.8 20.6 846.0 0.2" stroke="rgba(215,215,130,0.15)" stroke-width="1.3" fill="none"/><path d="M119.8 41 Q121.5 32.8 125.4 24.6" stroke="rgba(215,215,130,0.19)" stroke-width="1.3" fill="none"/><path d="M1013.0 41 Q1013.2 15.8 1013.4 -9.4" stroke="rgba(215,215,130,0.19)" stroke-width="0.6" fill="none"/><path d="M157.8 41 Q156.1 23.8 152.2 6.6" stroke="rgba(215,215,130,0.16)" stroke-width="0.7" fill="none"/><path d="M166.0 41 Q163.8 31.5 158.8 22.0" stroke="rgba(150,175,60,0.30)" stroke-width="0.8" fill="none"/><path d="M1200.6 41 Q1203.4 26.9 1209.9 12.7" stroke="rgba(215,215,130,0.13)" stroke-width="1.5" fill="none"/><path d="M1153.5 41 Q1155.9 31.9 1161.5 22.8" stroke="rgba(215,215,130,0.23)" stroke-width="1.6" fill="none"/><path d="M1041.1 41 Q1041.5 22.9 1042.6 4.8" stroke="rgba(55,65,20,0.18)" stroke-width="1.5" fill="none"/><path d="M781.1 41 Q782.3 30.7 785.3 20.5" stroke="rgba(215,215,130,0.18)" stroke-width="1.1" fill="none"/><path d="M1276.0 41 Q1278.2 27.8 1283.4 14.6" stroke="rgba(55,65,20,0.11)" stroke-width="0.6" fill="none"/><path d="M1280.0 41 Q1278.9 15.7 1276.4 -9.6" stroke="rgba(215,215,130,0.25)" stroke-width="0.9" fill="none"/><path d="M297.2 41 Q299.7 26.9 305.4 12.7" stroke="rgba(55,65,20,0.19)" stroke-width="0.7" fill="none"/><path d="M391.7 41 Q394.7 28.4 401.5 15.8" stroke="rgba(215,215,130,0.24)" stroke-width="1.5" fill="none"/><path d="M724.4 41 Q725.5 24.6 728.0 8.2" stroke="rgba(55,65,20,0.19)" stroke-width="1.5" fill="none"/><path d="M1136.2 41 Q1138.1 27.9 1142.6 14.7" stroke="rgba(215,215,130,0.11)" stroke-width="0.8" fill="none"/><path d="M1162.3 41 Q1163.2 18.2 1165.5 -4.6" stroke="rgba(55,65,20,0.10)" stroke-width="1.2" fill="none"/><path d="M218.4 41 Q221.1 30.1 227.4 19.2" stroke="rgba(150,175,60,0.18)" stroke-width="0.7" fill="none"/><path d="M957.4 41 Q956.8 23.3 955.6 5.5" stroke="rgba(55,65,20,0.21)" stroke-width="0.8" fill="none"/><path d="M1156.5 41 Q1158.8 16.1 1164.2 -8.8" stroke="rgba(215,215,130,0.26)" stroke-width="0.6" fill="none"/><path d="M988.3 41 Q987.8 25.8 986.6 10.7" stroke="rgba(150,175,60,0.20)" stroke-width="0.7" fill="none"/><path d="M1146.2 41 Q1144.2 16.1 1139.5 -8.8" stroke="rgba(55,65,20,0.19)" stroke-width="0.8" fill="none"/><path d="M1115.1 41 Q1114.4 22.1 1112.8 3.2" stroke="rgba(215,215,130,0.10)" stroke-width="1.4" fill="none"/><path d="M1173.1 41 Q1174.7 21.8 1178.4 2.5" stroke="rgba(215,215,130,0.23)" stroke-width="1.3" fill="none"/><path d="M95.9 41 Q96.3 23.5 97.0 6.1" stroke="rgba(55,65,20,0.14)" stroke-width="1.3" fill="none"/><path d="M549.4 41 Q547.6 27.4 543.3 13.8" stroke="rgba(55,65,20,0.20)" stroke-width="0.7" fill="none"/><path d="M371.0 41 Q373.7 30.9 380.2 20.8" stroke="rgba(150,175,60,0.21)" stroke-width="1.3" fill="none"/><path d="M503.9 41 Q503.9 32.2 503.9 23.3" stroke="rgba(55,65,20,0.15)" stroke-width="1.2" fill="none"/><path d="M935.3 41 Q934.8 25.4 933.8 9.9" stroke="rgba(55,65,20,0.10)" stroke-width="1.3" fill="none"/><path d="M1057.7 41 Q1060.5 20.0 1066.9 -1.0" stroke="rgba(215,215,130,0.17)" stroke-width="1.1" fill="none"/><path d="M614.6 41 Q614.6 30.5 614.7 20.1" stroke="rgba(150,175,60,0.27)" stroke-width="0.7" fill="none"/><path d="M508.3 41 Q508.2 23.4 507.9 5.8" stroke="rgba(215,215,130,0.17)" stroke-width="1.6" fill="none"/><path d="M727.7 41 Q727.7 27.4 728.0 13.8" stroke="rgba(215,215,130,0.13)" stroke-width="1.0" fill="none"/><path d="M674.3 41 Q671.6 25.9 665.3 10.7" stroke="rgba(215,215,130,0.22)" stroke-width="1.1" fill="none"/><path d="M341.6 41 Q344.4 28.8 350.9 16.6" stroke="rgba(55,65,20,0.14)" stroke-width="1.3" fill="none"/><path d="M843.9 41 Q842.1 28.3 837.8 15.6" stroke="rgba(55,65,20,0.10)" stroke-width="1.0" fill="none"/><path d="M797.8 41 Q800.6 25.1 807.2 9.1" stroke="rgba(215,215,130,0.26)" stroke-width="0.6" fill="none"/><path d="M634.2 41 Q634.8 26.8 636.1 12.7" stroke="rgba(215,215,130,0.20)" stroke-width="1.5" fill="none"/><path d="M602.2 41 Q600.8 25.2 597.5 9.4" stroke="rgba(215,215,130,0.23)" stroke-width="1.5" fill="none"/><path d="M308.2 41 Q310.4 31.4 315.3 21.9" stroke="rgba(215,215,130,0.20)" stroke-width="1.4" fill="none"/><path d="M834.2 41 Q833.8 18.4 833.0 -4.2" stroke="rgba(55,65,20,0.12)" stroke-width="1.4" fill="none"/><path d="M756.8 41 Q757.4 25.0 758.6 9.0" stroke="rgba(150,175,60,0.27)" stroke-width="1.0" fill="none"/></svg>
<svg class="a" style="left:11px;top:734px;filter:drop-shadow(0 0 0.6px rgba(30,35,10,0.6))" width="28" height="26" viewBox="0 0 28 26"><path d="M1 4 L12 3 V12.8 H1 Z M13 2.8 L27.5 1 V12.8 H13 Z M1 14 H12 V23.6 L1 22.6 Z M13 14 H27.5 V26 L13 24 Z" fill="#fff"/></svg>
<svg class="a" style="left:65px;top:732px;" width="32" height="32" viewBox="0 0 32 32"><defs><radialGradient id="ffo" cx="0.3" cy="0.8" r="0.9"><stop offset="0" stop-color="#e0361c"/><stop offset="0.55" stop-color="#f26f1e"/><stop offset="1" stop-color="#ffc21a"/></radialGradient><linearGradient id="ffb" x1="0" y1="0" x2="0.3" y2="1"><stop offset="0" stop-color="#46b6ec"/><stop offset="0.6" stop-color="#1f6bbf"/><stop offset="1" stop-color="#1a3a8a"/></linearGradient></defs><circle cx="16" cy="16.3" r="14.8" fill="url(#ffo)"/><circle cx="18.6" cy="14" r="10.6" fill="url(#ffb)"/><path d="M27 8 Q31 14 28.5 21" stroke="#ffd21a" stroke-width="2.4" fill="none"/><path d="M24 5 Q27 7 28 10" stroke="#fff" stroke-width="1" fill="none" opacity=".7"/><path d="M4 2.5 L6.5 8 Q10 5 13 7 L16 5.5 L15 9 L18.5 10 Q15 13 14 15 Q13.5 18 19 19.5 L23 18.5 Q21 22.5 15.5 22.8 Q9.5 22.5 7 17 Q5 12 4 7 Z" fill="#f0641c"/></svg>
<div class="a" style="left:114px;top:729px;width:53px;height:38px;background:rgba(255,255,255,0.2);border:1px solid rgba(255,255,255,0.38);box-sizing:border-box"></div>
<div class="a" style="left:168px;top:729px;width:4px;height:38px;background:rgba(255,255,255,0.2);border:1px solid rgba(255,255,255,0.4);box-sizing:border-box"></div>
<svg class="a" style="left:125px;top:733px;" width="31" height="31" viewBox="0 0 31 31"><circle cx="15.5" cy="15.5" r="14.5" fill="#db4437"/><path d="M15.5 15.5 L28.05 8.25 A14.5 14.5 0 0 1 15.5 30 Z" fill="#f4c20d"/><path d="M15.5 15.5 L15.5 30 A14.5 14.5 0 0 1 2.95 8.25 Z" fill="#0f9d58"/><path d="M15.5 15.5 L2.95 8.25 A14.5 14.5 0 0 1 15.5 1 Z" fill="#db4437"/><circle cx="15.5" cy="15.5" r="6.5" fill="#fff"/><circle cx="15.5" cy="15.5" r="5" fill="#4285f4"/></svg>
<svg class="a" style="left:192px;top:732px;" width="25" height="32" viewBox="0 0 25 32"><defs><linearGradient id="clc" x1="0" y1="0" x2="1" y2="1"><stop offset="0" stop-color="#cfe8fb"/><stop offset="1" stop-color="#5a9ad8"/></linearGradient></defs><rect x="1.5" y="1.5" width="22" height="29" rx="2" fill="url(#clc)" stroke="#3a7ac0" stroke-width="1"/><rect x="3" y="3" width="19" height="1.6" fill="#f0a030"/><rect x="3.5" y="5.5" width="18" height="9" fill="#eef6fd" stroke="#6a9ad0" stroke-width=".8"/><text x="19.5" y="13" font-family="Liberation Sans" font-size="7.5" fill="#445" text-anchor="end">0</text><rect x="3.6" y="16.5" width="2.7" height="2.5" fill="#f4f8fc"/><rect x="7.3" y="16.5" width="2.7" height="2.5" fill="#f4f8fc"/><rect x="11.0" y="16.5" width="2.7" height="2.5" fill="#f4f8fc"/><rect x="14.7" y="16.5" width="2.7" height="2.5" fill="#f4f8fc"/><rect x="18.4" y="16.5" width="2.7" height="2.5" fill="#f4f8fc"/><rect x="3.6" y="20.0" width="2.7" height="2.5" fill="#f4f8fc"/><rect x="7.3" y="20.0" width="2.7" height="2.5" fill="#f4f8fc"/><rect x="11.0" y="20.0" width="2.7" height="2.5" fill="#f4f8fc"/><rect x="14.7" y="20.0" width="2.7" height="2.5" fill="#f4f8fc"/><rect x="18.4" y="20.0" width="2.7" height="2.5" fill="#f4f8fc"/><rect x="3.6" y="23.5" width="2.7" height="2.5" fill="#f4f8fc"/><rect x="7.3" y="23.5" width="2.7" height="2.5" fill="#f4f8fc"/><rect x="11.0" y="23.5" width="2.7" height="2.5" fill="#f4f8fc"/><rect x="14.7" y="23.5" width="2.7" height="2.5" fill="#f4f8fc"/><rect x="18.4" y="23.5" width="2.7" height="2.5" fill="#f08a20"/><rect x="3.6" y="27.0" width="2.7" height="2.5" fill="#f4f8fc"/><rect x="7.3" y="27.0" width="2.7" height="2.5" fill="#f4f8fc"/><rect x="11.0" y="27.0" width="2.7" height="2.5" fill="#f4f8fc"/><rect x="14.7" y="27.0" width="2.7" height="2.5" fill="#f4f8fc"/><rect x="18.4" y="27.0" width="2.7" height="2.5" fill="#f08a20"/></svg>
<div class="a" style="left:238px;top:729px;width:58px;height:38px;background:rgba(255,255,255,0.34);border:1px solid rgba(255,255,255,0.85);box-sizing:border-box"></div>
<svg class="a" style="left:238px;top:729px;" width="59" height="38" viewBox="0 0 59 38"><circle cx="34.7" cy="12.4" r="7.8" fill="#2a7de6"/><circle cx="23" cy="25.3" r="7.8" fill="#d72a30"/></svg>
<div class="a" style="left:300px;top:729px;width:58px;height:38px;background:rgba(255,255,255,0.16);border:1px solid rgba(255,255,255,0.42);box-sizing:border-box"></div>
<svg class="a" style="left:312px;top:732px;" width="34" height="32" viewBox="0 0 34 32"><defs><linearGradient id="plg" x1="0" y1="0" x2="0" y2="1"><stop offset="0" stop-color="#e6f4fd"/><stop offset="1" stop-color="#8cc4ec"/></linearGradient></defs><path d="M2.5 20 Q0.5 9 13 7.5 Q26 6.5 26.5 15 Q27 22 19.5 25.5 Q11 29 8 25 Q6.5 22.5 4.8 23.8 Q3 24.5 2.5 20 Z" fill="url(#plg)" stroke="#3a8ad0" stroke-width="1.1"/><circle cx="7" cy="16.8" r="2.3" fill="#e84040"/><circle cx="11.3" cy="12" r="2.3" fill="#5cc040"/><circle cx="17" cy="10.3" r="2.3" fill="#f0a020"/><circle cx="14.5" cy="18.5" r="1.8" fill="#f0f8ff" stroke="#5a8ab8" stroke-width="1"/><path d="M15.5 31 L27 7" stroke="#c05a10" stroke-width="3"/><path d="M15.5 31 L27 7" stroke="#f08a30" stroke-width="1.6"/><path d="M25 8 Q26 2 30 0.5 Q32 3 29 9 Z" fill="#c89060"/></svg>
<div class="a" style="left:362px;top:729px;width:58px;height:38px;background:rgba(255,255,255,0.16);border:1px solid rgba(255,255,255,0.42);box-sizing:border-box"></div>
<svg class="a" style="left:374px;top:733px;" width="34" height="31" viewBox="0 0 34 31"><defs><linearGradient id="exf" x1="0" y1="0" x2="0" y2="1"><stop offset="0" stop-color="#fdf0b0"/><stop offset="1" stop-color="#eec050"/></linearGradient><linearGradient id="exb" x1="0" y1="0" x2="0" y2="1"><stop offset="0" stop-color="#c8ecff"/><stop offset="1" stop-color="#3a9ae0"/></linearGradient></defs><path d="M2 4 h10 l2 2 h17 v20 h-29 z" fill="#e8b840" stroke="#c89a30" stroke-width=".8"/><rect x="4" y="2" width="8" height="4" fill="#fff" stroke="#ccc" stroke-width=".5"/><rect x="4" y="2" width="3" height="2" fill="#20a020"/><rect x="12" y="4" width="9" height="4" fill="#fff" stroke="#ccc" stroke-width=".5"/><rect x="12" y="4" width="3" height="2" fill="#d03030"/><rect x="20" y="6" width="10" height="4" fill="#fff" stroke="#ccc" stroke-width=".5"/><rect x="20" y="6" width="3" height="2" fill="#2a80e0"/><path d="M1.5 10 h30 v16 h-30 z" fill="url(#exf)" stroke="#c89a30" stroke-width=".8"/><path d="M4 17 q0 -1.5 1.5 -1.5 h19 q1.5 0 1.5 1.5 v11 h-6 v-6 h-10 v6 h-6 z" fill="url(#exb)" stroke="#2a78c0" stroke-width=".9"/></svg>
<div class="t" style="left:1049px;top:742.00px;font-size:12.4px;line-height:12.4px;color:#fff;letter-spacing:-0.2px">Tento počítač</div>
<div class="t" style="left:1128px;top:730.84px;font-size:12px;line-height:12px;color:#fff;">»</div>
<svg class="a" style="left:1148px;top:746px;filter:drop-shadow(0 0 0.6px rgba(10,15,0,1)) drop-shadow(0 0 0.4px rgba(10,15,0,0.8))" width="10" height="6" viewBox="0 0 10 6"><path d="M0.5 5.5 L4.5 0.5 L8.5 5.5 Z" fill="#fff"/></svg>
<svg class="a" style="left:1169px;top:741px;filter:drop-shadow(0 0 0.6px rgba(10,15,0,1)) drop-shadow(0 0 0.4px rgba(10,15,0,0.8))" width="16" height="16" viewBox="0 0 16 16"><path d="M0.5 2 L7 1 V7.3 H0.5 Z M8 0.8 L15.5 0 V7.3 H8 Z M0.5 8.5 H7 V14.8 L0.5 14 Z M8 8.5 H15.5 V16 L8 15 Z" fill="#fff"/></svg>
<svg class="a" style="left:1193px;top:741px;filter:drop-shadow(0 0 0.6px rgba(10,15,0,1)) drop-shadow(0 0 0.4px rgba(10,15,0,0.8))" width="17" height="17" viewBox="0 0 17 17"><defs><linearGradient id="shg" x1="0" y1="0" x2="0" y2="1"><stop offset="0" stop-color="#e04a5a"/><stop offset="1" stop-color="#b01e30"/></linearGradient></defs><path d="M1 1 h13.5 v7 q0 5.5 -6.75 8.5 q-6.75 -3 -6.75 -8.5 z" fill="url(#shg)" stroke="#fff" stroke-width="1"/><path d="M3.8 9.5 V3.5 L7.75 7 L11.7 3.5 V9.5" stroke="#fff" stroke-width="1.4" fill="none" opacity=".9"/><rect x="7.5" y="8" width="9" height="9" rx="1.2" fill="#2a6aa6" stroke="#1a3a60" stroke-width=".8"/><circle cx="12" cy="12.5" r="2.6" fill="none" stroke="#a8d0f0" stroke-width="1.1"/></svg>
<svg class="a" style="left:1218px;top:740px;filter:drop-shadow(0 0 0.6px rgba(10,15,0,1)) drop-shadow(0 0 0.4px rgba(10,15,0,0.8))" width="17" height="18" viewBox="0 0 17 18"><path d="M2.5 1 v4 M5.5 1 v4" stroke="#fff" stroke-width="1.2"/><path d="M1 5 h6 v3.5 l-1.5 1.5 v7 h-3 v-7 l-1.5 -1.5 z" fill="#fff"/><rect x="9.3" y="3.3" width="6" height="13" fill="none" stroke="#fff" stroke-width="1.6"/><rect x="11" y="1.5" width="2.6" height="1.8" fill="#fff"/></svg>
<svg class="a" style="left:1241px;top:742px;filter:drop-shadow(0 0 0.6px rgba(10,15,0,1)) drop-shadow(0 0 0.4px rgba(10,15,0,0.8))" width="17" height="15" viewBox="0 0 17 15"><rect x="1" y="11" width="2.2" height="3" fill="#fff"/><rect x="4.2" y="9" width="2.2" height="5" fill="#fff"/><rect x="7.4" y="6.5" width="2.2" height="7.5" fill="#fff"/><rect x="10.6" y="4" width="2.2" height="10" fill="#fff"/><rect x="13.8" y="1.5" width="2.2" height="12.5" fill="#fff"/></svg>
<svg class="a" style="left:1265px;top:741px;filter:drop-shadow(0 0 0.6px rgba(10,15,0,1)) drop-shadow(0 0 0.4px rgba(10,15,0,0.8))" width="17" height="17" viewBox="0 0 17 17"><path d="M1 5.5 h3 l4.5 -4.5 v15 l-4.5 -4.5 h-3 z" fill="#fff"/><path d="M10.5 5.5 q1.5 3 0 6 M13 3.5 q3 5 0 10" stroke="#fff" stroke-width="1.2" fill="none"/></svg>
<div class="t" style="left:1310px;top:736.34px;font-size:12px;line-height:12px;color:#fff;letter-spacing:-0.4px">12:24</div>
<div class="t" style="left:1297px;top:752.34px;font-size:12px;line-height:12px;color:#fff;letter-spacing:-0.6px">10. 6. 2016</div>
</body></html>
